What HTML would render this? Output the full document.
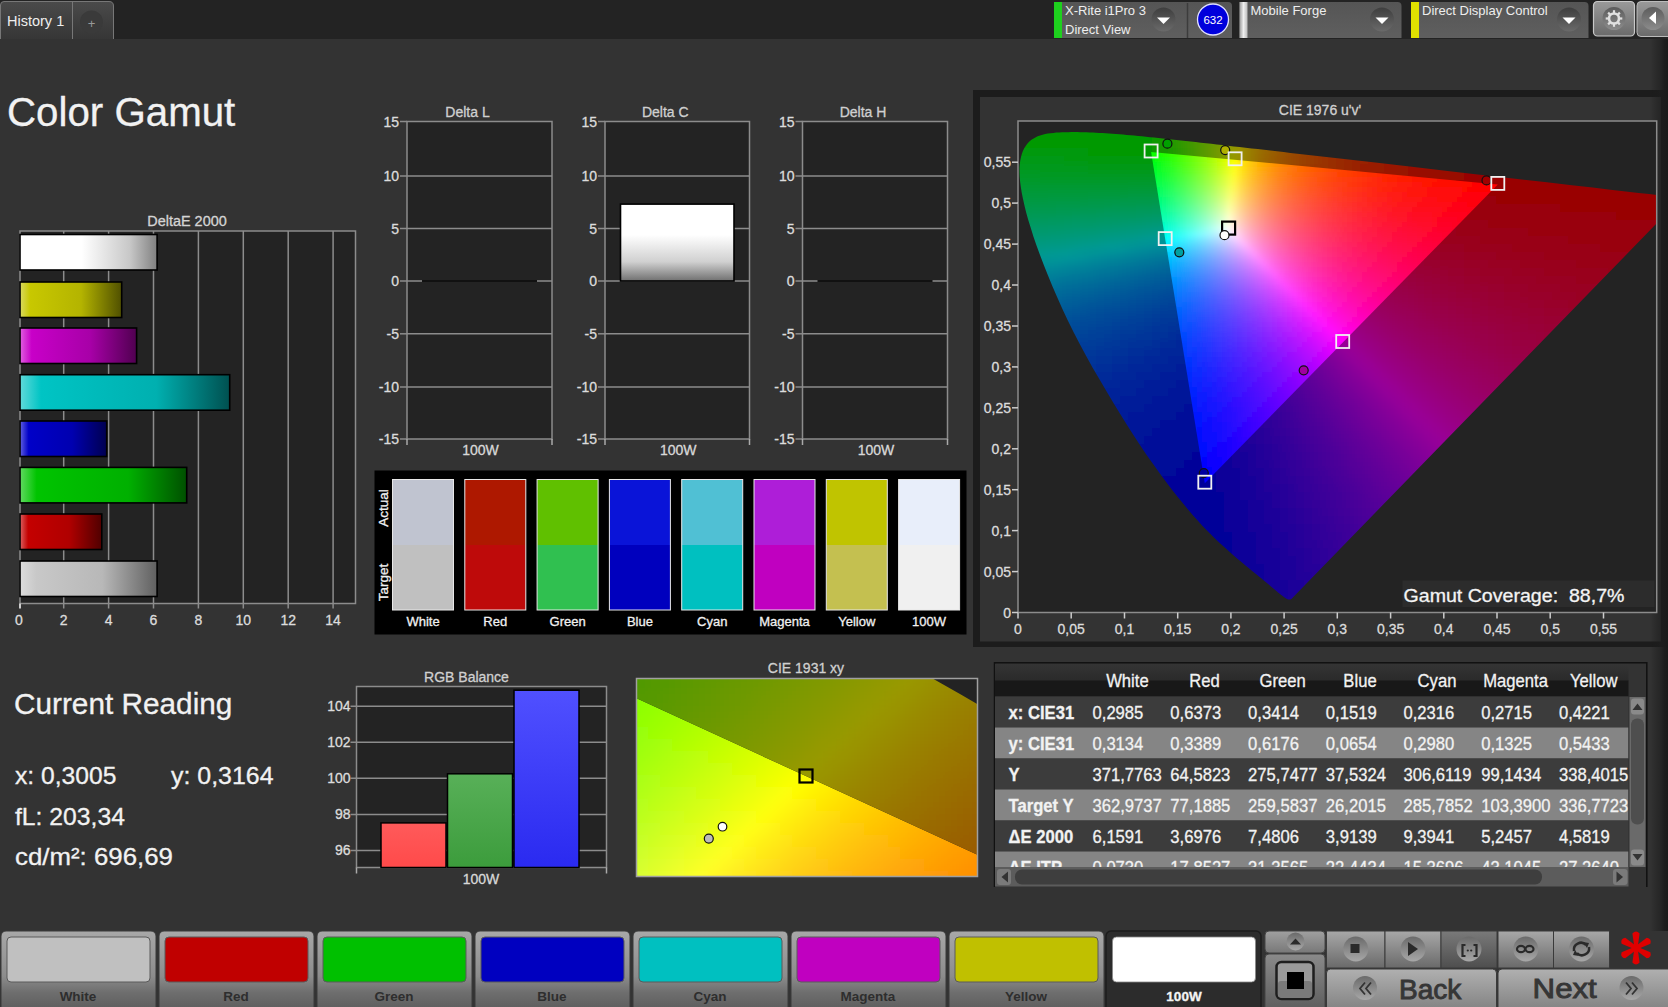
<!DOCTYPE html>
<html><head><meta charset="utf-8"><style>
html,body{margin:0;padding:0;background:#333;overflow:hidden;}
svg{display:block;font-family:"Liberation Sans", sans-serif;}
.c10 rect{width:10px;height:10px} .c8 rect{width:8px;height:8px} .c5 rect{width:5px;height:5px} .c6 rect{width:6px;height:6px} .c12 rect{width:12px;height:12px}
</style></head><body>
<svg width="1668" height="1007" viewBox="0 0 1668 1007">
<defs>
<linearGradient id="tabg" x1="0" y1="0" x2="0" y2="1"><stop offset="0" stop-color="#4a4a4a"/><stop offset="1" stop-color="#363636"/></linearGradient>
<linearGradient id="ddg" x1="0" y1="0" x2="0" y2="1"><stop offset="0" stop-color="#555"/><stop offset="1" stop-color="#5f5f5f"/></linearGradient><linearGradient id="arrg" x1="0" y1="0" x2="0" y2="1"><stop offset="0" stop-color="#3e3e3e"/><stop offset="1" stop-color="#6a6a6a"/></linearGradient><linearGradient id="wstrip" x1="0" y1="0" x2="1" y2="0"><stop offset="0" stop-color="#999"/><stop offset="0.5" stop-color="#f0f0f0"/><stop offset="1" stop-color="#bbb"/></linearGradient><linearGradient id="gearbg" x1="0" y1="0" x2="0" y2="1"><stop offset="0" stop-color="#5c5c5c"/><stop offset="1" stop-color="#8c8c8c"/></linearGradient><linearGradient id="btng" x1="0" y1="0" x2="0" y2="1"><stop offset="0" stop-color="#9a9a9a"/><stop offset="1" stop-color="#6a6a6a"/></linearGradient><linearGradient id="de_w" x1="0" y1="0" x2="1" y2="0"><stop offset="0" stop-color="#fff"/><stop offset="0.45" stop-color="#fff"/><stop offset="0.8" stop-color="#c8c8c8"/><stop offset="1" stop-color="#808080"/></linearGradient><linearGradient id="de_y" x1="0" y1="0" x2="1" y2="0"><stop offset="0" stop-color="#dada60"/><stop offset="0.1" stop-color="#c8c800"/><stop offset="0.6" stop-color="#b4b400"/><stop offset="1" stop-color="#505000"/></linearGradient><linearGradient id="de_m" x1="0" y1="0" x2="1" y2="0"><stop offset="0" stop-color="#e060e0"/><stop offset="0.1" stop-color="#c800c8"/><stop offset="0.6" stop-color="#a800a8"/><stop offset="1" stop-color="#500050"/></linearGradient><linearGradient id="de_c" x1="0" y1="0" x2="1" y2="0"><stop offset="0" stop-color="#60dada"/><stop offset="0.1" stop-color="#00c4c4"/><stop offset="0.65" stop-color="#00b0b0"/><stop offset="1" stop-color="#005050"/></linearGradient><linearGradient id="de_b" x1="0" y1="0" x2="1" y2="0"><stop offset="0" stop-color="#6060e0"/><stop offset="0.1" stop-color="#0000c8"/><stop offset="0.6" stop-color="#0000b0"/><stop offset="1" stop-color="#000050"/></linearGradient><linearGradient id="de_g" x1="0" y1="0" x2="1" y2="0"><stop offset="0" stop-color="#60da60"/><stop offset="0.1" stop-color="#00c400"/><stop offset="0.65" stop-color="#00b000"/><stop offset="1" stop-color="#005000"/></linearGradient><linearGradient id="de_r" x1="0" y1="0" x2="1" y2="0"><stop offset="0" stop-color="#da6060"/><stop offset="0.1" stop-color="#c40000"/><stop offset="0.6" stop-color="#b00000"/><stop offset="1" stop-color="#500000"/></linearGradient><linearGradient id="de_k" x1="0" y1="0" x2="1" y2="0"><stop offset="0" stop-color="#dcdcdc"/><stop offset="0.12" stop-color="#c8c8c8"/><stop offset="0.6" stop-color="#b8b8b8"/><stop offset="1" stop-color="#606060"/></linearGradient><linearGradient id="dcg" x1="0" y1="0" x2="0" y2="1"><stop offset="0" stop-color="#fff"/><stop offset="0.4" stop-color="#fff"/><stop offset="0.75" stop-color="#d0d0d0"/><stop offset="1" stop-color="#707070"/></linearGradient><clipPath id="locus"><path d="M1291.4 598.9 L1291.2 598.9 L1291.0 599.2 L1290.6 599.2 L1290.2 599.5 L1289.7 599.5 L1289.0 599.5 L1288.1 599.5 L1286.5 598.7 L1286.0 598.4 L1285.5 598.1 L1284.9 597.7 L1284.3 597.3 L1283.7 596.8 L1283.1 596.4 L1282.4 595.8 L1281.6 595.3 L1280.9 594.7 L1280.0 594.0 L1279.1 593.2 L1278.0 592.4 L1277.0 591.6 L1275.8 590.6 L1274.6 589.6 L1273.4 588.6 L1272.1 587.5 L1270.7 586.3 L1269.3 585.1 L1267.8 583.8 L1266.3 582.5 L1264.7 581.2 L1263.0 579.8 L1261.2 578.3 L1259.2 576.7 L1257.2 575.1 L1255.0 573.3 L1252.8 571.4 L1250.4 569.5 L1248.0 567.5 L1245.5 565.5 L1242.9 563.3 L1240.2 561.1 L1237.4 558.7 L1234.5 556.2 L1231.4 553.5 L1228.1 550.6 L1224.8 547.6 L1221.4 544.5 L1217.8 541.2 L1214.2 537.7 L1210.5 534.1 L1206.5 530.1 L1202.3 525.7 L1197.9 520.8 L1193.1 515.5 L1188.0 509.6 L1182.7 503.1 L1177.1 496.2 L1171.4 488.9 L1165.4 481.1 L1159.3 472.8 L1153.1 464.1 L1146.6 454.9 L1140.1 445.2 L1133.4 435.0 L1126.7 424.4 L1119.9 413.5 L1113.0 402.2 L1106.2 390.8 L1099.3 379.1 L1092.5 367.4 L1085.9 355.6 L1079.6 343.7 L1073.5 331.9 L1067.7 320.2 L1062.3 308.7 L1057.2 297.3 L1052.4 286.2 L1048.0 275.5 L1043.8 265.0 L1040.0 255.0 L1036.5 245.5 L1033.4 236.4 L1030.7 227.8 L1028.2 219.8 L1026.1 212.2 L1024.4 205.2 L1022.9 198.6 L1021.7 192.5 L1020.8 186.8 L1020.1 181.5 L1019.7 176.6 L1019.5 172.0 L1019.5 167.8 L1019.8 163.9 L1020.3 160.2 L1021.0 156.9 L1021.9 153.7 L1022.9 150.9 L1024.2 148.3 L1025.7 145.9 L1027.3 143.7 L1029.1 141.8 L1031.1 140.1 L1033.2 138.7 L1035.4 137.4 L1037.7 136.3 L1040.1 135.4 L1042.6 134.7 L1045.2 134.0 L1047.9 133.5 L1050.6 133.2 L1053.5 132.9 L1056.3 132.6 L1059.3 132.4 L1062.2 132.3 L1065.2 132.2 L1068.3 132.2 L1071.3 132.1 L1074.3 132.1 L1077.3 132.1 L1080.4 132.2 L1083.4 132.2 L1086.5 132.3 L1089.6 132.4 L1092.7 132.5 L1095.9 132.7 L1099.1 132.9 L1102.3 133.1 L1105.6 133.3 L1109.0 133.5 L1112.4 133.7 L1115.9 134.0 L1119.4 134.3 L1123.0 134.6 L1126.6 134.9 L1130.4 135.2 L1134.1 135.6 L1138.0 136.0 L1141.9 136.3 L1145.9 136.7 L1150.0 137.2 L1154.1 137.6 L1158.4 138.0 L1162.7 138.5 L1167.1 138.9 L1171.7 139.4 L1176.3 139.9 L1181.0 140.4 L1185.8 141.0 L1190.7 141.5 L1195.7 142.1 L1200.8 142.7 L1206.0 143.2 L1211.3 143.8 L1216.7 144.4 L1222.3 145.1 L1227.9 145.7 L1233.7 146.4 L1239.5 147.0 L1245.5 147.7 L1251.6 148.4 L1257.8 149.1 L1264.1 149.8 L1270.5 150.6 L1277.0 151.3 L1283.7 152.1 L1290.4 152.9 L1297.3 153.7 L1333.0 157.8 L1370.9 162.1 L1409.8 166.6 L1447.5 170.9 L1484.2 175.2 L1517.4 178.9 L1546.8 182.3 L1571.8 185.2 L1592.7 187.6 L1610.4 189.7 L1625.7 191.4 L1638.6 192.9 L1649.1 194.1 L1657.2 195.0 L1663.6 195.8 L1668.3 196.3 L1671.4 196.7 L1673.9 196.9 L1676.1 197.2 L1677.9 197.4 L1679.5 197.6 L1680.7 197.7 L1681.5 197.8 L1681.6 197.8 Z"/></clipPath><clipPath id="plot76"><rect x="1018.0" y="121" width="638.7" height="491.5"/></clipPath><clipPath id="tri76"><path d="M1497.8 184.4 L1151.1 152.0 L1204.8 483.2 Z"/></clipPath><filter id="bl6" x="-5%" y="-5%" width="110%" height="110%"><feGaussianBlur stdDeviation="4"/></filter><filter id="bl4" x="-5%" y="-5%" width="110%" height="110%"><feGaussianBlur stdDeviation="2.6"/></filter><linearGradient id="rshade" x1="0" y1="0" x2="1" y2="0"><stop offset="0" stop-color="#1a1a1a" stop-opacity="0"/><stop offset="0.55" stop-color="#1e1e1e" stop-opacity="0.6"/><stop offset="0.8" stop-color="#1c1c1c" stop-opacity="0.95"/><stop offset="1" stop-color="#1a1a1a"/></linearGradient><linearGradient id="rb_r" x1="0" y1="0" x2="0" y2="1"><stop offset="0" stop-color="#ff5a5a"/><stop offset="1" stop-color="#ff4a4a"/></linearGradient><linearGradient id="rb_g" x1="0" y1="0" x2="0" y2="1"><stop offset="0" stop-color="#58b058"/><stop offset="1" stop-color="#3c9c3c"/></linearGradient><linearGradient id="rb_b" x1="0" y1="0" x2="0" y2="1"><stop offset="0" stop-color="#5050ff"/><stop offset="1" stop-color="#2a2af0"/></linearGradient><clipPath id="plot31"><rect x="636.5" y="678.5" width="341.0" height="198.0"/></clipPath><clipPath id="in31"><path d="M616.5 689.1 L997.5 864.0 L997.5 896.5 L616.5 896.5 Z"/></clipPath><clipPath id="out31"><path d="M616.5 689.1 L997.5 864.0 L997.5 658.5 L616.5 658.5 Z"/></clipPath><filter id="bl8" x="-5%" y="-5%" width="110%" height="110%"><feGaussianBlur stdDeviation="6"/></filter><clipPath id="loc31"><path d="M-169.9 1926.7 L-170.3 1926.7 L-171.1 1926.9 L-171.9 1926.9 L-173.1 1927.1 L-174.3 1927.1 L-175.9 1927.1 L-177.9 1927.1 L-180.6 1926.5 L-181.4 1926.2 L-182.2 1925.9 L-183.1 1925.6 L-184.1 1925.2 L-185.0 1924.8 L-186.0 1924.4 L-187.0 1924.0 L-188.1 1923.5 L-189.3 1922.9 L-190.6 1922.3 L-192.0 1921.7 L-193.5 1920.9 L-195.1 1920.2 L-196.8 1919.3 L-198.6 1918.4 L-200.4 1917.5 L-202.3 1916.4 L-204.2 1915.4 L-206.3 1914.3 L-208.5 1913.1 L-210.8 1911.9 L-213.3 1910.7 L-215.9 1909.4 L-218.6 1907.9 L-221.6 1906.5 L-224.8 1904.8 L-228.2 1903.1 L-231.8 1901.3 L-235.6 1899.4 L-239.5 1897.5 L-243.6 1895.4 L-247.9 1893.3 L-252.3 1891.0 L-257.0 1888.6 L-261.8 1886.0 L-267.0 1883.2 L-272.3 1880.1 L-277.9 1876.9 L-283.7 1873.5 L-289.7 1869.9 L-295.8 1866.0 L-302.2 1861.9 L-308.9 1857.3 L-316.0 1852.2 L-323.5 1846.4 L-331.6 1839.9 L-340.2 1832.5 L-349.3 1824.3 L-358.8 1815.2 L-368.9 1805.2 L-379.4 1794.3 L-390.4 1782.3 L-402.0 1769.1 L-414.0 1754.6 L-426.6 1738.5 L-439.8 1721.0 L-453.6 1701.7 L-468.1 1680.7 L-483.3 1657.8 L-499.4 1633.0 L-516.4 1606.1 L-534.0 1577.2 L-552.2 1546.0 L-570.7 1512.5 L-589.4 1476.6 L-608.0 1438.2 L-626.6 1397.2 L-645.2 1353.8 L-663.7 1308.0 L-682.1 1259.7 L-700.5 1209.0 L-718.6 1156.3 L-736.3 1101.8 L-753.2 1046.0 L-769.3 989.0 L-784.2 931.3 L-797.9 873.1 L-810.2 815.0 L-821.0 757.1 L-830.2 699.9 L-837.6 643.6 L-843.1 588.6 L-846.6 534.9 L-848.1 482.7 L-847.3 432.1 L-844.2 383.5 L-838.7 337.0 L-830.8 292.8 L-820.4 251.3 L-807.5 212.7 L-792.0 177.3 L-774.2 145.2 L-754.1 116.6 L-732.0 91.7 L-708.0 70.6 L-682.3 53.5 L-655.2 40.2 L-626.8 30.4 L-597.4 23.9 L-567.1 20.4 L-536.2 19.8 L-504.7 21.6 L-472.9 25.4 L-440.7 31.0 L-408.3 37.9 L-375.8 45.9 L-343.3 54.7 L-310.9 64.2 L-278.8 74.2 L-247.1 84.6 L-215.9 95.3 L-185.2 106.2 L-154.8 117.4 L-124.8 128.8 L-95.1 140.5 L-65.6 152.5 L-36.2 164.8 L-7.1 177.4 L22.0 190.2 L51.0 203.3 L79.9 216.7 L108.8 230.2 L137.6 244.1 L166.4 258.1 L195.1 272.3 L223.7 286.7 L252.2 301.3 L280.7 316.0 L309.1 330.9 L337.6 345.9 L366.0 361.0 L394.4 376.3 L422.8 391.7 L451.2 407.1 L479.6 422.7 L508.1 438.4 L536.6 454.2 L565.2 470.0 L593.7 485.9 L622.1 501.8 L650.5 517.8 L678.9 533.9 L707.2 549.9 L735.5 566.0 L763.8 582.1 L792.1 598.2 L820.4 614.3 L848.6 630.3 L876.7 646.4 L904.7 662.4 L932.6 678.4 L960.4 694.3 L988.0 710.2 L1015.5 726.0 L1042.8 741.7 L1070.0 757.4 L1097.0 773.0 L1123.9 788.4 L1150.5 803.8 L1176.9 819.0 L1305.5 893.1 L1426.5 962.5 L1536.7 1026.2 L1632.6 1081.4 L1717.0 1130.0 L1787.1 1170.0 L1844.0 1202.9 L1889.4 1229.1 L1925.6 1249.8 L1954.6 1266.6 L1978.9 1280.6 L1998.8 1292.1 L2014.7 1301.1 L2026.7 1308.0 L2035.8 1313.3 L2042.6 1317.2 L2047.0 1319.7 L2050.5 1321.8 L2053.6 1323.5 L2056.1 1325.0 L2058.3 1326.3 L2060.1 1327.3 L2061.2 1327.9 L2061.3 1328.0 Z"/></clipPath><clipPath id="tclip"><rect x="995" y="664" width="633.5" height="203"/></clipPath><linearGradient id="thg" x1="0" y1="0" x2="0" y2="1"><stop offset="0" stop-color="#343434"/><stop offset="1" stop-color="#2a2a2a"/></linearGradient><linearGradient id="bbg" x1="0" y1="0" x2="0" y2="1"><stop offset="0" stop-color="#a8a8a8"/><stop offset="0.55" stop-color="#8c8c8c"/><stop offset="0.75" stop-color="#6e6e6e"/><stop offset="1" stop-color="#5a5a5a"/></linearGradient><linearGradient id="cbg" x1="0" y1="0" x2="0" y2="1"><stop offset="0" stop-color="#a0a0a0"/><stop offset="1" stop-color="#787878"/></linearGradient><linearGradient id="cbg2" x1="0" y1="0" x2="0" y2="1"><stop offset="0" stop-color="#8a8a8a"/><stop offset="1" stop-color="#5a5a5a"/></linearGradient><linearGradient id="tbg" x1="0" y1="0" x2="0" y2="1"><stop offset="0" stop-color="#a8a8a8"/><stop offset="1" stop-color="#6a6a6a"/></linearGradient><linearGradient id="tbg2" x1="0" y1="0" x2="0" y2="1"><stop offset="0" stop-color="#7a7a7a"/><stop offset="1" stop-color="#4e4e4e"/></linearGradient><linearGradient id="nbg" x1="0" y1="0" x2="0" y2="1"><stop offset="0" stop-color="#b0b0b0"/><stop offset="1" stop-color="#7e7e7e"/></linearGradient><linearGradient id="circg" x1="0" y1="0" x2="0" y2="1"><stop offset="0" stop-color="#6a6a6a"/><stop offset="1" stop-color="#a8a8a8"/></linearGradient>
</defs>
<rect width="1668" height="1007" fill="#333"/>
<rect x="0" y="0" width="1668" height="39" fill="#232323"/><path d="M0.5 39 V5 Q0.5 1.5 4 1.5 H109 Q113.5 1.5 113.5 6 V39" fill="url(#tabg)" stroke="#777" stroke-width="1"/><line x1="72.5" y1="2" x2="72.5" y2="39" stroke="#777" stroke-width="1"/><circle cx="91.5" cy="22" r="11.5" fill="#3a3a3a"/><text x="91.5" y="28" font-size="13" fill="#999" text-anchor="middle">+</text><text x="7" y="26" font-size="14.5" fill="#eee">History 1</text><path d="M1054 38 V2 H1228 Q1232 2 1232 6 V38 Z" fill="url(#ddg)"/><rect x="1054" y="2" width="8" height="36" fill="#1ed01e"/><text x="1065" y="15" font-size="13" fill="#eee">X-Rite i1Pro 3</text><text x="1065" y="34" font-size="13" fill="#eee">Direct View</text><circle cx="1163.5" cy="19.5" r="12" fill="url(#arrg)"/><path d="M1157.0 17.5 H1170.0 L1163.5 24 Z" fill="#fff"/><line x1="1187.5" y1="3" x2="1187.5" y2="38" stroke="#3c3c3c" stroke-width="1.5"/><circle cx="1213" cy="19.5" r="15.5" fill="#0000dc" stroke="#e0e0ff" stroke-width="1.3"/><text x="1213" y="24" font-size="11.5" fill="#fff" text-anchor="middle">632</text><path d="M1239.5 38 V2 H1397.5 Q1401.5 2 1401.5 6 V38 Z" fill="url(#ddg)"/><rect x="1239.5" y="2" width="8" height="36" fill="url(#wstrip)"/><text x="1250.5" y="15" font-size="13" fill="#eee">Mobile Forge</text><circle cx="1382" cy="19.5" r="12" fill="url(#arrg)"/><path d="M1375.5 17.5 H1388.5 L1382 24 Z" fill="#fff"/><path d="M1411 38 V2 H1584.5 Q1588.5 2 1588.5 6 V38 Z" fill="url(#ddg)"/><rect x="1411" y="2" width="8" height="36" fill="#e0e000"/><text x="1422" y="15" font-size="13" fill="#eee">Direct Display Control</text><circle cx="1569" cy="19.5" r="12" fill="url(#arrg)"/><path d="M1562.5 17.5 H1575.5 L1569 24 Z" fill="#fff"/><rect x="1593.5" y="1.5" width="41" height="34.5" rx="4" fill="url(#btng)" stroke="#c8c8c8" stroke-width="1.2"/><circle cx="1614" cy="18.5" r="11.5" fill="url(#gearbg)"/><rect x="1612.9" y="10.2" width="2.2" height="3.5" fill="#e0e0e0" transform="rotate(0 1614 18.5)"/><rect x="1612.9" y="10.2" width="2.2" height="3.5" fill="#e0e0e0" transform="rotate(45 1614 18.5)"/><rect x="1612.9" y="10.2" width="2.2" height="3.5" fill="#e0e0e0" transform="rotate(90 1614 18.5)"/><rect x="1612.9" y="10.2" width="2.2" height="3.5" fill="#e0e0e0" transform="rotate(135 1614 18.5)"/><rect x="1612.9" y="10.2" width="2.2" height="3.5" fill="#e0e0e0" transform="rotate(180 1614 18.5)"/><rect x="1612.9" y="10.2" width="2.2" height="3.5" fill="#e0e0e0" transform="rotate(225 1614 18.5)"/><rect x="1612.9" y="10.2" width="2.2" height="3.5" fill="#e0e0e0" transform="rotate(270 1614 18.5)"/><rect x="1612.9" y="10.2" width="2.2" height="3.5" fill="#e0e0e0" transform="rotate(315 1614 18.5)"/><circle cx="1614" cy="18.5" r="5" fill="none" stroke="#e0e0e0" stroke-width="2.6"/><rect x="1637" y="1.5" width="40" height="35" rx="4" fill="url(#btng)" stroke="#bbb" stroke-width="1"/><circle cx="1653" cy="18.5" r="11.5" fill="url(#gearbg)"/><path d="M1649 18 L1656 11.5 V24 Z" fill="#fff"/><text x="7" y="126" font-size="40" fill="#f2f2f2" textLength="228.3" lengthAdjust="spacingAndGlyphs"  xml:space="preserve" stroke="#f2f2f2" stroke-width="0.3">Color Gamut</text><rect x="20" y="231" width="335.5" height="372.5" fill="#232323" stroke="#8c8c8c" stroke-width="1.5"/><line x1="63.7" y1="231" x2="63.7" y2="608.5" stroke="#8c8c8c" stroke-width="1.5"/><line x1="108.6" y1="231" x2="108.6" y2="608.5" stroke="#8c8c8c" stroke-width="1.5"/><line x1="153.5" y1="231" x2="153.5" y2="608.5" stroke="#8c8c8c" stroke-width="1.5"/><line x1="198.4" y1="231" x2="198.4" y2="608.5" stroke="#8c8c8c" stroke-width="1.5"/><line x1="243.3" y1="231" x2="243.3" y2="608.5" stroke="#8c8c8c" stroke-width="1.5"/><line x1="288.2" y1="231" x2="288.2" y2="608.5" stroke="#8c8c8c" stroke-width="1.5"/><line x1="333.1" y1="231" x2="333.1" y2="608.5" stroke="#8c8c8c" stroke-width="1.5"/><line x1="20" y1="603.5" x2="20" y2="608.5" stroke="#ccc" stroke-width="2"/><text x="18.8" y="624.5" font-size="14" fill="#dcdcdc" text-anchor="middle" stroke="#dcdcdc" stroke-width="0.3">0</text><text x="63.7" y="624.5" font-size="14" fill="#dcdcdc" text-anchor="middle" stroke="#dcdcdc" stroke-width="0.3">2</text><text x="108.6" y="624.5" font-size="14" fill="#dcdcdc" text-anchor="middle" stroke="#dcdcdc" stroke-width="0.3">4</text><text x="153.5" y="624.5" font-size="14" fill="#dcdcdc" text-anchor="middle" stroke="#dcdcdc" stroke-width="0.3">6</text><text x="198.4" y="624.5" font-size="14" fill="#dcdcdc" text-anchor="middle" stroke="#dcdcdc" stroke-width="0.3">8</text><text x="243.3" y="624.5" font-size="14" fill="#dcdcdc" text-anchor="middle" stroke="#dcdcdc" stroke-width="0.3">10</text><text x="288.2" y="624.5" font-size="14" fill="#dcdcdc" text-anchor="middle" stroke="#dcdcdc" stroke-width="0.3">12</text><text x="333.1" y="624.5" font-size="14" fill="#dcdcdc" text-anchor="middle" stroke="#dcdcdc" stroke-width="0.3">14</text><text x="187" y="226" font-size="14" fill="#d4d4d4" text-anchor="middle" textLength="79.5" lengthAdjust="spacingAndGlyphs"  xml:space="preserve" stroke="#d4d4d4" stroke-width="0.3">DeltaE 2000</text><rect x="20" y="234.5" width="137.1" height="35.5" fill="url(#de_w)" stroke="#000" stroke-width="1.6"/><rect x="20" y="282.0" width="101.7" height="35.5" fill="url(#de_y)" stroke="#000" stroke-width="1.6"/><rect x="20" y="328.0" width="116.6" height="35.5" fill="url(#de_m)" stroke="#000" stroke-width="1.6"/><rect x="20" y="374.7" width="209.7" height="35.5" fill="url(#de_c)" stroke="#000" stroke-width="1.6"/><rect x="20" y="421.0" width="86.7" height="35.5" fill="url(#de_b)" stroke="#000" stroke-width="1.6"/><rect x="20" y="467.4" width="166.7" height="35.5" fill="url(#de_g)" stroke="#000" stroke-width="1.6"/><rect x="20" y="514.0" width="81.8" height="35.5" fill="url(#de_r)" stroke="#000" stroke-width="1.6"/><rect x="20" y="561.0" width="137.1" height="35.5" fill="url(#de_k)" stroke="#000" stroke-width="1.6"/><rect x="407" y="121.5" width="145" height="317.5" fill="#232323" stroke="#8c8c8c" stroke-width="1.5"/><line x1="400" y1="121.5" x2="407" y2="121.5" stroke="#8c8c8c" stroke-width="1.5"/><text x="399" y="126.5" font-size="14" fill="#dcdcdc" text-anchor="end" stroke="#dcdcdc" stroke-width="0.3">15</text><line x1="407" y1="176.0" x2="552" y2="176.0" stroke="#8c8c8c" stroke-width="1.5"/><line x1="400" y1="176.0" x2="407" y2="176.0" stroke="#8c8c8c" stroke-width="1.5"/><text x="399" y="181.0" font-size="14" fill="#dcdcdc" text-anchor="end" stroke="#dcdcdc" stroke-width="0.3">10</text><line x1="407" y1="228.5" x2="552" y2="228.5" stroke="#8c8c8c" stroke-width="1.5"/><line x1="400" y1="228.5" x2="407" y2="228.5" stroke="#8c8c8c" stroke-width="1.5"/><text x="399" y="233.5" font-size="14" fill="#dcdcdc" text-anchor="end" stroke="#dcdcdc" stroke-width="0.3">5</text><line x1="407" y1="281.0" x2="552" y2="281.0" stroke="#8c8c8c" stroke-width="1.5"/><line x1="400" y1="281.0" x2="407" y2="281.0" stroke="#8c8c8c" stroke-width="1.5"/><text x="399" y="286.0" font-size="14" fill="#dcdcdc" text-anchor="end" stroke="#dcdcdc" stroke-width="0.3">0</text><line x1="407" y1="333.8" x2="552" y2="333.8" stroke="#8c8c8c" stroke-width="1.5"/><line x1="400" y1="333.8" x2="407" y2="333.8" stroke="#8c8c8c" stroke-width="1.5"/><text x="399" y="338.8" font-size="14" fill="#dcdcdc" text-anchor="end" stroke="#dcdcdc" stroke-width="0.3">-5</text><line x1="407" y1="387.0" x2="552" y2="387.0" stroke="#8c8c8c" stroke-width="1.5"/><line x1="400" y1="387.0" x2="407" y2="387.0" stroke="#8c8c8c" stroke-width="1.5"/><text x="399" y="392.0" font-size="14" fill="#dcdcdc" text-anchor="end" stroke="#dcdcdc" stroke-width="0.3">-10</text><line x1="400" y1="439.0" x2="407" y2="439.0" stroke="#8c8c8c" stroke-width="1.5"/><text x="399" y="444.0" font-size="14" fill="#dcdcdc" text-anchor="end" stroke="#dcdcdc" stroke-width="0.3">-15</text><line x1="407" y1="439" x2="407" y2="445" stroke="#aaa" stroke-width="1.5"/><line x1="552" y1="439" x2="552" y2="445" stroke="#aaa" stroke-width="1.5"/><text x="467.5" y="117" font-size="14" fill="#d0d0d0" text-anchor="middle" stroke="#d0d0d0" stroke-width="0.3">Delta L</text><text x="480.5" y="455" font-size="14" fill="#d8d8d8" text-anchor="middle" stroke="#d8d8d8" stroke-width="0.3">100W</text><line x1="422" y1="281.0" x2="537" y2="281.0" stroke="#111" stroke-width="2"/><rect x="605" y="121.5" width="144.5" height="317.5" fill="#232323" stroke="#8c8c8c" stroke-width="1.5"/><line x1="598" y1="121.5" x2="605" y2="121.5" stroke="#8c8c8c" stroke-width="1.5"/><text x="597" y="126.5" font-size="14" fill="#dcdcdc" text-anchor="end" stroke="#dcdcdc" stroke-width="0.3">15</text><line x1="605" y1="176.0" x2="749.5" y2="176.0" stroke="#8c8c8c" stroke-width="1.5"/><line x1="598" y1="176.0" x2="605" y2="176.0" stroke="#8c8c8c" stroke-width="1.5"/><text x="597" y="181.0" font-size="14" fill="#dcdcdc" text-anchor="end" stroke="#dcdcdc" stroke-width="0.3">10</text><line x1="605" y1="228.5" x2="749.5" y2="228.5" stroke="#8c8c8c" stroke-width="1.5"/><line x1="598" y1="228.5" x2="605" y2="228.5" stroke="#8c8c8c" stroke-width="1.5"/><text x="597" y="233.5" font-size="14" fill="#dcdcdc" text-anchor="end" stroke="#dcdcdc" stroke-width="0.3">5</text><line x1="605" y1="281.0" x2="749.5" y2="281.0" stroke="#8c8c8c" stroke-width="1.5"/><line x1="598" y1="281.0" x2="605" y2="281.0" stroke="#8c8c8c" stroke-width="1.5"/><text x="597" y="286.0" font-size="14" fill="#dcdcdc" text-anchor="end" stroke="#dcdcdc" stroke-width="0.3">0</text><line x1="605" y1="333.8" x2="749.5" y2="333.8" stroke="#8c8c8c" stroke-width="1.5"/><line x1="598" y1="333.8" x2="605" y2="333.8" stroke="#8c8c8c" stroke-width="1.5"/><text x="597" y="338.8" font-size="14" fill="#dcdcdc" text-anchor="end" stroke="#dcdcdc" stroke-width="0.3">-5</text><line x1="605" y1="387.0" x2="749.5" y2="387.0" stroke="#8c8c8c" stroke-width="1.5"/><line x1="598" y1="387.0" x2="605" y2="387.0" stroke="#8c8c8c" stroke-width="1.5"/><text x="597" y="392.0" font-size="14" fill="#dcdcdc" text-anchor="end" stroke="#dcdcdc" stroke-width="0.3">-10</text><line x1="598" y1="439.0" x2="605" y2="439.0" stroke="#8c8c8c" stroke-width="1.5"/><text x="597" y="444.0" font-size="14" fill="#dcdcdc" text-anchor="end" stroke="#dcdcdc" stroke-width="0.3">-15</text><line x1="605" y1="439" x2="605" y2="445" stroke="#aaa" stroke-width="1.5"/><line x1="749.5" y1="439" x2="749.5" y2="445" stroke="#aaa" stroke-width="1.5"/><text x="665.25" y="117" font-size="14" fill="#d0d0d0" text-anchor="middle" stroke="#d0d0d0" stroke-width="0.3">Delta C</text><text x="678.25" y="455" font-size="14" fill="#d8d8d8" text-anchor="middle" stroke="#d8d8d8" stroke-width="0.3">100W</text><rect x="620.5" y="204.1" width="113.5" height="76.9" fill="url(#dcg)" stroke="#000" stroke-width="1.6"/><rect x="802.5" y="121.5" width="145.0" height="317.5" fill="#232323" stroke="#8c8c8c" stroke-width="1.5"/><line x1="795.5" y1="121.5" x2="802.5" y2="121.5" stroke="#8c8c8c" stroke-width="1.5"/><text x="794.5" y="126.5" font-size="14" fill="#dcdcdc" text-anchor="end" stroke="#dcdcdc" stroke-width="0.3">15</text><line x1="802.5" y1="176.0" x2="947.5" y2="176.0" stroke="#8c8c8c" stroke-width="1.5"/><line x1="795.5" y1="176.0" x2="802.5" y2="176.0" stroke="#8c8c8c" stroke-width="1.5"/><text x="794.5" y="181.0" font-size="14" fill="#dcdcdc" text-anchor="end" stroke="#dcdcdc" stroke-width="0.3">10</text><line x1="802.5" y1="228.5" x2="947.5" y2="228.5" stroke="#8c8c8c" stroke-width="1.5"/><line x1="795.5" y1="228.5" x2="802.5" y2="228.5" stroke="#8c8c8c" stroke-width="1.5"/><text x="794.5" y="233.5" font-size="14" fill="#dcdcdc" text-anchor="end" stroke="#dcdcdc" stroke-width="0.3">5</text><line x1="802.5" y1="281.0" x2="947.5" y2="281.0" stroke="#8c8c8c" stroke-width="1.5"/><line x1="795.5" y1="281.0" x2="802.5" y2="281.0" stroke="#8c8c8c" stroke-width="1.5"/><text x="794.5" y="286.0" font-size="14" fill="#dcdcdc" text-anchor="end" stroke="#dcdcdc" stroke-width="0.3">0</text><line x1="802.5" y1="333.8" x2="947.5" y2="333.8" stroke="#8c8c8c" stroke-width="1.5"/><line x1="795.5" y1="333.8" x2="802.5" y2="333.8" stroke="#8c8c8c" stroke-width="1.5"/><text x="794.5" y="338.8" font-size="14" fill="#dcdcdc" text-anchor="end" stroke="#dcdcdc" stroke-width="0.3">-5</text><line x1="802.5" y1="387.0" x2="947.5" y2="387.0" stroke="#8c8c8c" stroke-width="1.5"/><line x1="795.5" y1="387.0" x2="802.5" y2="387.0" stroke="#8c8c8c" stroke-width="1.5"/><text x="794.5" y="392.0" font-size="14" fill="#dcdcdc" text-anchor="end" stroke="#dcdcdc" stroke-width="0.3">-10</text><line x1="795.5" y1="439.0" x2="802.5" y2="439.0" stroke="#8c8c8c" stroke-width="1.5"/><text x="794.5" y="444.0" font-size="14" fill="#dcdcdc" text-anchor="end" stroke="#dcdcdc" stroke-width="0.3">-15</text><line x1="802.5" y1="439" x2="802.5" y2="445" stroke="#aaa" stroke-width="1.5"/><line x1="947.5" y1="439" x2="947.5" y2="445" stroke="#aaa" stroke-width="1.5"/><text x="863.0" y="117" font-size="14" fill="#d0d0d0" text-anchor="middle" stroke="#d0d0d0" stroke-width="0.3">Delta H</text><text x="876.0" y="455" font-size="14" fill="#d8d8d8" text-anchor="middle" stroke="#d8d8d8" stroke-width="0.3">100W</text><line x1="817.5" y1="281.0" x2="932.5" y2="281.0" stroke="#111" stroke-width="2"/><rect x="374.5" y="470.5" width="592" height="164" fill="#000"/><rect x="392.5" y="479.5" width="61" height="65.5" fill="#c0c4d0"/><rect x="392.5" y="545" width="61" height="65" fill="#c0c0c0"/><rect x="392.5" y="479.5" width="61" height="130.5" fill="none" stroke="#e8e8e8" stroke-width="1"/><text x="423.0" y="626" font-size="13" fill="#f0f0f0" text-anchor="middle" stroke="#f0f0f0" stroke-width="0.3">White</text><rect x="464.8" y="479.5" width="61" height="65.5" fill="#ae1800"/><rect x="464.8" y="545" width="61" height="65" fill="#be0a0a"/><rect x="464.8" y="479.5" width="61" height="130.5" fill="none" stroke="#e8e8e8" stroke-width="1"/><text x="495.3" y="626" font-size="13" fill="#f0f0f0" text-anchor="middle" stroke="#f0f0f0" stroke-width="0.3">Red</text><rect x="537.1" y="479.5" width="61" height="65.5" fill="#60c000"/><rect x="537.1" y="545" width="61" height="65" fill="#30c050"/><rect x="537.1" y="479.5" width="61" height="130.5" fill="none" stroke="#e8e8e8" stroke-width="1"/><text x="567.6" y="626" font-size="13" fill="#f0f0f0" text-anchor="middle" stroke="#f0f0f0" stroke-width="0.3">Green</text><rect x="609.4" y="479.5" width="61" height="65.5" fill="#0a14d8"/><rect x="609.4" y="545" width="61" height="65" fill="#0000be"/><rect x="609.4" y="479.5" width="61" height="130.5" fill="none" stroke="#e8e8e8" stroke-width="1"/><text x="639.9" y="626" font-size="13" fill="#f0f0f0" text-anchor="middle" stroke="#f0f0f0" stroke-width="0.3">Blue</text><rect x="681.7" y="479.5" width="61" height="65.5" fill="#50c0d4"/><rect x="681.7" y="545" width="61" height="65" fill="#00c0c0"/><rect x="681.7" y="479.5" width="61" height="130.5" fill="none" stroke="#e8e8e8" stroke-width="1"/><text x="712.2" y="626" font-size="13" fill="#f0f0f0" text-anchor="middle" stroke="#f0f0f0" stroke-width="0.3">Cyan</text><rect x="754.0" y="479.5" width="61" height="65.5" fill="#ae1ed8"/><rect x="754.0" y="545" width="61" height="65" fill="#c000c0"/><rect x="754.0" y="479.5" width="61" height="130.5" fill="none" stroke="#e8e8e8" stroke-width="1"/><text x="784.5" y="626" font-size="13" fill="#f0f0f0" text-anchor="middle" stroke="#f0f0f0" stroke-width="0.3">Magenta</text><rect x="826.3" y="479.5" width="61" height="65.5" fill="#c0c400"/><rect x="826.3" y="545" width="61" height="65" fill="#c4c050"/><rect x="826.3" y="479.5" width="61" height="130.5" fill="none" stroke="#e8e8e8" stroke-width="1"/><text x="856.8" y="626" font-size="13" fill="#f0f0f0" text-anchor="middle" stroke="#f0f0f0" stroke-width="0.3">Yellow</text><rect x="898.6" y="479.5" width="61" height="65.5" fill="#e8eefa"/><rect x="898.6" y="545" width="61" height="65" fill="#f0f0f0"/><rect x="898.6" y="479.5" width="61" height="130.5" fill="none" stroke="#e8e8e8" stroke-width="1"/><text x="929.1" y="626" font-size="13" fill="#f0f0f0" text-anchor="middle" stroke="#f0f0f0" stroke-width="0.3">100W</text><text transform="translate(387.5 508) rotate(-90)" font-size="13.5" fill="#f0f0f0" text-anchor="middle" stroke="#f0f0f0" stroke-width="0.3">Actual</text><text transform="translate(387.5 582.5) rotate(-90)" font-size="13.5" fill="#f0f0f0" text-anchor="middle" stroke="#f0f0f0" stroke-width="0.3">Target</text><rect x="973" y="90" width="700" height="557" fill="#1c1c1c"/><rect x="980" y="97" width="681" height="544.5" fill="#333"/><rect x="1650" y="39" width="18" height="892" fill="url(#rshade)"/><rect x="1018.0" y="121" width="638.7" height="491.5" fill="#232323"/><g clip-path="url(#plot76)"><g clip-path="url(#locus)"><g filter="url(#bl6)"><g class="c8"><g transform="translate(0 108)"><rect x="1032" fill="#009900"/><rect x="1040" fill="#009900"/><rect x="1048" fill="#009900"/><rect x="1056" fill="#009900"/><rect x="1064" fill="#009900"/><rect x="1072" fill="#009900"/><rect x="1080" fill="#009900"/><rect x="1088" fill="#009900"/><rect x="1096" fill="#009900"/><rect x="1104" fill="#009900"/><rect x="1112" fill="#009900"/><rect x="1120" fill="#009900"/><rect x="1128" fill="#009900"/><rect x="1136" fill="#009900"/><rect x="1144" fill="#049900"/></g><g transform="translate(0 116)"><rect x="1016" fill="#009900"/><rect x="1024" fill="#009900"/><rect x="1032" fill="#009900"/><rect x="1040" fill="#009900"/><rect x="1048" fill="#009900"/><rect x="1056" fill="#009900"/><rect x="1064" fill="#009900"/><rect x="1072" fill="#009900"/><rect x="1080" fill="#009900"/><rect x="1088" fill="#009900"/><rect x="1096" fill="#009900"/><rect x="1104" fill="#009900"/><rect x="1112" fill="#009900"/><rect x="1120" fill="#009900"/><rect x="1128" fill="#009900"/><rect x="1136" fill="#009900"/><rect x="1144" fill="#039900"/><rect x="1152" fill="#0d9900"/><rect x="1160" fill="#189900"/><rect x="1168" fill="#249900"/><rect x="1176" fill="#2f9900"/><rect x="1184" fill="#3c9900"/><rect x="1192" fill="#499900"/><rect x="1200" fill="#569900"/><rect x="1208" fill="#649900"/><rect x="1216" fill="#739900"/></g><g transform="translate(0 124)"><rect x="1008" fill="#009900"/><rect x="1016" fill="#009900"/><rect x="1024" fill="#009900"/><rect x="1032" fill="#009900"/><rect x="1040" fill="#009900"/><rect x="1048" fill="#009900"/><rect x="1056" fill="#009900"/><rect x="1064" fill="#009900"/><rect x="1072" fill="#009900"/><rect x="1080" fill="#009900"/><rect x="1088" fill="#009900"/><rect x="1096" fill="#009900"/><rect x="1104" fill="#009900"/><rect x="1112" fill="#009900"/><rect x="1120" fill="#009900"/><rect x="1128" fill="#009900"/><rect x="1136" fill="#009900"/><rect x="1144" fill="#019900"/><rect x="1152" fill="#0c9900"/><rect x="1160" fill="#179900"/><rect x="1168" fill="#239900"/><rect x="1176" fill="#2f9900"/><rect x="1184" fill="#3b9900"/><rect x="1192" fill="#489900"/><rect x="1200" fill="#569900"/><rect x="1208" fill="#659900"/><rect x="1216" fill="#749900"/><rect x="1224" fill="#849900"/><rect x="1232" fill="#959900"/><rect x="1240" fill="#998d00"/><rect x="1248" fill="#997f00"/><rect x="1256" fill="#997300"/><rect x="1264" fill="#996800"/><rect x="1272" fill="#995f00"/><rect x="1280" fill="#995700"/><rect x="1288" fill="#995000"/></g><g transform="translate(0 132)"><rect x="1000" fill="#009900"/><rect x="1008" fill="#009900"/><rect x="1016" fill="#009900"/><rect x="1024" fill="#009900"/><rect x="1032" fill="#009900"/><rect x="1040" fill="#009900"/><rect x="1048" fill="#009900"/><rect x="1056" fill="#009900"/><rect x="1064" fill="#009900"/><rect x="1072" fill="#009900"/><rect x="1080" fill="#009900"/><rect x="1088" fill="#009900"/><rect x="1096" fill="#009900"/><rect x="1104" fill="#009900"/><rect x="1112" fill="#009900"/><rect x="1120" fill="#009900"/><rect x="1128" fill="#009900"/><rect x="1136" fill="#009900"/><rect x="1144" fill="#009900"/><rect x="1152" fill="#0a9900"/><rect x="1160" fill="#169900"/><rect x="1168" fill="#219900"/><rect x="1176" fill="#2e9900"/><rect x="1184" fill="#3b9900"/><rect x="1192" fill="#489900"/><rect x="1200" fill="#569900"/><rect x="1208" fill="#659900"/><rect x="1216" fill="#759900"/><rect x="1224" fill="#859900"/><rect x="1232" fill="#969900"/><rect x="1240" fill="#998b00"/><rect x="1248" fill="#997d00"/><rect x="1256" fill="#997100"/><rect x="1264" fill="#996600"/><rect x="1272" fill="#995d00"/><rect x="1280" fill="#995500"/><rect x="1288" fill="#994e00"/><rect x="1296" fill="#994700"/><rect x="1304" fill="#994200"/><rect x="1312" fill="#993c00"/><rect x="1320" fill="#993800"/><rect x="1328" fill="#993300"/><rect x="1336" fill="#992f00"/><rect x="1344" fill="#992c00"/><rect x="1352" fill="#992800"/></g><g transform="translate(0 140)"><rect x="1000" fill="#009901"/><rect x="1008" fill="#009903"/><rect x="1016" fill="#009904"/><rect x="1024" fill="#009903"/><rect x="1032" fill="#009903"/><rect x="1040" fill="#009902"/><rect x="1048" fill="#009901"/><rect x="1056" fill="#009901"/><rect x="1064" fill="#009900"/><rect x="1072" fill="#009900"/><rect x="1080" fill="#009900"/><rect x="1088" fill="#009900"/><rect x="1096" fill="#009900"/><rect x="1104" fill="#009900"/><rect x="1112" fill="#009900"/><rect x="1120" fill="#009900"/><rect x="1128" fill="#009900"/><rect x="1136" fill="#009900"/><rect x="1144" fill="#009900"/><rect x="1152" fill="#099900"/><rect x="1160" fill="#149900"/><rect x="1168" fill="#209900"/><rect x="1176" fill="#2d9900"/><rect x="1184" fill="#3a9900"/><rect x="1192" fill="#489900"/><rect x="1200" fill="#569900"/><rect x="1208" fill="#659900"/><rect x="1216" fill="#759900"/><rect x="1224" fill="#869900"/><rect x="1232" fill="#989900"/><rect x="1240" fill="#998900"/><rect x="1248" fill="#997b00"/><rect x="1256" fill="#996f00"/><rect x="1264" fill="#996500"/><rect x="1272" fill="#995b00"/><rect x="1280" fill="#995300"/><rect x="1288" fill="#994c00"/><rect x="1296" fill="#994600"/><rect x="1304" fill="#994000"/><rect x="1312" fill="#993b00"/><rect x="1320" fill="#993600"/><rect x="1328" fill="#993200"/><rect x="1336" fill="#992e00"/><rect x="1344" fill="#992a00"/><rect x="1352" fill="#992700"/><rect x="1360" fill="#992400"/><rect x="1368" fill="#992100"/><rect x="1376" fill="#991e00"/><rect x="1384" fill="#991c00"/><rect x="1392" fill="#991900"/><rect x="1400" fill="#991700"/><rect x="1408" fill="#991500"/><rect x="1416" fill="#991300"/><rect x="1424" fill="#991100"/></g><g transform="translate(0 148)"><rect x="1000" fill="#009909"/><rect x="1008" fill="#00990b"/><rect x="1016" fill="#00990c"/><rect x="1024" fill="#00990b"/><rect x="1032" fill="#00990b"/><rect x="1040" fill="#00990a"/><rect x="1048" fill="#00990a"/><rect x="1056" fill="#009909"/><rect x="1064" fill="#009908"/><rect x="1072" fill="#009908"/><rect x="1080" fill="#009907"/><rect x="1088" fill="#009906"/><rect x="1096" fill="#009906"/><rect x="1104" fill="#009905"/><rect x="1112" fill="#009904"/><rect x="1120" fill="#009903"/><rect x="1128" fill="#009902"/><rect x="1136" fill="#009901"/><rect x="1144" fill="#009900"/><rect x="1152" fill="#079900"/><rect x="1160" fill="#139900"/><rect x="1168" fill="#1f9900"/><rect x="1176" fill="#2c9900"/><rect x="1184" fill="#399900"/><rect x="1192" fill="#479900"/><rect x="1200" fill="#569900"/><rect x="1208" fill="#669900"/><rect x="1216" fill="#769900"/><rect x="1224" fill="#879900"/><rect x="1232" fill="#999900"/><rect x="1240" fill="#998800"/><rect x="1248" fill="#997900"/><rect x="1256" fill="#996d00"/><rect x="1264" fill="#996300"/><rect x="1272" fill="#995a00"/><rect x="1280" fill="#995200"/><rect x="1288" fill="#994a00"/><rect x="1296" fill="#994400"/><rect x="1304" fill="#993e00"/><rect x="1312" fill="#993900"/><rect x="1320" fill="#993400"/><rect x="1328" fill="#993000"/><rect x="1336" fill="#992c00"/><rect x="1344" fill="#992900"/><rect x="1352" fill="#992500"/><rect x="1360" fill="#992200"/><rect x="1368" fill="#992000"/><rect x="1376" fill="#991d00"/><rect x="1384" fill="#991a00"/><rect x="1392" fill="#991800"/><rect x="1400" fill="#991600"/><rect x="1408" fill="#991400"/><rect x="1416" fill="#991200"/><rect x="1424" fill="#991000"/><rect x="1432" fill="#990f00"/><rect x="1440" fill="#990d00"/><rect x="1448" fill="#990b00"/><rect x="1456" fill="#990a00"/><rect x="1464" fill="#990900"/><rect x="1472" fill="#990700"/><rect x="1480" fill="#990600"/><rect x="1488" fill="#990500"/><rect x="1496" fill="#990400"/></g><g transform="translate(0 156)"><rect x="1000" fill="#009911"/><rect x="1008" fill="#009913"/><rect x="1016" fill="#009914"/><rect x="1024" fill="#009914"/><rect x="1032" fill="#009913"/><rect x="1040" fill="#009913"/><rect x="1048" fill="#009912"/><rect x="1056" fill="#009912"/><rect x="1064" fill="#009911"/><rect x="1072" fill="#009911"/><rect x="1080" fill="#009910"/><rect x="1088" fill="#009910"/><rect x="1096" fill="#00990f"/><rect x="1104" fill="#00990e"/><rect x="1112" fill="#00990e"/><rect x="1120" fill="#00990d"/><rect x="1128" fill="#00990c"/><rect x="1136" fill="#00990c"/><rect x="1144" fill="#00990b"/><rect x="1152" fill="#05990a"/><rect x="1160" fill="#119909"/><rect x="1168" fill="#1e9909"/><rect x="1176" fill="#2b9908"/><rect x="1184" fill="#399907"/><rect x="1192" fill="#479906"/><rect x="1200" fill="#569905"/><rect x="1208" fill="#669904"/><rect x="1216" fill="#779903"/><rect x="1224" fill="#899901"/><rect x="1232" fill="#999700"/><rect x="1240" fill="#998600"/><rect x="1248" fill="#997800"/><rect x="1256" fill="#996b00"/><rect x="1264" fill="#996100"/><rect x="1272" fill="#995800"/><rect x="1280" fill="#995000"/><rect x="1288" fill="#994900"/><rect x="1296" fill="#994200"/><rect x="1304" fill="#993d00"/><rect x="1312" fill="#993800"/><rect x="1320" fill="#993300"/><rect x="1328" fill="#992f00"/><rect x="1336" fill="#992b00"/><rect x="1344" fill="#992700"/><rect x="1352" fill="#992400"/><rect x="1360" fill="#992100"/><rect x="1368" fill="#991e00"/><rect x="1376" fill="#991c00"/><rect x="1384" fill="#991900"/><rect x="1392" fill="#991700"/><rect x="1400" fill="#991500"/><rect x="1408" fill="#991300"/><rect x="1416" fill="#991100"/><rect x="1424" fill="#990f00"/><rect x="1432" fill="#990d00"/><rect x="1440" fill="#990c00"/><rect x="1448" fill="#990a00"/><rect x="1456" fill="#990900"/><rect x="1464" fill="#990800"/><rect x="1472" fill="#990600"/><rect x="1480" fill="#990500"/><rect x="1488" fill="#990400"/><rect x="1496" fill="#990300"/><rect x="1504" fill="#990200"/><rect x="1512" fill="#990100"/><rect x="1520" fill="#990000"/><rect x="1528" fill="#990000"/><rect x="1536" fill="#990000"/><rect x="1544" fill="#990000"/><rect x="1552" fill="#990000"/><rect x="1560" fill="#990000"/></g><g transform="translate(0 164)"><rect x="1000" fill="#009919"/><rect x="1008" fill="#00991b"/><rect x="1016" fill="#00991c"/><rect x="1024" fill="#00991c"/><rect x="1032" fill="#00991c"/><rect x="1040" fill="#00991b"/><rect x="1048" fill="#00991b"/><rect x="1056" fill="#00991b"/><rect x="1064" fill="#00991a"/><rect x="1072" fill="#00991a"/><rect x="1080" fill="#00991a"/><rect x="1088" fill="#009919"/><rect x="1096" fill="#009919"/><rect x="1104" fill="#009918"/><rect x="1112" fill="#009918"/><rect x="1120" fill="#009917"/><rect x="1128" fill="#009917"/><rect x="1136" fill="#009917"/><rect x="1144" fill="#009916"/><rect x="1152" fill="#039915"/><rect x="1160" fill="#109915"/><rect x="1168" fill="#1c9914"/><rect x="1176" fill="#2a9914"/><rect x="1184" fill="#389913"/><rect x="1192" fill="#479912"/><rect x="1200" fill="#569912"/><rect x="1208" fill="#669911"/><rect x="1216" fill="#789910"/><rect x="1224" fill="#8a990f"/><rect x="1232" fill="#99950e"/><rect x="1240" fill="#99840c"/><rect x="1248" fill="#99760a"/><rect x="1256" fill="#996908"/><rect x="1264" fill="#995f06"/><rect x="1272" fill="#995605"/><rect x="1280" fill="#994e04"/><rect x="1288" fill="#994703"/><rect x="1296" fill="#994102"/><rect x="1304" fill="#993b01"/><rect x="1312" fill="#993601"/><rect x="1320" fill="#993100"/><rect x="1328" fill="#992d00"/><rect x="1336" fill="#992900"/><rect x="1344" fill="#992600"/><rect x="1352" fill="#992200"/><rect x="1360" fill="#991f00"/><rect x="1368" fill="#991d00"/><rect x="1376" fill="#991a00"/><rect x="1384" fill="#991800"/><rect x="1392" fill="#991500"/><rect x="1400" fill="#991300"/><rect x="1408" fill="#991100"/><rect x="1416" fill="#991000"/><rect x="1424" fill="#990e00"/><rect x="1432" fill="#990c00"/><rect x="1440" fill="#990b00"/><rect x="1448" fill="#990900"/><rect x="1456" fill="#990800"/><rect x="1464" fill="#990600"/><rect x="1472" fill="#990500"/><rect x="1480" fill="#990400"/><rect x="1488" fill="#990300"/><rect x="1496" fill="#990200"/><rect x="1504" fill="#990100"/><rect x="1512" fill="#990000"/><rect x="1520" fill="#990000"/><rect x="1528" fill="#990000"/><rect x="1536" fill="#990000"/><rect x="1544" fill="#990000"/><rect x="1552" fill="#990000"/><rect x="1560" fill="#990000"/><rect x="1568" fill="#990000"/><rect x="1576" fill="#990000"/><rect x="1584" fill="#990000"/><rect x="1592" fill="#990000"/><rect x="1600" fill="#990000"/><rect x="1608" fill="#990000"/><rect x="1616" fill="#990000"/><rect x="1624" fill="#990000"/><rect x="1632" fill="#990000"/></g><g transform="translate(0 172)"><rect x="1000" fill="#009922"/><rect x="1008" fill="#009924"/><rect x="1016" fill="#009925"/><rect x="1024" fill="#009925"/><rect x="1032" fill="#009925"/><rect x="1040" fill="#009924"/><rect x="1048" fill="#009924"/><rect x="1056" fill="#009924"/><rect x="1064" fill="#009924"/><rect x="1072" fill="#009924"/><rect x="1080" fill="#009923"/><rect x="1088" fill="#009923"/><rect x="1096" fill="#009923"/><rect x="1104" fill="#009923"/><rect x="1112" fill="#009923"/><rect x="1120" fill="#009922"/><rect x="1128" fill="#009922"/><rect x="1136" fill="#009922"/><rect x="1144" fill="#009922"/><rect x="1152" fill="#029921"/><rect x="1160" fill="#0e9921"/><rect x="1168" fill="#1b9921"/><rect x="1176" fill="#299920"/><rect x="1184" fill="#379920"/><rect x="1192" fill="#469920"/><rect x="1200" fill="#56991f"/><rect x="1208" fill="#67991f"/><rect x="1216" fill="#79991e"/><rect x="1224" fill="#8b991e"/><rect x="1232" fill="#99931c"/><rect x="1240" fill="#998219"/><rect x="1248" fill="#997415"/><rect x="1256" fill="#996713"/><rect x="1264" fill="#995d10"/><rect x="1272" fill="#99540f"/><rect x="1280" fill="#994c0d"/><rect x="1288" fill="#99450b"/><rect x="1296" fill="#993f0a"/><rect x="1304" fill="#993909"/><rect x="1312" fill="#993408"/><rect x="1320" fill="#993007"/><rect x="1328" fill="#992b06"/><rect x="1336" fill="#992805"/><rect x="1344" fill="#992404"/><rect x="1352" fill="#992103"/><rect x="1360" fill="#991e03"/><rect x="1368" fill="#991b02"/><rect x="1376" fill="#991902"/><rect x="1384" fill="#991601"/><rect x="1392" fill="#991401"/><rect x="1400" fill="#991200"/><rect x="1408" fill="#991000"/><rect x="1416" fill="#990e00"/><rect x="1424" fill="#990d00"/><rect x="1432" fill="#990b00"/><rect x="1440" fill="#990900"/><rect x="1448" fill="#990800"/><rect x="1456" fill="#990700"/><rect x="1464" fill="#990500"/><rect x="1472" fill="#990400"/><rect x="1480" fill="#990300"/><rect x="1488" fill="#990200"/><rect x="1496" fill="#990100"/><rect x="1504" fill="#990000"/><rect x="1512" fill="#990000"/><rect x="1520" fill="#990000"/><rect x="1528" fill="#990000"/><rect x="1536" fill="#990000"/><rect x="1544" fill="#990000"/><rect x="1552" fill="#990000"/><rect x="1560" fill="#990000"/><rect x="1568" fill="#990000"/><rect x="1576" fill="#990000"/><rect x="1584" fill="#990000"/><rect x="1592" fill="#990000"/><rect x="1600" fill="#990000"/><rect x="1608" fill="#990000"/><rect x="1616" fill="#990000"/><rect x="1624" fill="#990000"/><rect x="1632" fill="#990000"/><rect x="1640" fill="#990000"/><rect x="1648" fill="#990000"/><rect x="1656" fill="#990000"/><rect x="1664" fill="#990000"/><rect x="1672" fill="#990000"/></g><g transform="translate(0 180)"><rect x="1000" fill="#00992b"/><rect x="1008" fill="#00992c"/><rect x="1016" fill="#00992e"/><rect x="1024" fill="#00992e"/><rect x="1032" fill="#00992e"/><rect x="1040" fill="#00992e"/><rect x="1048" fill="#00992e"/><rect x="1056" fill="#00992e"/><rect x="1064" fill="#00992e"/><rect x="1072" fill="#00992e"/><rect x="1080" fill="#00992e"/><rect x="1088" fill="#00992e"/><rect x="1096" fill="#00992e"/><rect x="1104" fill="#00992e"/><rect x="1112" fill="#00992e"/><rect x="1120" fill="#00992e"/><rect x="1128" fill="#00992e"/><rect x="1136" fill="#00992e"/><rect x="1144" fill="#00992e"/><rect x="1152" fill="#00992e"/><rect x="1160" fill="#0c992e"/><rect x="1168" fill="#1a992d"/><rect x="1176" fill="#28992d"/><rect x="1224" fill="#8d992d"/><rect x="1232" fill="#99912b"/><rect x="1240" fill="#998026"/><rect x="1248" fill="#997222"/><rect x="1256" fill="#99651e"/><rect x="1264" fill="#995b1b"/><rect x="1272" fill="#995218"/><rect x="1280" fill="#994a16"/><rect x="1288" fill="#994314"/><rect x="1296" fill="#993d12"/><rect x="1304" fill="#993710"/><rect x="1312" fill="#99320f"/><rect x="1320" fill="#992e0d"/><rect x="1328" fill="#992a0c"/><rect x="1336" fill="#99260b"/><rect x="1344" fill="#99230a"/><rect x="1352" fill="#991f09"/><rect x="1360" fill="#991d08"/><rect x="1368" fill="#991a08"/><rect x="1376" fill="#991707"/><rect x="1384" fill="#991506"/><rect x="1392" fill="#991305"/><rect x="1400" fill="#991105"/><rect x="1408" fill="#990f04"/><rect x="1416" fill="#990d04"/><rect x="1424" fill="#990b03"/><rect x="1432" fill="#990a03"/><rect x="1440" fill="#990802"/><rect x="1448" fill="#990702"/><rect x="1456" fill="#990601"/><rect x="1464" fill="#990401"/><rect x="1472" fill="#990301"/><rect x="1480" fill="#990200"/><rect x="1488" fill="#990100"/><rect x="1496" fill="#990000"/><rect x="1504" fill="#990000"/><rect x="1512" fill="#990000"/><rect x="1520" fill="#990000"/><rect x="1528" fill="#990000"/><rect x="1536" fill="#990000"/><rect x="1544" fill="#990000"/><rect x="1552" fill="#990000"/><rect x="1560" fill="#990000"/><rect x="1568" fill="#990000"/><rect x="1576" fill="#990000"/><rect x="1584" fill="#990000"/><rect x="1592" fill="#990000"/><rect x="1600" fill="#990000"/><rect x="1608" fill="#990000"/><rect x="1616" fill="#990000"/><rect x="1624" fill="#990000"/><rect x="1632" fill="#990000"/><rect x="1640" fill="#990000"/><rect x="1648" fill="#990000"/><rect x="1656" fill="#990000"/><rect x="1664" fill="#990000"/><rect x="1672" fill="#990000"/></g><g transform="translate(0 188)"><rect x="1000" fill="#009934"/><rect x="1008" fill="#009935"/><rect x="1016" fill="#009937"/><rect x="1024" fill="#009937"/><rect x="1032" fill="#009937"/><rect x="1040" fill="#009937"/><rect x="1048" fill="#009938"/><rect x="1056" fill="#009938"/><rect x="1064" fill="#009938"/><rect x="1072" fill="#009938"/><rect x="1080" fill="#009938"/><rect x="1088" fill="#009938"/><rect x="1096" fill="#009939"/><rect x="1104" fill="#009939"/><rect x="1112" fill="#009939"/><rect x="1120" fill="#009939"/><rect x="1128" fill="#00993a"/><rect x="1136" fill="#00993a"/><rect x="1144" fill="#00993a"/><rect x="1152" fill="#00993a"/><rect x="1160" fill="#0a993b"/><rect x="1168" fill="#18993b"/><rect x="1176" fill="#26993b"/><rect x="1312" fill="#993116"/><rect x="1320" fill="#992c14"/><rect x="1328" fill="#992813"/><rect x="1336" fill="#992411"/><rect x="1344" fill="#992110"/><rect x="1352" fill="#991e0f"/><rect x="1360" fill="#991b0e"/><rect x="1368" fill="#99180d"/><rect x="1376" fill="#99160c"/><rect x="1384" fill="#99140b"/><rect x="1392" fill="#99110a"/><rect x="1400" fill="#990f09"/><rect x="1408" fill="#990e09"/><rect x="1416" fill="#990c08"/><rect x="1424" fill="#990a07"/><rect x="1432" fill="#990907"/><rect x="1440" fill="#990706"/><rect x="1448" fill="#990606"/><rect x="1456" fill="#990405"/><rect x="1464" fill="#990305"/><rect x="1472" fill="#990204"/><rect x="1480" fill="#990104"/><rect x="1488" fill="#990003"/><rect x="1496" fill="#990003"/><rect x="1504" fill="#990003"/><rect x="1512" fill="#990002"/><rect x="1520" fill="#990002"/><rect x="1528" fill="#990002"/><rect x="1536" fill="#990001"/><rect x="1544" fill="#990001"/><rect x="1552" fill="#990001"/><rect x="1560" fill="#990000"/><rect x="1568" fill="#990000"/><rect x="1576" fill="#990000"/><rect x="1584" fill="#990000"/><rect x="1592" fill="#990000"/><rect x="1600" fill="#990000"/><rect x="1608" fill="#990000"/><rect x="1616" fill="#990000"/><rect x="1624" fill="#990000"/><rect x="1632" fill="#990000"/><rect x="1640" fill="#990000"/><rect x="1648" fill="#990000"/><rect x="1656" fill="#990000"/><rect x="1664" fill="#990000"/><rect x="1672" fill="#990000"/></g><g transform="translate(0 196)"><rect x="1000" fill="#00993d"/><rect x="1008" fill="#00993f"/><rect x="1016" fill="#009940"/><rect x="1024" fill="#009941"/><rect x="1032" fill="#009941"/><rect x="1040" fill="#009941"/><rect x="1048" fill="#009942"/><rect x="1056" fill="#009942"/><rect x="1064" fill="#009942"/><rect x="1072" fill="#009943"/><rect x="1080" fill="#009943"/><rect x="1088" fill="#009944"/><rect x="1096" fill="#009944"/><rect x="1104" fill="#009945"/><rect x="1112" fill="#009945"/><rect x="1120" fill="#009946"/><rect x="1128" fill="#009946"/><rect x="1136" fill="#009947"/><rect x="1144" fill="#009947"/><rect x="1152" fill="#009948"/><rect x="1160" fill="#099949"/><rect x="1168" fill="#169949"/><rect x="1176" fill="#25994a"/><rect x="1392" fill="#99100f"/><rect x="1400" fill="#990e0e"/><rect x="1408" fill="#990c0d"/><rect x="1416" fill="#990b0c"/><rect x="1424" fill="#99090c"/><rect x="1432" fill="#99070b"/><rect x="1440" fill="#99060a"/><rect x="1448" fill="#99050a"/><rect x="1456" fill="#990309"/><rect x="1464" fill="#990208"/><rect x="1472" fill="#990108"/><rect x="1480" fill="#990007"/><rect x="1488" fill="#990007"/><rect x="1496" fill="#990006"/><rect x="1504" fill="#990006"/><rect x="1512" fill="#990006"/><rect x="1520" fill="#990005"/><rect x="1528" fill="#990005"/><rect x="1536" fill="#990004"/><rect x="1544" fill="#990004"/><rect x="1552" fill="#990004"/><rect x="1560" fill="#990003"/><rect x="1568" fill="#990003"/><rect x="1576" fill="#990003"/><rect x="1584" fill="#990002"/><rect x="1592" fill="#990002"/><rect x="1600" fill="#990002"/><rect x="1608" fill="#990002"/><rect x="1616" fill="#990001"/><rect x="1624" fill="#990001"/><rect x="1632" fill="#990001"/><rect x="1640" fill="#990001"/><rect x="1648" fill="#990000"/><rect x="1656" fill="#990000"/><rect x="1664" fill="#990000"/><rect x="1672" fill="#990000"/></g><g transform="translate(0 204)"><rect x="1000" fill="#009947"/><rect x="1008" fill="#009949"/><rect x="1016" fill="#00994a"/><rect x="1024" fill="#00994b"/><rect x="1032" fill="#00994b"/><rect x="1040" fill="#00994c"/><rect x="1048" fill="#00994c"/><rect x="1056" fill="#00994d"/><rect x="1064" fill="#00994d"/><rect x="1072" fill="#00994e"/><rect x="1080" fill="#00994f"/><rect x="1088" fill="#00994f"/><rect x="1096" fill="#009950"/><rect x="1104" fill="#009951"/><rect x="1112" fill="#009952"/><rect x="1120" fill="#009952"/><rect x="1128" fill="#009953"/><rect x="1136" fill="#009954"/><rect x="1144" fill="#009955"/><rect x="1152" fill="#009956"/><rect x="1160" fill="#079957"/><rect x="1168" fill="#159958"/><rect x="1176" fill="#249959"/><rect x="1440" fill="#99050e"/><rect x="1448" fill="#99030e"/><rect x="1456" fill="#99020d"/><rect x="1464" fill="#99010c"/><rect x="1472" fill="#99000c"/><rect x="1480" fill="#99000b"/><rect x="1488" fill="#99000a"/><rect x="1496" fill="#99000a"/><rect x="1504" fill="#990009"/><rect x="1512" fill="#990009"/><rect x="1520" fill="#990008"/><rect x="1528" fill="#990008"/><rect x="1536" fill="#990007"/><rect x="1544" fill="#990007"/><rect x="1552" fill="#990007"/><rect x="1560" fill="#990006"/><rect x="1568" fill="#990006"/><rect x="1576" fill="#990005"/><rect x="1584" fill="#990005"/><rect x="1592" fill="#990005"/><rect x="1600" fill="#990004"/><rect x="1608" fill="#990004"/><rect x="1616" fill="#990004"/><rect x="1624" fill="#990003"/><rect x="1632" fill="#990003"/><rect x="1640" fill="#990003"/><rect x="1648" fill="#990003"/><rect x="1656" fill="#990002"/><rect x="1664" fill="#990002"/><rect x="1672" fill="#990002"/></g><g transform="translate(0 212)"><rect x="1000" fill="#009951"/><rect x="1008" fill="#009953"/><rect x="1016" fill="#009954"/><rect x="1024" fill="#009955"/><rect x="1032" fill="#009956"/><rect x="1040" fill="#009956"/><rect x="1048" fill="#009957"/><rect x="1056" fill="#009958"/><rect x="1064" fill="#009959"/><rect x="1072" fill="#00995a"/><rect x="1080" fill="#00995b"/><rect x="1088" fill="#00995c"/><rect x="1096" fill="#00995d"/><rect x="1104" fill="#00995e"/><rect x="1112" fill="#00995f"/><rect x="1120" fill="#009960"/><rect x="1128" fill="#009961"/><rect x="1136" fill="#009962"/><rect x="1144" fill="#009964"/><rect x="1152" fill="#009965"/><rect x="1160" fill="#049966"/><rect x="1168" fill="#139968"/><rect x="1176" fill="#22996a"/><rect x="1432" fill="#990513"/><rect x="1440" fill="#990412"/><rect x="1448" fill="#990212"/><rect x="1456" fill="#990111"/><rect x="1464" fill="#990010"/><rect x="1472" fill="#99000f"/><rect x="1480" fill="#99000f"/><rect x="1488" fill="#99000e"/><rect x="1496" fill="#99000d"/><rect x="1504" fill="#99000d"/><rect x="1512" fill="#99000c"/><rect x="1520" fill="#99000b"/><rect x="1528" fill="#99000b"/><rect x="1536" fill="#99000a"/><rect x="1544" fill="#99000a"/><rect x="1552" fill="#990009"/><rect x="1560" fill="#990009"/><rect x="1568" fill="#990009"/><rect x="1576" fill="#990008"/><rect x="1584" fill="#990008"/><rect x="1592" fill="#990007"/><rect x="1600" fill="#990007"/><rect x="1608" fill="#990007"/><rect x="1616" fill="#990006"/><rect x="1624" fill="#990006"/><rect x="1632" fill="#990006"/><rect x="1640" fill="#990005"/><rect x="1648" fill="#990005"/><rect x="1656" fill="#990005"/><rect x="1664" fill="#990004"/><rect x="1672" fill="#990004"/></g><g transform="translate(0 220)"><rect x="1000" fill="#00995b"/><rect x="1008" fill="#00995d"/><rect x="1016" fill="#00995f"/><rect x="1024" fill="#009960"/><rect x="1032" fill="#009961"/><rect x="1040" fill="#009962"/><rect x="1048" fill="#009963"/><rect x="1056" fill="#009964"/><rect x="1064" fill="#009965"/><rect x="1072" fill="#009966"/><rect x="1080" fill="#009967"/><rect x="1088" fill="#009968"/><rect x="1096" fill="#00996a"/><rect x="1104" fill="#00996b"/><rect x="1112" fill="#00996c"/><rect x="1120" fill="#00996e"/><rect x="1128" fill="#00996f"/><rect x="1136" fill="#009971"/><rect x="1144" fill="#009973"/><rect x="1152" fill="#009975"/><rect x="1160" fill="#029977"/><rect x="1168" fill="#119979"/><rect x="1176" fill="#21997b"/><rect x="1184" fill="#31997d"/><rect x="1424" fill="#990519"/><rect x="1432" fill="#990418"/><rect x="1440" fill="#990217"/><rect x="1448" fill="#990116"/><rect x="1456" fill="#990015"/><rect x="1464" fill="#990014"/><rect x="1472" fill="#990013"/><rect x="1480" fill="#990012"/><rect x="1488" fill="#990011"/><rect x="1496" fill="#990011"/><rect x="1504" fill="#990010"/><rect x="1512" fill="#99000f"/><rect x="1520" fill="#99000f"/><rect x="1528" fill="#99000e"/><rect x="1536" fill="#99000d"/><rect x="1544" fill="#99000d"/><rect x="1552" fill="#99000c"/><rect x="1560" fill="#99000c"/><rect x="1568" fill="#99000b"/><rect x="1576" fill="#99000b"/><rect x="1584" fill="#99000a"/><rect x="1592" fill="#99000a"/><rect x="1600" fill="#99000a"/><rect x="1608" fill="#990009"/><rect x="1616" fill="#990009"/><rect x="1624" fill="#990008"/><rect x="1632" fill="#990008"/><rect x="1640" fill="#990008"/><rect x="1648" fill="#990007"/><rect x="1656" fill="#990007"/><rect x="1664" fill="#990007"/><rect x="1672" fill="#990006"/></g><g transform="translate(0 228)"><rect x="1008" fill="#009968"/><rect x="1016" fill="#00996a"/><rect x="1024" fill="#00996b"/><rect x="1032" fill="#00996c"/><rect x="1040" fill="#00996d"/><rect x="1048" fill="#00996e"/><rect x="1056" fill="#009970"/><rect x="1064" fill="#009971"/><rect x="1072" fill="#009973"/><rect x="1080" fill="#009974"/><rect x="1088" fill="#009976"/><rect x="1096" fill="#009977"/><rect x="1104" fill="#009979"/><rect x="1112" fill="#00997b"/><rect x="1120" fill="#00997d"/><rect x="1128" fill="#00997f"/><rect x="1136" fill="#009981"/><rect x="1144" fill="#009983"/><rect x="1152" fill="#009985"/><rect x="1160" fill="#009988"/><rect x="1168" fill="#0f998a"/><rect x="1176" fill="#1f998d"/><rect x="1184" fill="#309990"/><rect x="1416" fill="#99051f"/><rect x="1424" fill="#99041d"/><rect x="1432" fill="#99021c"/><rect x="1440" fill="#99011b"/><rect x="1448" fill="#99001a"/><rect x="1456" fill="#990019"/><rect x="1464" fill="#990018"/><rect x="1472" fill="#990017"/><rect x="1480" fill="#990016"/><rect x="1488" fill="#990015"/><rect x="1496" fill="#990014"/><rect x="1504" fill="#990013"/><rect x="1512" fill="#990013"/><rect x="1520" fill="#990012"/><rect x="1528" fill="#990011"/><rect x="1536" fill="#990011"/><rect x="1544" fill="#990010"/><rect x="1552" fill="#99000f"/><rect x="1560" fill="#99000f"/><rect x="1568" fill="#99000e"/><rect x="1576" fill="#99000e"/><rect x="1584" fill="#99000d"/><rect x="1592" fill="#99000d"/><rect x="1600" fill="#99000c"/><rect x="1608" fill="#99000c"/><rect x="1616" fill="#99000b"/><rect x="1624" fill="#99000b"/><rect x="1632" fill="#99000a"/><rect x="1640" fill="#99000a"/><rect x="1648" fill="#99000a"/><rect x="1656" fill="#990009"/><rect x="1664" fill="#990009"/><rect x="1672" fill="#990009"/></g><g transform="translate(0 236)"><rect x="1008" fill="#009973"/><rect x="1016" fill="#009975"/><rect x="1024" fill="#009976"/><rect x="1032" fill="#009978"/><rect x="1040" fill="#009979"/><rect x="1048" fill="#00997b"/><rect x="1056" fill="#00997c"/><rect x="1064" fill="#00997e"/><rect x="1072" fill="#009980"/><rect x="1080" fill="#009982"/><rect x="1088" fill="#009983"/><rect x="1096" fill="#009985"/><rect x="1104" fill="#009988"/><rect x="1112" fill="#00998a"/><rect x="1120" fill="#00998c"/><rect x="1128" fill="#00998e"/><rect x="1136" fill="#009991"/><rect x="1144" fill="#009994"/><rect x="1152" fill="#009996"/><rect x="1160" fill="#009999"/><rect x="1168" fill="#0d9599"/><rect x="1176" fill="#1c9299"/><rect x="1184" fill="#2c8f99"/><rect x="1408" fill="#990625"/><rect x="1416" fill="#990423"/><rect x="1424" fill="#990322"/><rect x="1432" fill="#990120"/><rect x="1440" fill="#99001f"/><rect x="1448" fill="#99001e"/><rect x="1456" fill="#99001d"/><rect x="1464" fill="#99001b"/><rect x="1472" fill="#99001a"/><rect x="1480" fill="#990019"/><rect x="1488" fill="#990018"/><rect x="1496" fill="#990018"/><rect x="1504" fill="#990017"/><rect x="1512" fill="#990016"/><rect x="1520" fill="#990015"/><rect x="1528" fill="#990014"/><rect x="1536" fill="#990014"/><rect x="1544" fill="#990013"/><rect x="1552" fill="#990012"/><rect x="1560" fill="#990012"/><rect x="1568" fill="#990011"/><rect x="1576" fill="#990010"/><rect x="1584" fill="#990010"/><rect x="1592" fill="#99000f"/><rect x="1600" fill="#99000f"/><rect x="1608" fill="#99000e"/><rect x="1616" fill="#99000e"/><rect x="1624" fill="#99000d"/><rect x="1632" fill="#99000d"/><rect x="1640" fill="#99000c"/><rect x="1648" fill="#99000c"/><rect x="1656" fill="#99000c"/><rect x="1664" fill="#99000b"/></g><g transform="translate(0 244)"><rect x="1008" fill="#00997f"/><rect x="1016" fill="#009981"/><rect x="1024" fill="#009982"/><rect x="1032" fill="#009984"/><rect x="1040" fill="#009986"/><rect x="1048" fill="#009988"/><rect x="1056" fill="#009989"/><rect x="1064" fill="#00998b"/><rect x="1072" fill="#00998e"/><rect x="1080" fill="#009990"/><rect x="1088" fill="#009992"/><rect x="1096" fill="#009994"/><rect x="1104" fill="#009997"/><rect x="1112" fill="#009999"/><rect x="1120" fill="#009699"/><rect x="1128" fill="#009399"/><rect x="1136" fill="#009099"/><rect x="1144" fill="#008e99"/><rect x="1152" fill="#008b99"/><rect x="1160" fill="#008899"/><rect x="1168" fill="#098599"/><rect x="1176" fill="#188299"/><rect x="1184" fill="#267f99"/><rect x="1400" fill="#99062b"/><rect x="1408" fill="#99042a"/><rect x="1416" fill="#990328"/><rect x="1424" fill="#990126"/><rect x="1432" fill="#990025"/><rect x="1440" fill="#990023"/><rect x="1448" fill="#990022"/><rect x="1456" fill="#990021"/><rect x="1464" fill="#99001f"/><rect x="1472" fill="#99001e"/><rect x="1480" fill="#99001d"/><rect x="1488" fill="#99001c"/><rect x="1496" fill="#99001b"/><rect x="1504" fill="#99001a"/><rect x="1512" fill="#990019"/><rect x="1520" fill="#990018"/><rect x="1528" fill="#990018"/><rect x="1536" fill="#990017"/><rect x="1544" fill="#990016"/><rect x="1552" fill="#990015"/><rect x="1560" fill="#990015"/><rect x="1568" fill="#990014"/><rect x="1576" fill="#990013"/><rect x="1584" fill="#990013"/><rect x="1592" fill="#990012"/><rect x="1600" fill="#990011"/><rect x="1608" fill="#990011"/><rect x="1616" fill="#990010"/><rect x="1624" fill="#990010"/><rect x="1632" fill="#99000f"/><rect x="1640" fill="#99000f"/><rect x="1648" fill="#99000e"/><rect x="1656" fill="#99000e"/></g><g transform="translate(0 252)"><rect x="1016" fill="#00998d"/><rect x="1024" fill="#00998f"/><rect x="1032" fill="#009991"/><rect x="1040" fill="#009993"/><rect x="1048" fill="#009995"/><rect x="1056" fill="#009997"/><rect x="1064" fill="#009999"/><rect x="1072" fill="#009699"/><rect x="1080" fill="#009499"/><rect x="1088" fill="#009199"/><rect x="1096" fill="#008f99"/><rect x="1104" fill="#008c99"/><rect x="1112" fill="#008a99"/><rect x="1120" fill="#008799"/><rect x="1128" fill="#008499"/><rect x="1136" fill="#008299"/><rect x="1144" fill="#007f99"/><rect x="1152" fill="#007c99"/><rect x="1160" fill="#007a99"/><rect x="1168" fill="#077799"/><rect x="1176" fill="#147499"/><rect x="1184" fill="#217199"/><rect x="1392" fill="#990633"/><rect x="1400" fill="#990430"/><rect x="1408" fill="#99032e"/><rect x="1416" fill="#99012d"/><rect x="1424" fill="#99002b"/><rect x="1432" fill="#990029"/><rect x="1440" fill="#990028"/><rect x="1448" fill="#990026"/><rect x="1456" fill="#990025"/><rect x="1464" fill="#990023"/><rect x="1472" fill="#990022"/><rect x="1480" fill="#990021"/><rect x="1488" fill="#990020"/><rect x="1496" fill="#99001f"/><rect x="1504" fill="#99001e"/><rect x="1512" fill="#99001d"/><rect x="1520" fill="#99001c"/><rect x="1528" fill="#99001b"/><rect x="1536" fill="#99001a"/><rect x="1544" fill="#990019"/><rect x="1552" fill="#990018"/><rect x="1560" fill="#990018"/><rect x="1568" fill="#990017"/><rect x="1576" fill="#990016"/><rect x="1584" fill="#990015"/><rect x="1592" fill="#990015"/><rect x="1600" fill="#990014"/><rect x="1608" fill="#990014"/><rect x="1616" fill="#990013"/><rect x="1624" fill="#990012"/><rect x="1632" fill="#990012"/><rect x="1640" fill="#990011"/><rect x="1648" fill="#990011"/></g><g transform="translate(0 260)"><rect x="1016" fill="#009999"/><rect x="1024" fill="#009699"/><rect x="1032" fill="#009499"/><rect x="1040" fill="#009299"/><rect x="1048" fill="#009099"/><rect x="1056" fill="#008e99"/><rect x="1064" fill="#008b99"/><rect x="1072" fill="#008999"/><rect x="1080" fill="#008799"/><rect x="1088" fill="#008499"/><rect x="1096" fill="#008299"/><rect x="1104" fill="#007f99"/><rect x="1112" fill="#007d99"/><rect x="1120" fill="#007a99"/><rect x="1128" fill="#007899"/><rect x="1136" fill="#007599"/><rect x="1144" fill="#007399"/><rect x="1152" fill="#007099"/><rect x="1160" fill="#006d99"/><rect x="1168" fill="#046b99"/><rect x="1176" fill="#106899"/><rect x="1184" fill="#1c6599"/><rect x="1384" fill="#99063b"/><rect x="1392" fill="#990538"/><rect x="1400" fill="#990336"/><rect x="1408" fill="#990133"/><rect x="1416" fill="#990031"/><rect x="1424" fill="#99002f"/><rect x="1432" fill="#99002e"/><rect x="1440" fill="#99002c"/><rect x="1448" fill="#99002a"/><rect x="1456" fill="#990029"/><rect x="1464" fill="#990027"/><rect x="1472" fill="#990026"/><rect x="1480" fill="#990025"/><rect x="1488" fill="#990023"/><rect x="1496" fill="#990022"/><rect x="1504" fill="#990021"/><rect x="1512" fill="#990020"/><rect x="1520" fill="#99001f"/><rect x="1528" fill="#99001e"/><rect x="1536" fill="#99001d"/><rect x="1544" fill="#99001c"/><rect x="1552" fill="#99001b"/><rect x="1560" fill="#99001a"/><rect x="1568" fill="#99001a"/><rect x="1576" fill="#990019"/><rect x="1584" fill="#990018"/><rect x="1592" fill="#990018"/><rect x="1600" fill="#990017"/><rect x="1608" fill="#990016"/><rect x="1616" fill="#990016"/><rect x="1624" fill="#990015"/><rect x="1632" fill="#990014"/><rect x="1640" fill="#990014"/><rect x="1648" fill="#990013"/></g><g transform="translate(0 268)"><rect x="1016" fill="#008c99"/><rect x="1024" fill="#008a99"/><rect x="1032" fill="#008899"/><rect x="1040" fill="#008699"/><rect x="1048" fill="#008499"/><rect x="1056" fill="#008299"/><rect x="1064" fill="#008099"/><rect x="1072" fill="#007d99"/><rect x="1080" fill="#007b99"/><rect x="1088" fill="#007999"/><rect x="1096" fill="#007699"/><rect x="1104" fill="#007499"/><rect x="1112" fill="#007299"/><rect x="1120" fill="#006f99"/><rect x="1128" fill="#006d99"/><rect x="1136" fill="#006a99"/><rect x="1144" fill="#006899"/><rect x="1152" fill="#006599"/><rect x="1160" fill="#006399"/><rect x="1168" fill="#026099"/><rect x="1176" fill="#0d5e99"/><rect x="1184" fill="#195b99"/><rect x="1376" fill="#990743"/><rect x="1384" fill="#990540"/><rect x="1392" fill="#99033d"/><rect x="1400" fill="#99023b"/><rect x="1408" fill="#990038"/><rect x="1416" fill="#990036"/><rect x="1424" fill="#990034"/><rect x="1432" fill="#990032"/><rect x="1440" fill="#990030"/><rect x="1448" fill="#99002e"/><rect x="1456" fill="#99002d"/><rect x="1464" fill="#99002b"/><rect x="1472" fill="#99002a"/><rect x="1480" fill="#990028"/><rect x="1488" fill="#990027"/><rect x="1496" fill="#990026"/><rect x="1504" fill="#990025"/><rect x="1512" fill="#990023"/><rect x="1520" fill="#990022"/><rect x="1528" fill="#990021"/><rect x="1536" fill="#990020"/><rect x="1544" fill="#99001f"/><rect x="1552" fill="#99001e"/><rect x="1560" fill="#99001d"/><rect x="1568" fill="#99001d"/><rect x="1576" fill="#99001c"/><rect x="1584" fill="#99001b"/><rect x="1592" fill="#99001a"/><rect x="1600" fill="#99001a"/><rect x="1608" fill="#990019"/><rect x="1616" fill="#990018"/><rect x="1624" fill="#990017"/><rect x="1632" fill="#990017"/><rect x="1640" fill="#990016"/></g><g transform="translate(0 276)"><rect x="1024" fill="#008099"/><rect x="1032" fill="#007e99"/><rect x="1040" fill="#007c99"/><rect x="1048" fill="#007a99"/><rect x="1056" fill="#007799"/><rect x="1064" fill="#007599"/><rect x="1072" fill="#007399"/><rect x="1080" fill="#007199"/><rect x="1088" fill="#006f99"/><rect x="1096" fill="#006d99"/><rect x="1104" fill="#006a99"/><rect x="1112" fill="#006899"/><rect x="1120" fill="#006699"/><rect x="1128" fill="#006399"/><rect x="1136" fill="#006199"/><rect x="1144" fill="#005f99"/><rect x="1152" fill="#005c99"/><rect x="1160" fill="#005a99"/><rect x="1168" fill="#005799"/><rect x="1176" fill="#0b5599"/><rect x="1184" fill="#155299"/><rect x="1192" fill="#205099"/><rect x="1368" fill="#99074c"/><rect x="1376" fill="#990549"/><rect x="1384" fill="#990346"/><rect x="1392" fill="#990243"/><rect x="1400" fill="#990040"/><rect x="1408" fill="#99003d"/><rect x="1416" fill="#99003b"/><rect x="1424" fill="#990039"/><rect x="1432" fill="#990037"/><rect x="1440" fill="#990035"/><rect x="1448" fill="#990033"/><rect x="1456" fill="#990031"/><rect x="1464" fill="#99002f"/><rect x="1472" fill="#99002e"/><rect x="1480" fill="#99002c"/><rect x="1488" fill="#99002b"/><rect x="1496" fill="#990029"/><rect x="1504" fill="#990028"/><rect x="1512" fill="#990027"/><rect x="1520" fill="#990026"/><rect x="1528" fill="#990025"/><rect x="1536" fill="#990023"/><rect x="1544" fill="#990022"/><rect x="1552" fill="#990021"/><rect x="1560" fill="#990020"/><rect x="1568" fill="#990020"/><rect x="1576" fill="#99001f"/><rect x="1584" fill="#99001e"/><rect x="1592" fill="#99001d"/><rect x="1600" fill="#99001c"/><rect x="1608" fill="#99001b"/><rect x="1616" fill="#99001b"/><rect x="1624" fill="#99001a"/><rect x="1632" fill="#990019"/></g><g transform="translate(0 284)"><rect x="1024" fill="#007699"/><rect x="1032" fill="#007499"/><rect x="1040" fill="#007299"/><rect x="1048" fill="#007099"/><rect x="1056" fill="#006e99"/><rect x="1064" fill="#006c99"/><rect x="1072" fill="#006a99"/><rect x="1080" fill="#006899"/><rect x="1088" fill="#006699"/><rect x="1096" fill="#006499"/><rect x="1104" fill="#006299"/><rect x="1112" fill="#005f99"/><rect x="1120" fill="#005d99"/><rect x="1128" fill="#005b99"/><rect x="1136" fill="#005999"/><rect x="1144" fill="#005699"/><rect x="1152" fill="#005499"/><rect x="1160" fill="#005299"/><rect x="1168" fill="#004f99"/><rect x="1176" fill="#084d99"/><rect x="1184" fill="#124a99"/><rect x="1192" fill="#1d4899"/><rect x="1360" fill="#990757"/><rect x="1368" fill="#990553"/><rect x="1376" fill="#99034f"/><rect x="1384" fill="#99024b"/><rect x="1392" fill="#990048"/><rect x="1400" fill="#990045"/><rect x="1408" fill="#990043"/><rect x="1416" fill="#990040"/><rect x="1424" fill="#99003e"/><rect x="1432" fill="#99003b"/><rect x="1440" fill="#990039"/><rect x="1448" fill="#990037"/><rect x="1456" fill="#990035"/><rect x="1464" fill="#990033"/><rect x="1472" fill="#990032"/><rect x="1480" fill="#990030"/><rect x="1488" fill="#99002f"/><rect x="1496" fill="#99002d"/><rect x="1504" fill="#99002c"/><rect x="1512" fill="#99002a"/><rect x="1520" fill="#990029"/><rect x="1528" fill="#990028"/><rect x="1536" fill="#990027"/><rect x="1544" fill="#990026"/><rect x="1552" fill="#990025"/><rect x="1560" fill="#990023"/><rect x="1568" fill="#990023"/><rect x="1576" fill="#990022"/><rect x="1584" fill="#990021"/><rect x="1592" fill="#990020"/><rect x="1600" fill="#99001f"/><rect x="1608" fill="#99001e"/><rect x="1616" fill="#99001d"/><rect x="1624" fill="#99001d"/></g><g transform="translate(0 292)"><rect x="1032" fill="#006c99"/><rect x="1040" fill="#006a99"/><rect x="1048" fill="#006899"/><rect x="1056" fill="#006699"/><rect x="1064" fill="#006499"/><rect x="1072" fill="#006299"/><rect x="1080" fill="#006099"/><rect x="1088" fill="#005e99"/><rect x="1096" fill="#005c99"/><rect x="1104" fill="#005a99"/><rect x="1112" fill="#005899"/><rect x="1120" fill="#005699"/><rect x="1128" fill="#005399"/><rect x="1136" fill="#005199"/><rect x="1144" fill="#004f99"/><rect x="1152" fill="#004d99"/><rect x="1160" fill="#004a99"/><rect x="1168" fill="#004899"/><rect x="1176" fill="#064699"/><rect x="1184" fill="#104499"/><rect x="1192" fill="#194199"/><rect x="1352" fill="#990862"/><rect x="1360" fill="#99065d"/><rect x="1368" fill="#990459"/><rect x="1376" fill="#990255"/><rect x="1384" fill="#990051"/><rect x="1392" fill="#99004e"/><rect x="1400" fill="#99004b"/><rect x="1408" fill="#990048"/><rect x="1416" fill="#990045"/><rect x="1424" fill="#990042"/><rect x="1432" fill="#990040"/><rect x="1440" fill="#99003e"/><rect x="1448" fill="#99003b"/><rect x="1456" fill="#990039"/><rect x="1464" fill="#990037"/><rect x="1472" fill="#990036"/><rect x="1480" fill="#990034"/><rect x="1488" fill="#990032"/><rect x="1496" fill="#990031"/><rect x="1504" fill="#99002f"/><rect x="1512" fill="#99002e"/><rect x="1520" fill="#99002c"/><rect x="1528" fill="#99002b"/><rect x="1536" fill="#99002a"/><rect x="1544" fill="#990029"/><rect x="1552" fill="#990028"/><rect x="1560" fill="#990027"/><rect x="1568" fill="#990025"/><rect x="1576" fill="#990024"/><rect x="1584" fill="#990024"/><rect x="1592" fill="#990023"/><rect x="1600" fill="#990022"/><rect x="1608" fill="#990021"/><rect x="1616" fill="#990020"/></g><g transform="translate(0 300)"><rect x="1032" fill="#006499"/><rect x="1040" fill="#006299"/><rect x="1048" fill="#006199"/><rect x="1056" fill="#005f99"/><rect x="1064" fill="#005d99"/><rect x="1072" fill="#005b99"/><rect x="1080" fill="#005999"/><rect x="1088" fill="#005799"/><rect x="1096" fill="#005599"/><rect x="1104" fill="#005399"/><rect x="1112" fill="#005199"/><rect x="1120" fill="#004f99"/><rect x="1128" fill="#004d99"/><rect x="1136" fill="#004b99"/><rect x="1144" fill="#004899"/><rect x="1152" fill="#004699"/><rect x="1160" fill="#004499"/><rect x="1168" fill="#004299"/><rect x="1176" fill="#054099"/><rect x="1184" fill="#0e3d99"/><rect x="1192" fill="#173b99"/><rect x="1344" fill="#99086e"/><rect x="1352" fill="#990669"/><rect x="1360" fill="#990464"/><rect x="1368" fill="#99025f"/><rect x="1376" fill="#99005b"/><rect x="1384" fill="#990057"/><rect x="1392" fill="#990053"/><rect x="1400" fill="#990050"/><rect x="1408" fill="#99004d"/><rect x="1416" fill="#99004a"/><rect x="1424" fill="#990047"/><rect x="1432" fill="#990045"/><rect x="1440" fill="#990042"/><rect x="1448" fill="#990040"/><rect x="1456" fill="#99003e"/><rect x="1464" fill="#99003c"/><rect x="1472" fill="#99003a"/><rect x="1480" fill="#990038"/><rect x="1488" fill="#990036"/><rect x="1496" fill="#990034"/><rect x="1504" fill="#990033"/><rect x="1512" fill="#990031"/><rect x="1520" fill="#990030"/><rect x="1528" fill="#99002f"/><rect x="1536" fill="#99002d"/><rect x="1544" fill="#99002c"/><rect x="1552" fill="#99002b"/><rect x="1560" fill="#99002a"/><rect x="1568" fill="#990028"/><rect x="1576" fill="#990027"/><rect x="1584" fill="#990026"/><rect x="1592" fill="#990025"/><rect x="1600" fill="#990024"/><rect x="1608" fill="#990024"/></g><g transform="translate(0 308)"><rect x="1040" fill="#005c99"/><rect x="1048" fill="#005a99"/><rect x="1056" fill="#005899"/><rect x="1064" fill="#005699"/><rect x="1072" fill="#005499"/><rect x="1080" fill="#005299"/><rect x="1088" fill="#005099"/><rect x="1096" fill="#004e99"/><rect x="1104" fill="#004c99"/><rect x="1112" fill="#004b99"/><rect x="1120" fill="#004999"/><rect x="1128" fill="#004799"/><rect x="1136" fill="#004499"/><rect x="1144" fill="#004299"/><rect x="1152" fill="#004099"/><rect x="1160" fill="#003e99"/><rect x="1168" fill="#003c99"/><rect x="1176" fill="#033a99"/><rect x="1184" fill="#0c3899"/><rect x="1192" fill="#143699"/><rect x="1336" fill="#99097c"/><rect x="1344" fill="#990676"/><rect x="1352" fill="#990470"/><rect x="1360" fill="#99026b"/><rect x="1368" fill="#990066"/><rect x="1376" fill="#990061"/><rect x="1384" fill="#99005d"/><rect x="1392" fill="#990059"/><rect x="1400" fill="#990056"/><rect x="1408" fill="#990052"/><rect x="1416" fill="#99004f"/><rect x="1424" fill="#99004c"/><rect x="1432" fill="#990049"/><rect x="1440" fill="#990047"/><rect x="1448" fill="#990044"/><rect x="1456" fill="#990042"/><rect x="1464" fill="#990040"/><rect x="1472" fill="#99003e"/><rect x="1480" fill="#99003c"/><rect x="1488" fill="#99003a"/><rect x="1496" fill="#990038"/><rect x="1504" fill="#990037"/><rect x="1512" fill="#990035"/><rect x="1520" fill="#990033"/><rect x="1528" fill="#990032"/><rect x="1536" fill="#990031"/><rect x="1544" fill="#99002f"/><rect x="1552" fill="#99002e"/><rect x="1560" fill="#99002d"/><rect x="1568" fill="#99002c"/><rect x="1576" fill="#99002a"/><rect x="1584" fill="#990029"/><rect x="1592" fill="#990028"/><rect x="1600" fill="#990027"/></g><g transform="translate(0 316)"><rect x="1040" fill="#005599"/><rect x="1048" fill="#005499"/><rect x="1056" fill="#005299"/><rect x="1064" fill="#005099"/><rect x="1072" fill="#004e99"/><rect x="1080" fill="#004c99"/><rect x="1088" fill="#004b99"/><rect x="1096" fill="#004999"/><rect x="1104" fill="#004799"/><rect x="1112" fill="#004599"/><rect x="1120" fill="#004399"/><rect x="1128" fill="#004199"/><rect x="1136" fill="#003f99"/><rect x="1144" fill="#003d99"/><rect x="1152" fill="#003b99"/><rect x="1160" fill="#003999"/><rect x="1168" fill="#003799"/><rect x="1176" fill="#023599"/><rect x="1184" fill="#0a3399"/><rect x="1192" fill="#123199"/><rect x="1328" fill="#99098c"/><rect x="1336" fill="#990784"/><rect x="1344" fill="#99047e"/><rect x="1352" fill="#990277"/><rect x="1360" fill="#990072"/><rect x="1368" fill="#99006c"/><rect x="1376" fill="#990068"/><rect x="1384" fill="#990063"/><rect x="1392" fill="#99005f"/><rect x="1400" fill="#99005b"/><rect x="1408" fill="#990058"/><rect x="1416" fill="#990054"/><rect x="1424" fill="#990051"/><rect x="1432" fill="#99004e"/><rect x="1440" fill="#99004b"/><rect x="1448" fill="#990049"/><rect x="1456" fill="#990046"/><rect x="1464" fill="#990044"/><rect x="1472" fill="#990042"/><rect x="1480" fill="#990040"/><rect x="1488" fill="#99003e"/><rect x="1496" fill="#99003c"/><rect x="1504" fill="#99003a"/><rect x="1512" fill="#990038"/><rect x="1520" fill="#990037"/><rect x="1528" fill="#990035"/><rect x="1536" fill="#990034"/><rect x="1544" fill="#990032"/><rect x="1552" fill="#990031"/><rect x="1560" fill="#990030"/><rect x="1568" fill="#99002f"/><rect x="1576" fill="#99002d"/><rect x="1584" fill="#99002c"/><rect x="1592" fill="#99002b"/></g><g transform="translate(0 324)"><rect x="1040" fill="#005099"/><rect x="1048" fill="#004e99"/><rect x="1056" fill="#004c99"/><rect x="1064" fill="#004b99"/><rect x="1072" fill="#004999"/><rect x="1080" fill="#004799"/><rect x="1088" fill="#004599"/><rect x="1096" fill="#004399"/><rect x="1104" fill="#004299"/><rect x="1112" fill="#004099"/><rect x="1120" fill="#003e99"/><rect x="1128" fill="#003c99"/><rect x="1136" fill="#003a99"/><rect x="1144" fill="#003899"/><rect x="1152" fill="#003699"/><rect x="1160" fill="#003499"/><rect x="1168" fill="#003299"/><rect x="1176" fill="#003099"/><rect x="1184" fill="#082e99"/><rect x="1192" fill="#102c99"/><rect x="1200" fill="#172a99"/><rect x="1320" fill="#940a99"/><rect x="1328" fill="#990795"/><rect x="1336" fill="#99058d"/><rect x="1344" fill="#990285"/><rect x="1352" fill="#99007f"/><rect x="1360" fill="#990079"/><rect x="1368" fill="#990073"/><rect x="1376" fill="#99006e"/><rect x="1384" fill="#990069"/><rect x="1392" fill="#990065"/><rect x="1400" fill="#990061"/><rect x="1408" fill="#99005d"/><rect x="1416" fill="#990059"/><rect x="1424" fill="#990056"/><rect x="1432" fill="#990053"/><rect x="1440" fill="#990050"/><rect x="1448" fill="#99004d"/><rect x="1456" fill="#99004b"/><rect x="1464" fill="#990048"/><rect x="1472" fill="#990046"/><rect x="1480" fill="#990044"/><rect x="1488" fill="#990042"/><rect x="1496" fill="#990040"/><rect x="1504" fill="#99003e"/><rect x="1512" fill="#99003c"/><rect x="1520" fill="#99003a"/><rect x="1528" fill="#990039"/><rect x="1536" fill="#990037"/><rect x="1544" fill="#990036"/><rect x="1552" fill="#990034"/><rect x="1560" fill="#990033"/><rect x="1568" fill="#990032"/><rect x="1576" fill="#990030"/><rect x="1584" fill="#99002f"/></g><g transform="translate(0 332)"><rect x="1048" fill="#004999"/><rect x="1056" fill="#004799"/><rect x="1064" fill="#004599"/><rect x="1072" fill="#004499"/><rect x="1080" fill="#004299"/><rect x="1088" fill="#004099"/><rect x="1096" fill="#003f99"/><rect x="1104" fill="#003d99"/><rect x="1112" fill="#003b99"/><rect x="1120" fill="#003999"/><rect x="1128" fill="#003799"/><rect x="1136" fill="#003699"/><rect x="1144" fill="#003499"/><rect x="1152" fill="#003299"/><rect x="1160" fill="#003099"/><rect x="1168" fill="#002e99"/><rect x="1176" fill="#002c99"/><rect x="1184" fill="#062a99"/><rect x="1192" fill="#0e2899"/><rect x="1200" fill="#152699"/><rect x="1312" fill="#840999"/><rect x="1320" fill="#8c0799"/><rect x="1328" fill="#950599"/><rect x="1336" fill="#990395"/><rect x="1344" fill="#99008d"/><rect x="1352" fill="#990086"/><rect x="1360" fill="#990080"/><rect x="1368" fill="#99007a"/><rect x="1376" fill="#990074"/><rect x="1384" fill="#99006f"/><rect x="1392" fill="#99006b"/><rect x="1400" fill="#990066"/><rect x="1408" fill="#990062"/><rect x="1416" fill="#99005f"/><rect x="1424" fill="#99005b"/><rect x="1432" fill="#990058"/><rect x="1440" fill="#990055"/><rect x="1448" fill="#990052"/><rect x="1456" fill="#99004f"/><rect x="1464" fill="#99004d"/><rect x="1472" fill="#99004a"/><rect x="1480" fill="#990048"/><rect x="1488" fill="#990046"/><rect x="1496" fill="#990044"/><rect x="1504" fill="#990042"/><rect x="1512" fill="#990040"/><rect x="1520" fill="#99003e"/><rect x="1528" fill="#99003c"/><rect x="1536" fill="#99003b"/><rect x="1544" fill="#990039"/><rect x="1552" fill="#990038"/><rect x="1560" fill="#990036"/><rect x="1568" fill="#990035"/><rect x="1576" fill="#990033"/></g><g transform="translate(0 340)"><rect x="1048" fill="#004499"/><rect x="1056" fill="#004399"/><rect x="1064" fill="#004199"/><rect x="1072" fill="#003f99"/><rect x="1080" fill="#003e99"/><rect x="1088" fill="#003c99"/><rect x="1096" fill="#003a99"/><rect x="1104" fill="#003899"/><rect x="1112" fill="#003799"/><rect x="1120" fill="#003599"/><rect x="1128" fill="#003399"/><rect x="1136" fill="#003199"/><rect x="1144" fill="#003099"/><rect x="1152" fill="#002e99"/><rect x="1160" fill="#002c99"/><rect x="1168" fill="#002a99"/><rect x="1176" fill="#002899"/><rect x="1184" fill="#052799"/><rect x="1192" fill="#0c2599"/><rect x="1200" fill="#132399"/><rect x="1304" fill="#750999"/><rect x="1312" fill="#7d0799"/><rect x="1320" fill="#850599"/><rect x="1328" fill="#8d0399"/><rect x="1336" fill="#950099"/><rect x="1344" fill="#990095"/><rect x="1352" fill="#99008e"/><rect x="1360" fill="#990087"/><rect x="1368" fill="#990081"/><rect x="1376" fill="#99007b"/><rect x="1384" fill="#990076"/><rect x="1392" fill="#990071"/><rect x="1400" fill="#99006c"/><rect x="1408" fill="#990068"/><rect x="1416" fill="#990064"/><rect x="1424" fill="#990060"/><rect x="1432" fill="#99005d"/><rect x="1440" fill="#99005a"/><rect x="1448" fill="#990057"/><rect x="1456" fill="#990054"/><rect x="1464" fill="#990051"/><rect x="1472" fill="#99004e"/><rect x="1480" fill="#99004c"/><rect x="1488" fill="#99004a"/><rect x="1496" fill="#990047"/><rect x="1504" fill="#990045"/><rect x="1512" fill="#990043"/><rect x="1520" fill="#990041"/><rect x="1528" fill="#990040"/><rect x="1536" fill="#99003e"/><rect x="1544" fill="#99003c"/><rect x="1552" fill="#99003b"/><rect x="1560" fill="#990039"/><rect x="1568" fill="#990038"/></g><g transform="translate(0 348)"><rect x="1056" fill="#003e99"/><rect x="1064" fill="#003d99"/><rect x="1072" fill="#003b99"/><rect x="1080" fill="#003999"/><rect x="1088" fill="#003899"/><rect x="1096" fill="#003699"/><rect x="1104" fill="#003499"/><rect x="1112" fill="#003399"/><rect x="1120" fill="#003199"/><rect x="1128" fill="#002f99"/><rect x="1136" fill="#002e99"/><rect x="1144" fill="#002c99"/><rect x="1152" fill="#002a99"/><rect x="1160" fill="#002899"/><rect x="1168" fill="#002799"/><rect x="1176" fill="#002599"/><rect x="1184" fill="#042399"/><rect x="1192" fill="#0a2199"/><rect x="1200" fill="#111f99"/><rect x="1296" fill="#670999"/><rect x="1304" fill="#6e0799"/><rect x="1312" fill="#760499"/><rect x="1320" fill="#7e0299"/><rect x="1328" fill="#850099"/><rect x="1336" fill="#8d0099"/><rect x="1344" fill="#950099"/><rect x="1352" fill="#990095"/><rect x="1360" fill="#99008e"/><rect x="1368" fill="#990088"/><rect x="1376" fill="#990081"/><rect x="1384" fill="#99007c"/><rect x="1392" fill="#990077"/><rect x="1400" fill="#990072"/><rect x="1408" fill="#99006d"/><rect x="1416" fill="#990069"/><rect x="1424" fill="#990065"/><rect x="1432" fill="#990062"/><rect x="1440" fill="#99005e"/><rect x="1448" fill="#99005b"/><rect x="1456" fill="#990058"/><rect x="1464" fill="#990055"/><rect x="1472" fill="#990053"/><rect x="1480" fill="#990050"/><rect x="1488" fill="#99004e"/><rect x="1496" fill="#99004b"/><rect x="1504" fill="#990049"/><rect x="1512" fill="#990047"/><rect x="1520" fill="#990045"/><rect x="1528" fill="#990043"/><rect x="1536" fill="#990041"/><rect x="1544" fill="#990040"/><rect x="1552" fill="#99003e"/><rect x="1560" fill="#99003c"/></g><g transform="translate(0 356)"><rect x="1056" fill="#003a99"/><rect x="1064" fill="#003999"/><rect x="1072" fill="#003799"/><rect x="1080" fill="#003599"/><rect x="1088" fill="#003499"/><rect x="1096" fill="#003299"/><rect x="1104" fill="#003199"/><rect x="1112" fill="#002f99"/><rect x="1120" fill="#002d99"/><rect x="1128" fill="#002c99"/><rect x="1136" fill="#002a99"/><rect x="1144" fill="#002899"/><rect x="1152" fill="#002799"/><rect x="1160" fill="#002599"/><rect x="1168" fill="#002399"/><rect x="1176" fill="#002299"/><rect x="1184" fill="#032099"/><rect x="1192" fill="#091e99"/><rect x="1200" fill="#101c99"/><rect x="1288" fill="#5a0899"/><rect x="1296" fill="#620699"/><rect x="1304" fill="#690499"/><rect x="1312" fill="#700299"/><rect x="1320" fill="#770099"/><rect x="1328" fill="#7f0099"/><rect x="1336" fill="#860099"/><rect x="1344" fill="#8d0099"/><rect x="1352" fill="#950099"/><rect x="1360" fill="#990096"/><rect x="1368" fill="#99008f"/><rect x="1376" fill="#990088"/><rect x="1384" fill="#990082"/><rect x="1392" fill="#99007d"/><rect x="1400" fill="#990078"/><rect x="1408" fill="#990073"/><rect x="1416" fill="#99006f"/><rect x="1424" fill="#99006b"/><rect x="1432" fill="#990067"/><rect x="1440" fill="#990063"/><rect x="1448" fill="#990060"/><rect x="1456" fill="#99005d"/><rect x="1464" fill="#99005a"/><rect x="1472" fill="#990057"/><rect x="1480" fill="#990054"/><rect x="1488" fill="#990052"/><rect x="1496" fill="#99004f"/><rect x="1504" fill="#99004d"/><rect x="1512" fill="#99004b"/><rect x="1520" fill="#990049"/><rect x="1528" fill="#990047"/><rect x="1536" fill="#990045"/><rect x="1544" fill="#990043"/><rect x="1552" fill="#990041"/></g><g transform="translate(0 364)"><rect x="1064" fill="#003599"/><rect x="1072" fill="#003399"/><rect x="1080" fill="#003299"/><rect x="1088" fill="#003099"/><rect x="1096" fill="#002f99"/><rect x="1104" fill="#002d99"/><rect x="1112" fill="#002c99"/><rect x="1120" fill="#002a99"/><rect x="1128" fill="#002899"/><rect x="1136" fill="#002799"/><rect x="1144" fill="#002599"/><rect x="1152" fill="#002499"/><rect x="1160" fill="#002299"/><rect x="1168" fill="#002099"/><rect x="1176" fill="#001f99"/><rect x="1184" fill="#011d99"/><rect x="1192" fill="#081b99"/><rect x="1200" fill="#0e1a99"/><rect x="1280" fill="#4f0899"/><rect x="1288" fill="#560699"/><rect x="1296" fill="#5d0499"/><rect x="1304" fill="#640299"/><rect x="1312" fill="#6a0099"/><rect x="1320" fill="#710099"/><rect x="1328" fill="#780099"/><rect x="1336" fill="#800099"/><rect x="1344" fill="#870099"/><rect x="1352" fill="#8e0099"/><rect x="1360" fill="#950099"/><rect x="1368" fill="#990096"/><rect x="1376" fill="#99008f"/><rect x="1384" fill="#990089"/><rect x="1392" fill="#990083"/><rect x="1400" fill="#99007e"/><rect x="1408" fill="#990079"/><rect x="1416" fill="#990074"/><rect x="1424" fill="#990070"/><rect x="1432" fill="#99006c"/><rect x="1440" fill="#990068"/><rect x="1448" fill="#990065"/><rect x="1456" fill="#990061"/><rect x="1464" fill="#99005e"/><rect x="1472" fill="#99005b"/><rect x="1480" fill="#990058"/><rect x="1488" fill="#990056"/><rect x="1496" fill="#990053"/><rect x="1504" fill="#990051"/><rect x="1512" fill="#99004f"/><rect x="1520" fill="#99004c"/><rect x="1528" fill="#99004a"/><rect x="1536" fill="#990048"/><rect x="1544" fill="#990046"/></g><g transform="translate(0 372)"><rect x="1072" fill="#003099"/><rect x="1080" fill="#002f99"/><rect x="1088" fill="#002d99"/><rect x="1096" fill="#002b99"/><rect x="1104" fill="#002a99"/><rect x="1112" fill="#002899"/><rect x="1120" fill="#002799"/><rect x="1128" fill="#002599"/><rect x="1136" fill="#002499"/><rect x="1144" fill="#002299"/><rect x="1152" fill="#002199"/><rect x="1160" fill="#001f99"/><rect x="1168" fill="#001d99"/><rect x="1176" fill="#001c99"/><rect x="1184" fill="#001a99"/><rect x="1192" fill="#061999"/><rect x="1200" fill="#0c1799"/><rect x="1208" fill="#131599"/><rect x="1272" fill="#450899"/><rect x="1280" fill="#4b0699"/><rect x="1288" fill="#520499"/><rect x="1296" fill="#580299"/><rect x="1304" fill="#5f0099"/><rect x="1312" fill="#650099"/><rect x="1320" fill="#6c0099"/><rect x="1328" fill="#730099"/><rect x="1336" fill="#7a0099"/><rect x="1344" fill="#800099"/><rect x="1352" fill="#870099"/><rect x="1360" fill="#8e0099"/><rect x="1368" fill="#950099"/><rect x="1376" fill="#990096"/><rect x="1384" fill="#99008f"/><rect x="1392" fill="#990089"/><rect x="1400" fill="#990084"/><rect x="1408" fill="#99007f"/><rect x="1416" fill="#99007a"/><rect x="1424" fill="#990075"/><rect x="1432" fill="#990071"/><rect x="1440" fill="#99006d"/><rect x="1448" fill="#990069"/><rect x="1456" fill="#990066"/><rect x="1464" fill="#990063"/><rect x="1472" fill="#990060"/><rect x="1480" fill="#99005d"/><rect x="1488" fill="#99005a"/><rect x="1496" fill="#990057"/><rect x="1504" fill="#990055"/><rect x="1512" fill="#990052"/><rect x="1520" fill="#990050"/><rect x="1528" fill="#99004e"/><rect x="1536" fill="#99004c"/></g><g transform="translate(0 380)"><rect x="1072" fill="#002d99"/><rect x="1080" fill="#002b99"/><rect x="1088" fill="#002a99"/><rect x="1096" fill="#002899"/><rect x="1104" fill="#002799"/><rect x="1112" fill="#002599"/><rect x="1120" fill="#002499"/><rect x="1128" fill="#002299"/><rect x="1136" fill="#002199"/><rect x="1144" fill="#001f99"/><rect x="1152" fill="#001e99"/><rect x="1160" fill="#001c99"/><rect x="1168" fill="#001b99"/><rect x="1176" fill="#001999"/><rect x="1184" fill="#001899"/><rect x="1192" fill="#051699"/><rect x="1200" fill="#0b1499"/><rect x="1208" fill="#111399"/><rect x="1264" fill="#3b0799"/><rect x="1272" fill="#410699"/><rect x="1280" fill="#470499"/><rect x="1288" fill="#4e0299"/><rect x="1296" fill="#540099"/><rect x="1304" fill="#5a0099"/><rect x="1312" fill="#610099"/><rect x="1320" fill="#670099"/><rect x="1328" fill="#6d0099"/><rect x="1336" fill="#740099"/><rect x="1344" fill="#7b0099"/><rect x="1352" fill="#810099"/><rect x="1360" fill="#880099"/><rect x="1368" fill="#8f0099"/><rect x="1376" fill="#950099"/><rect x="1384" fill="#990096"/><rect x="1392" fill="#990090"/><rect x="1400" fill="#99008a"/><rect x="1408" fill="#990084"/><rect x="1416" fill="#99007f"/><rect x="1424" fill="#99007b"/><rect x="1432" fill="#990076"/><rect x="1440" fill="#990072"/><rect x="1448" fill="#99006e"/><rect x="1456" fill="#99006b"/><rect x="1464" fill="#990067"/><rect x="1472" fill="#990064"/><rect x="1480" fill="#990061"/><rect x="1488" fill="#99005e"/><rect x="1496" fill="#99005b"/><rect x="1504" fill="#990059"/><rect x="1512" fill="#990056"/><rect x="1520" fill="#990054"/><rect x="1528" fill="#990051"/></g><g transform="translate(0 388)"><rect x="1080" fill="#002899"/><rect x="1088" fill="#002799"/><rect x="1096" fill="#002699"/><rect x="1104" fill="#002499"/><rect x="1112" fill="#002399"/><rect x="1120" fill="#002199"/><rect x="1128" fill="#002099"/><rect x="1136" fill="#001e99"/><rect x="1144" fill="#001d99"/><rect x="1152" fill="#001b99"/><rect x="1160" fill="#001a99"/><rect x="1168" fill="#001899"/><rect x="1176" fill="#001799"/><rect x="1184" fill="#001599"/><rect x="1192" fill="#041499"/><rect x="1200" fill="#0a1299"/><rect x="1208" fill="#0f1199"/><rect x="1256" fill="#320799"/><rect x="1264" fill="#380599"/><rect x="1272" fill="#3e0499"/><rect x="1280" fill="#440299"/><rect x="1288" fill="#4a0099"/><rect x="1296" fill="#500099"/><rect x="1304" fill="#560099"/><rect x="1312" fill="#5c0099"/><rect x="1320" fill="#620099"/><rect x="1328" fill="#690099"/><rect x="1336" fill="#6f0099"/><rect x="1344" fill="#750099"/><rect x="1352" fill="#7c0099"/><rect x="1360" fill="#820099"/><rect x="1368" fill="#880099"/><rect x="1376" fill="#8f0099"/><rect x="1384" fill="#950099"/><rect x="1392" fill="#990096"/><rect x="1400" fill="#990090"/><rect x="1408" fill="#99008a"/><rect x="1416" fill="#990085"/><rect x="1424" fill="#990080"/><rect x="1432" fill="#99007c"/><rect x="1440" fill="#990077"/><rect x="1448" fill="#990073"/><rect x="1456" fill="#99006f"/><rect x="1464" fill="#99006c"/><rect x="1472" fill="#990068"/><rect x="1480" fill="#990065"/><rect x="1488" fill="#990062"/><rect x="1496" fill="#99005f"/><rect x="1504" fill="#99005d"/><rect x="1512" fill="#99005a"/><rect x="1520" fill="#990057"/></g><g transform="translate(0 396)"><rect x="1080" fill="#002699"/><rect x="1088" fill="#002499"/><rect x="1096" fill="#002399"/><rect x="1104" fill="#002299"/><rect x="1112" fill="#002099"/><rect x="1120" fill="#001f99"/><rect x="1128" fill="#001d99"/><rect x="1136" fill="#001c99"/><rect x="1144" fill="#001a99"/><rect x="1152" fill="#001999"/><rect x="1160" fill="#001899"/><rect x="1168" fill="#001699"/><rect x="1176" fill="#001599"/><rect x="1184" fill="#001399"/><rect x="1192" fill="#031299"/><rect x="1200" fill="#091099"/><rect x="1208" fill="#0e0f99"/><rect x="1248" fill="#2a0799"/><rect x="1256" fill="#2f0599"/><rect x="1264" fill="#350499"/><rect x="1272" fill="#3b0299"/><rect x="1280" fill="#410099"/><rect x="1288" fill="#460099"/><rect x="1296" fill="#4c0099"/><rect x="1304" fill="#520099"/><rect x="1312" fill="#580099"/><rect x="1320" fill="#5e0099"/><rect x="1328" fill="#640099"/><rect x="1336" fill="#6a0099"/><rect x="1344" fill="#700099"/><rect x="1352" fill="#760099"/><rect x="1360" fill="#7c0099"/><rect x="1368" fill="#830099"/><rect x="1376" fill="#890099"/><rect x="1384" fill="#8f0099"/><rect x="1392" fill="#950099"/><rect x="1400" fill="#990096"/><rect x="1408" fill="#990090"/><rect x="1416" fill="#99008b"/><rect x="1424" fill="#990086"/><rect x="1432" fill="#990081"/><rect x="1440" fill="#99007c"/><rect x="1448" fill="#990078"/><rect x="1456" fill="#990074"/><rect x="1464" fill="#990070"/><rect x="1472" fill="#99006d"/><rect x="1480" fill="#99006a"/><rect x="1488" fill="#990066"/><rect x="1496" fill="#990063"/><rect x="1504" fill="#990061"/><rect x="1512" fill="#99005e"/></g><g transform="translate(0 404)"><rect x="1088" fill="#002299"/><rect x="1096" fill="#002099"/><rect x="1104" fill="#001f99"/><rect x="1112" fill="#001e99"/><rect x="1120" fill="#001c99"/><rect x="1128" fill="#001b99"/><rect x="1136" fill="#001a99"/><rect x="1144" fill="#001899"/><rect x="1152" fill="#001799"/><rect x="1160" fill="#001599"/><rect x="1168" fill="#001499"/><rect x="1176" fill="#001299"/><rect x="1184" fill="#001199"/><rect x="1192" fill="#021099"/><rect x="1200" fill="#070e99"/><rect x="1208" fill="#0d0d99"/><rect x="1240" fill="#220799"/><rect x="1248" fill="#280599"/><rect x="1256" fill="#2d0499"/><rect x="1264" fill="#330299"/><rect x="1272" fill="#380099"/><rect x="1280" fill="#3e0099"/><rect x="1288" fill="#430099"/><rect x="1296" fill="#490099"/><rect x="1304" fill="#4f0099"/><rect x="1312" fill="#540099"/><rect x="1320" fill="#5a0099"/><rect x="1328" fill="#600099"/><rect x="1336" fill="#660099"/><rect x="1344" fill="#6b0099"/><rect x="1352" fill="#710099"/><rect x="1360" fill="#770099"/><rect x="1368" fill="#7d0099"/><rect x="1376" fill="#830099"/><rect x="1384" fill="#890099"/><rect x="1392" fill="#8f0099"/><rect x="1400" fill="#960099"/><rect x="1408" fill="#990096"/><rect x="1416" fill="#990091"/><rect x="1424" fill="#99008b"/><rect x="1432" fill="#990086"/><rect x="1440" fill="#990082"/><rect x="1448" fill="#99007d"/><rect x="1456" fill="#990079"/><rect x="1464" fill="#990075"/><rect x="1472" fill="#990071"/><rect x="1480" fill="#99006e"/><rect x="1488" fill="#99006b"/><rect x="1496" fill="#990068"/><rect x="1504" fill="#990065"/></g><g transform="translate(0 412)"><rect x="1096" fill="#001e99"/><rect x="1104" fill="#001d99"/><rect x="1112" fill="#001b99"/><rect x="1120" fill="#001a99"/><rect x="1128" fill="#001999"/><rect x="1136" fill="#001799"/><rect x="1144" fill="#001699"/><rect x="1152" fill="#001599"/><rect x="1160" fill="#001399"/><rect x="1168" fill="#001299"/><rect x="1176" fill="#001099"/><rect x="1184" fill="#000f99"/><rect x="1192" fill="#010e99"/><rect x="1200" fill="#060c99"/><rect x="1208" fill="#0c0b99"/><rect x="1232" fill="#1b0699"/><rect x="1240" fill="#200599"/><rect x="1248" fill="#260399"/><rect x="1256" fill="#2b0299"/><rect x="1264" fill="#300199"/><rect x="1272" fill="#350099"/><rect x="1280" fill="#3b0099"/><rect x="1288" fill="#400099"/><rect x="1296" fill="#460099"/><rect x="1304" fill="#4b0099"/><rect x="1312" fill="#510099"/><rect x="1320" fill="#560099"/><rect x="1328" fill="#5c0099"/><rect x="1336" fill="#610099"/><rect x="1344" fill="#670099"/><rect x="1352" fill="#6d0099"/><rect x="1360" fill="#730099"/><rect x="1368" fill="#780099"/><rect x="1376" fill="#7e0099"/><rect x="1384" fill="#840099"/><rect x="1392" fill="#8a0099"/><rect x="1400" fill="#900099"/><rect x="1408" fill="#960099"/><rect x="1416" fill="#990096"/><rect x="1424" fill="#990091"/><rect x="1432" fill="#99008c"/><rect x="1440" fill="#990087"/><rect x="1448" fill="#990082"/><rect x="1456" fill="#99007e"/><rect x="1464" fill="#99007a"/><rect x="1472" fill="#990076"/><rect x="1480" fill="#990072"/><rect x="1488" fill="#99006f"/><rect x="1496" fill="#99006c"/></g><g transform="translate(0 420)"><rect x="1096" fill="#001c99"/><rect x="1104" fill="#001b99"/><rect x="1112" fill="#001999"/><rect x="1120" fill="#001899"/><rect x="1128" fill="#001799"/><rect x="1136" fill="#001599"/><rect x="1144" fill="#001499"/><rect x="1152" fill="#001399"/><rect x="1160" fill="#001199"/><rect x="1168" fill="#001099"/><rect x="1176" fill="#000f99"/><rect x="1184" fill="#000d99"/><rect x="1192" fill="#010c99"/><rect x="1200" fill="#050a99"/><rect x="1208" fill="#0a0999"/><rect x="1216" fill="#0f0899"/><rect x="1224" fill="#140699"/><rect x="1232" fill="#190599"/><rect x="1240" fill="#1e0399"/><rect x="1248" fill="#240299"/><rect x="1256" fill="#290199"/><rect x="1264" fill="#2e0099"/><rect x="1272" fill="#330099"/><rect x="1280" fill="#380099"/><rect x="1288" fill="#3d0099"/><rect x="1296" fill="#430099"/><rect x="1304" fill="#480099"/><rect x="1312" fill="#4d0099"/><rect x="1320" fill="#530099"/><rect x="1328" fill="#580099"/><rect x="1336" fill="#5e0099"/><rect x="1344" fill="#630099"/><rect x="1352" fill="#690099"/><rect x="1360" fill="#6e0099"/><rect x="1368" fill="#740099"/><rect x="1376" fill="#790099"/><rect x="1384" fill="#7f0099"/><rect x="1392" fill="#840099"/><rect x="1400" fill="#8a0099"/><rect x="1408" fill="#900099"/><rect x="1416" fill="#960099"/><rect x="1424" fill="#990097"/><rect x="1432" fill="#990091"/><rect x="1440" fill="#99008c"/><rect x="1448" fill="#990087"/><rect x="1456" fill="#990083"/><rect x="1464" fill="#99007f"/><rect x="1472" fill="#99007b"/><rect x="1480" fill="#990077"/><rect x="1488" fill="#990073"/></g><g transform="translate(0 428)"><rect x="1104" fill="#001999"/><rect x="1112" fill="#001799"/><rect x="1120" fill="#001699"/><rect x="1128" fill="#001599"/><rect x="1136" fill="#001399"/><rect x="1144" fill="#001299"/><rect x="1152" fill="#001199"/><rect x="1160" fill="#000f99"/><rect x="1168" fill="#000e99"/><rect x="1176" fill="#000d99"/><rect x="1184" fill="#000b99"/><rect x="1192" fill="#000a99"/><rect x="1200" fill="#050999"/><rect x="1208" fill="#090799"/><rect x="1216" fill="#0e0699"/><rect x="1224" fill="#130599"/><rect x="1232" fill="#180399"/><rect x="1240" fill="#1d0299"/><rect x="1248" fill="#220199"/><rect x="1256" fill="#270099"/><rect x="1264" fill="#2c0099"/><rect x="1272" fill="#310099"/><rect x="1280" fill="#360099"/><rect x="1288" fill="#3b0099"/><rect x="1296" fill="#400099"/><rect x="1304" fill="#450099"/><rect x="1312" fill="#4a0099"/><rect x="1320" fill="#4f0099"/><rect x="1328" fill="#550099"/><rect x="1336" fill="#5a0099"/><rect x="1344" fill="#5f0099"/><rect x="1352" fill="#650099"/><rect x="1360" fill="#6a0099"/><rect x="1368" fill="#6f0099"/><rect x="1376" fill="#750099"/><rect x="1384" fill="#7a0099"/><rect x="1392" fill="#800099"/><rect x="1400" fill="#850099"/><rect x="1408" fill="#8b0099"/><rect x="1416" fill="#900099"/><rect x="1424" fill="#960099"/><rect x="1432" fill="#990097"/><rect x="1440" fill="#990091"/><rect x="1448" fill="#99008c"/><rect x="1456" fill="#990088"/><rect x="1464" fill="#990083"/><rect x="1472" fill="#99007f"/><rect x="1480" fill="#99007b"/></g><g transform="translate(0 436)"><rect x="1104" fill="#001799"/><rect x="1112" fill="#001599"/><rect x="1120" fill="#001499"/><rect x="1128" fill="#001399"/><rect x="1136" fill="#001299"/><rect x="1144" fill="#001099"/><rect x="1152" fill="#000f99"/><rect x="1160" fill="#000e99"/><rect x="1168" fill="#000c99"/><rect x="1176" fill="#000b99"/><rect x="1184" fill="#000a99"/><rect x="1192" fill="#000999"/><rect x="1200" fill="#040799"/><rect x="1208" fill="#080699"/><rect x="1216" fill="#0d0599"/><rect x="1224" fill="#120399"/><rect x="1232" fill="#160299"/><rect x="1240" fill="#1b0199"/><rect x="1248" fill="#200099"/><rect x="1256" fill="#250099"/><rect x="1264" fill="#2a0099"/><rect x="1272" fill="#2f0099"/><rect x="1280" fill="#330099"/><rect x="1288" fill="#380099"/><rect x="1296" fill="#3d0099"/><rect x="1304" fill="#420099"/><rect x="1312" fill="#470099"/><rect x="1320" fill="#4c0099"/><rect x="1328" fill="#510099"/><rect x="1336" fill="#560099"/><rect x="1344" fill="#5c0099"/><rect x="1352" fill="#610099"/><rect x="1360" fill="#660099"/><rect x="1368" fill="#6b0099"/><rect x="1376" fill="#700099"/><rect x="1384" fill="#760099"/><rect x="1392" fill="#7b0099"/><rect x="1400" fill="#800099"/><rect x="1408" fill="#860099"/><rect x="1416" fill="#8b0099"/><rect x="1424" fill="#900099"/><rect x="1432" fill="#960099"/><rect x="1440" fill="#990097"/><rect x="1448" fill="#990092"/><rect x="1456" fill="#99008d"/><rect x="1464" fill="#990088"/><rect x="1472" fill="#990084"/></g><g transform="translate(0 444)"><rect x="1112" fill="#001499"/><rect x="1120" fill="#001299"/><rect x="1128" fill="#001199"/><rect x="1136" fill="#001099"/><rect x="1144" fill="#000f99"/><rect x="1152" fill="#000d99"/><rect x="1160" fill="#000c99"/><rect x="1168" fill="#000b99"/><rect x="1176" fill="#000a99"/><rect x="1184" fill="#000899"/><rect x="1192" fill="#000799"/><rect x="1200" fill="#030699"/><rect x="1208" fill="#070499"/><rect x="1216" fill="#0c0399"/><rect x="1224" fill="#100299"/><rect x="1232" fill="#150199"/><rect x="1240" fill="#1a0099"/><rect x="1248" fill="#1e0099"/><rect x="1256" fill="#230099"/><rect x="1264" fill="#280099"/><rect x="1272" fill="#2c0099"/><rect x="1280" fill="#310099"/><rect x="1288" fill="#360099"/><rect x="1296" fill="#3b0099"/><rect x="1304" fill="#400099"/><rect x="1312" fill="#440099"/><rect x="1320" fill="#490099"/><rect x="1328" fill="#4e0099"/><rect x="1336" fill="#530099"/><rect x="1344" fill="#580099"/><rect x="1352" fill="#5d0099"/><rect x="1360" fill="#620099"/><rect x="1368" fill="#670099"/><rect x="1376" fill="#6c0099"/><rect x="1384" fill="#710099"/><rect x="1392" fill="#760099"/><rect x="1400" fill="#7c0099"/><rect x="1408" fill="#810099"/><rect x="1416" fill="#860099"/><rect x="1424" fill="#8b0099"/><rect x="1432" fill="#910099"/><rect x="1440" fill="#960099"/><rect x="1448" fill="#990097"/><rect x="1456" fill="#990092"/><rect x="1464" fill="#99008d"/></g><g transform="translate(0 452)"><rect x="1120" fill="#001199"/><rect x="1128" fill="#000f99"/><rect x="1136" fill="#000e99"/><rect x="1144" fill="#000d99"/><rect x="1152" fill="#000c99"/><rect x="1160" fill="#000b99"/><rect x="1168" fill="#000999"/><rect x="1176" fill="#000899"/><rect x="1184" fill="#000799"/><rect x="1192" fill="#000699"/><rect x="1200" fill="#020499"/><rect x="1208" fill="#060399"/><rect x="1216" fill="#0b0299"/><rect x="1224" fill="#0f0199"/><rect x="1232" fill="#140099"/><rect x="1240" fill="#180099"/><rect x="1248" fill="#1d0099"/><rect x="1256" fill="#210099"/><rect x="1264" fill="#260099"/><rect x="1272" fill="#2b0099"/><rect x="1280" fill="#2f0099"/><rect x="1288" fill="#340099"/><rect x="1296" fill="#380099"/><rect x="1304" fill="#3d0099"/><rect x="1312" fill="#420099"/><rect x="1320" fill="#470099"/><rect x="1328" fill="#4b0099"/><rect x="1336" fill="#500099"/><rect x="1344" fill="#550099"/><rect x="1352" fill="#5a0099"/><rect x="1360" fill="#5f0099"/><rect x="1368" fill="#640099"/><rect x="1376" fill="#680099"/><rect x="1384" fill="#6d0099"/><rect x="1392" fill="#720099"/><rect x="1400" fill="#770099"/><rect x="1408" fill="#7c0099"/><rect x="1416" fill="#810099"/><rect x="1424" fill="#870099"/><rect x="1432" fill="#8c0099"/><rect x="1440" fill="#910099"/><rect x="1448" fill="#960099"/><rect x="1456" fill="#990097"/></g><g transform="translate(0 460)"><rect x="1120" fill="#000f99"/><rect x="1128" fill="#000e99"/><rect x="1136" fill="#000d99"/><rect x="1144" fill="#000b99"/><rect x="1152" fill="#000a99"/><rect x="1160" fill="#000999"/><rect x="1168" fill="#000899"/><rect x="1176" fill="#000799"/><rect x="1184" fill="#000599"/><rect x="1192" fill="#000499"/><rect x="1200" fill="#010399"/><rect x="1208" fill="#060299"/><rect x="1216" fill="#0a0199"/><rect x="1224" fill="#0e0099"/><rect x="1232" fill="#130099"/><rect x="1240" fill="#170099"/><rect x="1248" fill="#1b0099"/><rect x="1256" fill="#200099"/><rect x="1264" fill="#240099"/><rect x="1272" fill="#290099"/><rect x="1280" fill="#2d0099"/><rect x="1288" fill="#320099"/><rect x="1296" fill="#360099"/><rect x="1304" fill="#3b0099"/><rect x="1312" fill="#3f0099"/><rect x="1320" fill="#440099"/><rect x="1328" fill="#490099"/><rect x="1336" fill="#4d0099"/><rect x="1344" fill="#520099"/><rect x="1352" fill="#570099"/><rect x="1360" fill="#5b0099"/><rect x="1368" fill="#600099"/><rect x="1376" fill="#650099"/><rect x="1384" fill="#6a0099"/><rect x="1392" fill="#6e0099"/><rect x="1400" fill="#730099"/><rect x="1408" fill="#780099"/><rect x="1416" fill="#7d0099"/><rect x="1424" fill="#820099"/><rect x="1432" fill="#870099"/><rect x="1440" fill="#8c0099"/><rect x="1448" fill="#910099"/></g><g transform="translate(0 468)"><rect x="1128" fill="#000c99"/><rect x="1136" fill="#000b99"/><rect x="1144" fill="#000a99"/><rect x="1152" fill="#000999"/><rect x="1160" fill="#000899"/><rect x="1168" fill="#000799"/><rect x="1176" fill="#000599"/><rect x="1184" fill="#000499"/><rect x="1192" fill="#000399"/><rect x="1200" fill="#010299"/><rect x="1208" fill="#050199"/><rect x="1216" fill="#090099"/><rect x="1224" fill="#0d0099"/><rect x="1232" fill="#110099"/><rect x="1240" fill="#160099"/><rect x="1248" fill="#1a0099"/><rect x="1256" fill="#1e0099"/><rect x="1264" fill="#230099"/><rect x="1272" fill="#270099"/><rect x="1280" fill="#2b0099"/><rect x="1288" fill="#300099"/><rect x="1296" fill="#340099"/><rect x="1304" fill="#390099"/><rect x="1312" fill="#3d0099"/><rect x="1320" fill="#410099"/><rect x="1328" fill="#460099"/><rect x="1336" fill="#4a0099"/><rect x="1344" fill="#4f0099"/><rect x="1352" fill="#540099"/><rect x="1360" fill="#580099"/><rect x="1368" fill="#5d0099"/><rect x="1376" fill="#610099"/><rect x="1384" fill="#660099"/><rect x="1392" fill="#6b0099"/><rect x="1400" fill="#6f0099"/><rect x="1408" fill="#740099"/><rect x="1416" fill="#790099"/><rect x="1424" fill="#7e0099"/><rect x="1432" fill="#830099"/><rect x="1440" fill="#870099"/></g><g transform="translate(0 476)"><rect x="1136" fill="#000a99"/><rect x="1144" fill="#000999"/><rect x="1152" fill="#000899"/><rect x="1160" fill="#000699"/><rect x="1168" fill="#000599"/><rect x="1176" fill="#000499"/><rect x="1184" fill="#000399"/><rect x="1192" fill="#000299"/><rect x="1200" fill="#000199"/><rect x="1208" fill="#040099"/><rect x="1216" fill="#080099"/><rect x="1224" fill="#0c0099"/><rect x="1232" fill="#100099"/><rect x="1240" fill="#140099"/><rect x="1248" fill="#190099"/><rect x="1256" fill="#1d0099"/><rect x="1264" fill="#210099"/><rect x="1272" fill="#250099"/><rect x="1280" fill="#2a0099"/><rect x="1288" fill="#2e0099"/><rect x="1296" fill="#320099"/><rect x="1304" fill="#360099"/><rect x="1312" fill="#3b0099"/><rect x="1320" fill="#3f0099"/><rect x="1328" fill="#430099"/><rect x="1336" fill="#480099"/><rect x="1344" fill="#4c0099"/><rect x="1352" fill="#510099"/><rect x="1360" fill="#550099"/><rect x="1368" fill="#5a0099"/><rect x="1376" fill="#5e0099"/><rect x="1384" fill="#630099"/><rect x="1392" fill="#670099"/><rect x="1400" fill="#6c0099"/><rect x="1408" fill="#700099"/><rect x="1416" fill="#750099"/><rect x="1424" fill="#7a0099"/><rect x="1432" fill="#7e0099"/></g><g transform="translate(0 484)"><rect x="1136" fill="#000899"/><rect x="1144" fill="#000799"/><rect x="1152" fill="#000699"/><rect x="1160" fill="#000599"/><rect x="1168" fill="#000499"/><rect x="1176" fill="#000399"/><rect x="1184" fill="#000299"/><rect x="1192" fill="#000199"/><rect x="1200" fill="#000099"/><rect x="1208" fill="#030099"/><rect x="1216" fill="#070099"/><rect x="1224" fill="#0b0099"/><rect x="1232" fill="#0f0099"/><rect x="1240" fill="#130099"/><rect x="1248" fill="#170099"/><rect x="1256" fill="#1b0099"/><rect x="1264" fill="#200099"/><rect x="1272" fill="#240099"/><rect x="1280" fill="#280099"/><rect x="1288" fill="#2c0099"/><rect x="1296" fill="#300099"/><rect x="1304" fill="#340099"/><rect x="1312" fill="#390099"/><rect x="1320" fill="#3d0099"/><rect x="1328" fill="#410099"/><rect x="1336" fill="#450099"/><rect x="1344" fill="#4a0099"/><rect x="1352" fill="#4e0099"/><rect x="1360" fill="#520099"/><rect x="1368" fill="#570099"/><rect x="1376" fill="#5b0099"/><rect x="1384" fill="#600099"/><rect x="1392" fill="#640099"/><rect x="1400" fill="#680099"/><rect x="1408" fill="#6d0099"/><rect x="1416" fill="#710099"/><rect x="1424" fill="#760099"/></g><g transform="translate(0 492)"><rect x="1144" fill="#000699"/><rect x="1152" fill="#000599"/><rect x="1160" fill="#000499"/><rect x="1168" fill="#000399"/><rect x="1176" fill="#000299"/><rect x="1184" fill="#000199"/><rect x="1192" fill="#000099"/><rect x="1200" fill="#000099"/><rect x="1208" fill="#030099"/><rect x="1216" fill="#060099"/><rect x="1224" fill="#0a0099"/><rect x="1232" fill="#0e0099"/><rect x="1240" fill="#120099"/><rect x="1248" fill="#160099"/><rect x="1256" fill="#1a0099"/><rect x="1264" fill="#1e0099"/><rect x="1272" fill="#220099"/><rect x="1280" fill="#260099"/><rect x="1288" fill="#2a0099"/><rect x="1296" fill="#2e0099"/><rect x="1304" fill="#320099"/><rect x="1312" fill="#370099"/><rect x="1320" fill="#3b0099"/><rect x="1328" fill="#3f0099"/><rect x="1336" fill="#430099"/><rect x="1344" fill="#470099"/><rect x="1352" fill="#4b0099"/><rect x="1360" fill="#500099"/><rect x="1368" fill="#540099"/><rect x="1376" fill="#580099"/><rect x="1384" fill="#5c0099"/><rect x="1392" fill="#610099"/><rect x="1400" fill="#650099"/><rect x="1408" fill="#690099"/><rect x="1416" fill="#6e0099"/></g><g transform="translate(0 500)"><rect x="1152" fill="#000499"/><rect x="1160" fill="#000399"/><rect x="1168" fill="#000299"/><rect x="1176" fill="#000199"/><rect x="1184" fill="#000099"/><rect x="1192" fill="#000099"/><rect x="1200" fill="#000099"/><rect x="1208" fill="#020099"/><rect x="1216" fill="#060099"/><rect x="1224" fill="#090099"/><rect x="1232" fill="#0d0099"/><rect x="1240" fill="#110099"/><rect x="1248" fill="#150099"/><rect x="1256" fill="#190099"/><rect x="1264" fill="#1d0099"/><rect x="1272" fill="#210099"/><rect x="1280" fill="#250099"/><rect x="1288" fill="#290099"/><rect x="1296" fill="#2d0099"/><rect x="1304" fill="#310099"/><rect x="1312" fill="#350099"/><rect x="1320" fill="#390099"/><rect x="1328" fill="#3d0099"/><rect x="1336" fill="#410099"/><rect x="1344" fill="#450099"/><rect x="1352" fill="#490099"/><rect x="1360" fill="#4d0099"/><rect x="1368" fill="#510099"/><rect x="1376" fill="#550099"/><rect x="1384" fill="#5a0099"/><rect x="1392" fill="#5e0099"/><rect x="1400" fill="#620099"/><rect x="1408" fill="#660099"/></g><g transform="translate(0 508)"><rect x="1160" fill="#000299"/><rect x="1168" fill="#000199"/><rect x="1176" fill="#000099"/><rect x="1184" fill="#000099"/><rect x="1192" fill="#000099"/><rect x="1200" fill="#000099"/><rect x="1208" fill="#010099"/><rect x="1216" fill="#050099"/><rect x="1224" fill="#090099"/><rect x="1232" fill="#0c0099"/><rect x="1240" fill="#100099"/><rect x="1248" fill="#140099"/><rect x="1256" fill="#180099"/><rect x="1264" fill="#1c0099"/><rect x="1272" fill="#1f0099"/><rect x="1280" fill="#230099"/><rect x="1288" fill="#270099"/><rect x="1296" fill="#2b0099"/><rect x="1304" fill="#2f0099"/><rect x="1312" fill="#330099"/><rect x="1320" fill="#370099"/><rect x="1328" fill="#3b0099"/><rect x="1336" fill="#3f0099"/><rect x="1344" fill="#430099"/><rect x="1352" fill="#470099"/><rect x="1360" fill="#4b0099"/><rect x="1368" fill="#4f0099"/><rect x="1376" fill="#530099"/><rect x="1384" fill="#570099"/><rect x="1392" fill="#5b0099"/><rect x="1400" fill="#5f0099"/></g><g transform="translate(0 516)"><rect x="1168" fill="#000099"/><rect x="1176" fill="#000099"/><rect x="1184" fill="#000099"/><rect x="1192" fill="#000099"/><rect x="1200" fill="#000099"/><rect x="1208" fill="#010099"/><rect x="1216" fill="#040099"/><rect x="1224" fill="#080099"/><rect x="1232" fill="#0c0099"/><rect x="1240" fill="#0f0099"/><rect x="1248" fill="#130099"/><rect x="1256" fill="#170099"/><rect x="1264" fill="#1a0099"/><rect x="1272" fill="#1e0099"/><rect x="1280" fill="#220099"/><rect x="1288" fill="#260099"/><rect x="1296" fill="#290099"/><rect x="1304" fill="#2d0099"/><rect x="1312" fill="#310099"/><rect x="1320" fill="#350099"/><rect x="1328" fill="#390099"/><rect x="1336" fill="#3d0099"/><rect x="1344" fill="#410099"/><rect x="1352" fill="#440099"/><rect x="1360" fill="#480099"/><rect x="1368" fill="#4c0099"/><rect x="1376" fill="#500099"/><rect x="1384" fill="#540099"/><rect x="1392" fill="#580099"/></g><g transform="translate(0 524)"><rect x="1168" fill="#000099"/><rect x="1176" fill="#000099"/><rect x="1184" fill="#000099"/><rect x="1192" fill="#000099"/><rect x="1200" fill="#000099"/><rect x="1208" fill="#000099"/><rect x="1216" fill="#040099"/><rect x="1224" fill="#070099"/><rect x="1232" fill="#0b0099"/><rect x="1240" fill="#0e0099"/><rect x="1248" fill="#120099"/><rect x="1256" fill="#160099"/><rect x="1264" fill="#190099"/><rect x="1272" fill="#1d0099"/><rect x="1280" fill="#210099"/><rect x="1288" fill="#240099"/><rect x="1296" fill="#280099"/><rect x="1304" fill="#2c0099"/><rect x="1312" fill="#2f0099"/><rect x="1320" fill="#330099"/><rect x="1328" fill="#370099"/><rect x="1336" fill="#3b0099"/><rect x="1344" fill="#3e0099"/><rect x="1352" fill="#420099"/><rect x="1360" fill="#460099"/><rect x="1368" fill="#4a0099"/><rect x="1376" fill="#4e0099"/><rect x="1384" fill="#520099"/></g><g transform="translate(0 532)"><rect x="1176" fill="#000099"/><rect x="1184" fill="#000099"/><rect x="1192" fill="#000099"/><rect x="1200" fill="#000099"/><rect x="1208" fill="#000099"/><rect x="1216" fill="#030099"/><rect x="1224" fill="#060099"/><rect x="1232" fill="#0a0099"/><rect x="1240" fill="#0d0099"/><rect x="1248" fill="#110099"/><rect x="1256" fill="#150099"/><rect x="1264" fill="#180099"/><rect x="1272" fill="#1c0099"/><rect x="1280" fill="#1f0099"/><rect x="1288" fill="#230099"/><rect x="1296" fill="#260099"/><rect x="1304" fill="#2a0099"/><rect x="1312" fill="#2e0099"/><rect x="1320" fill="#310099"/><rect x="1328" fill="#350099"/><rect x="1336" fill="#390099"/><rect x="1344" fill="#3d0099"/><rect x="1352" fill="#400099"/><rect x="1360" fill="#440099"/><rect x="1368" fill="#480099"/><rect x="1376" fill="#4c0099"/></g><g transform="translate(0 540)"><rect x="1184" fill="#000099"/><rect x="1192" fill="#000099"/><rect x="1200" fill="#000099"/><rect x="1208" fill="#000099"/><rect x="1216" fill="#020099"/><rect x="1224" fill="#060099"/><rect x="1232" fill="#090099"/><rect x="1240" fill="#0d0099"/><rect x="1248" fill="#100099"/><rect x="1256" fill="#140099"/><rect x="1264" fill="#170099"/><rect x="1272" fill="#1b0099"/><rect x="1280" fill="#1e0099"/><rect x="1288" fill="#220099"/><rect x="1296" fill="#250099"/><rect x="1304" fill="#290099"/><rect x="1312" fill="#2c0099"/><rect x="1320" fill="#300099"/><rect x="1328" fill="#330099"/><rect x="1336" fill="#370099"/><rect x="1344" fill="#3b0099"/><rect x="1352" fill="#3e0099"/><rect x="1360" fill="#420099"/><rect x="1368" fill="#460099"/></g><g transform="translate(0 548)"><rect x="1192" fill="#000099"/><rect x="1200" fill="#000099"/><rect x="1208" fill="#000099"/><rect x="1216" fill="#020099"/><rect x="1224" fill="#050099"/><rect x="1232" fill="#080099"/><rect x="1240" fill="#0c0099"/><rect x="1248" fill="#0f0099"/><rect x="1256" fill="#130099"/><rect x="1264" fill="#160099"/><rect x="1272" fill="#190099"/><rect x="1280" fill="#1d0099"/><rect x="1288" fill="#200099"/><rect x="1296" fill="#240099"/><rect x="1304" fill="#270099"/><rect x="1312" fill="#2b0099"/><rect x="1320" fill="#2e0099"/><rect x="1328" fill="#320099"/><rect x="1336" fill="#350099"/><rect x="1344" fill="#390099"/><rect x="1352" fill="#3c0099"/><rect x="1360" fill="#400099"/></g><g transform="translate(0 556)"><rect x="1200" fill="#000099"/><rect x="1208" fill="#000099"/><rect x="1216" fill="#010099"/><rect x="1224" fill="#040099"/><rect x="1232" fill="#080099"/><rect x="1240" fill="#0b0099"/><rect x="1248" fill="#0e0099"/><rect x="1256" fill="#120099"/><rect x="1264" fill="#150099"/><rect x="1272" fill="#180099"/><rect x="1280" fill="#1c0099"/><rect x="1288" fill="#1f0099"/><rect x="1296" fill="#230099"/><rect x="1304" fill="#260099"/><rect x="1312" fill="#290099"/><rect x="1320" fill="#2d0099"/><rect x="1328" fill="#300099"/><rect x="1336" fill="#340099"/><rect x="1344" fill="#370099"/><rect x="1352" fill="#3b0099"/><rect x="1360" fill="#3e0099"/></g><g transform="translate(0 564)"><rect x="1208" fill="#000099"/><rect x="1216" fill="#010099"/><rect x="1224" fill="#040099"/><rect x="1232" fill="#070099"/><rect x="1240" fill="#0a0099"/><rect x="1248" fill="#0e0099"/><rect x="1256" fill="#110099"/><rect x="1264" fill="#140099"/><rect x="1272" fill="#170099"/><rect x="1280" fill="#1b0099"/><rect x="1288" fill="#1e0099"/><rect x="1296" fill="#210099"/><rect x="1304" fill="#250099"/><rect x="1312" fill="#280099"/><rect x="1320" fill="#2b0099"/><rect x="1328" fill="#2f0099"/><rect x="1336" fill="#320099"/><rect x="1344" fill="#360099"/><rect x="1352" fill="#390099"/></g><g transform="translate(0 572)"><rect x="1216" fill="#000099"/><rect x="1224" fill="#030099"/><rect x="1232" fill="#060099"/><rect x="1240" fill="#0a0099"/><rect x="1248" fill="#0d0099"/><rect x="1256" fill="#100099"/><rect x="1264" fill="#130099"/><rect x="1272" fill="#160099"/><rect x="1280" fill="#1a0099"/><rect x="1288" fill="#1d0099"/><rect x="1296" fill="#200099"/><rect x="1304" fill="#230099"/><rect x="1312" fill="#270099"/><rect x="1320" fill="#2a0099"/><rect x="1328" fill="#2d0099"/><rect x="1336" fill="#310099"/><rect x="1344" fill="#340099"/></g><g transform="translate(0 580)"><rect x="1232" fill="#060099"/><rect x="1240" fill="#090099"/><rect x="1248" fill="#0c0099"/><rect x="1256" fill="#0f0099"/><rect x="1264" fill="#120099"/><rect x="1272" fill="#150099"/><rect x="1280" fill="#190099"/><rect x="1288" fill="#1c0099"/><rect x="1296" fill="#1f0099"/><rect x="1304" fill="#220099"/><rect x="1312" fill="#250099"/><rect x="1320" fill="#290099"/><rect x="1328" fill="#2c0099"/><rect x="1336" fill="#2f0099"/></g><g transform="translate(0 588)"><rect x="1240" fill="#080099"/><rect x="1248" fill="#0b0099"/><rect x="1256" fill="#0e0099"/><rect x="1264" fill="#110099"/><rect x="1272" fill="#150099"/><rect x="1280" fill="#180099"/><rect x="1288" fill="#1b0099"/><rect x="1296" fill="#1e0099"/><rect x="1304" fill="#210099"/><rect x="1312" fill="#240099"/><rect x="1320" fill="#270099"/><rect x="1328" fill="#2b0099"/></g><g transform="translate(0 596)"><rect x="1248" fill="#0b0099"/><rect x="1256" fill="#0e0099"/><rect x="1264" fill="#110099"/><rect x="1272" fill="#140099"/><rect x="1280" fill="#170099"/><rect x="1288" fill="#1a0099"/><rect x="1296" fill="#1d0099"/><rect x="1304" fill="#200099"/><rect x="1312" fill="#230099"/><rect x="1320" fill="#260099"/></g><g transform="translate(0 604)"><rect x="1256" fill="#0d0099"/><rect x="1264" fill="#100099"/><rect x="1272" fill="#130099"/><rect x="1280" fill="#160099"/><rect x="1288" fill="#190099"/><rect x="1296" fill="#1c0099"/><rect x="1304" fill="#1f0099"/><rect x="1312" fill="#220099"/></g><g transform="translate(0 612)"><rect x="1264" fill="#0f0099"/><rect x="1272" fill="#120099"/><rect x="1280" fill="#150099"/><rect x="1288" fill="#180099"/><rect x="1296" fill="#1b0099"/><rect x="1304" fill="#1e0099"/></g><g transform="translate(0 620)"><rect x="1280" fill="#130099"/><rect x="1288" fill="#160099"/></g></g></g></g></g><g clip-path="url(#tri76)"><g filter="url(#bl4)"><g class="c5"><g transform="translate(0 137)"><rect x="1137" fill="#00ff00"/><rect x="1142" fill="#00ff00"/><rect x="1147" fill="#01ff00"/><rect x="1152" fill="#0cff00"/><rect x="1157" fill="#18ff00"/><rect x="1162" fill="#24ff00"/><rect x="1167" fill="#31ff00"/><rect x="1172" fill="#3dff00"/><rect x="1177" fill="#4aff00"/><rect x="1182" fill="#58ff00"/><rect x="1187" fill="#65ff00"/><rect x="1192" fill="#74ff00"/><rect x="1197" fill="#82ff00"/><rect x="1202" fill="#91ff00"/><rect x="1207" fill="#a1ff00"/><rect x="1212" fill="#b1ff00"/><rect x="1217" fill="#c1ff00"/><rect x="1222" fill="#d2ff00"/><rect x="1227" fill="#e4ff00"/></g><g transform="translate(0 142)"><rect x="1137" fill="#00ff00"/><rect x="1142" fill="#00ff00"/><rect x="1147" fill="#00ff00"/><rect x="1152" fill="#0bff00"/><rect x="1157" fill="#17ff00"/><rect x="1162" fill="#23ff00"/><rect x="1167" fill="#2fff00"/><rect x="1172" fill="#3cff00"/><rect x="1177" fill="#49ff00"/><rect x="1182" fill="#57ff00"/><rect x="1187" fill="#65ff00"/><rect x="1192" fill="#73ff00"/><rect x="1197" fill="#82ff00"/><rect x="1202" fill="#91ff00"/><rect x="1207" fill="#a1ff00"/><rect x="1212" fill="#b1ff00"/><rect x="1217" fill="#c2ff00"/><rect x="1222" fill="#d3ff00"/><rect x="1227" fill="#e5ff00"/><rect x="1232" fill="#f7ff00"/><rect x="1237" fill="#fff400"/><rect x="1242" fill="#ffe300"/><rect x="1247" fill="#ffd400"/><rect x="1252" fill="#ffc700"/><rect x="1257" fill="#ffba00"/><rect x="1262" fill="#ffaf00"/><rect x="1267" fill="#ffa400"/><rect x="1272" fill="#ff9b00"/><rect x="1277" fill="#ff9200"/><rect x="1282" fill="#ff8a00"/></g><g transform="translate(0 147)"><rect x="1137" fill="#00ff00"/><rect x="1142" fill="#00ff00"/><rect x="1147" fill="#00ff00"/><rect x="1152" fill="#09ff00"/><rect x="1157" fill="#15ff00"/><rect x="1162" fill="#21ff00"/><rect x="1167" fill="#2eff00"/><rect x="1172" fill="#3bff00"/><rect x="1177" fill="#48ff00"/><rect x="1182" fill="#56ff00"/><rect x="1187" fill="#64ff00"/><rect x="1192" fill="#73ff00"/><rect x="1197" fill="#82ff00"/><rect x="1202" fill="#91ff00"/><rect x="1207" fill="#a1ff00"/><rect x="1212" fill="#b2ff00"/><rect x="1217" fill="#c3ff00"/><rect x="1222" fill="#d4ff00"/><rect x="1227" fill="#e6ff00"/><rect x="1232" fill="#f9ff00"/><rect x="1237" fill="#fff200"/><rect x="1242" fill="#ffe100"/><rect x="1247" fill="#ffd200"/><rect x="1252" fill="#ffc500"/><rect x="1257" fill="#ffb800"/><rect x="1262" fill="#ffad00"/><rect x="1267" fill="#ffa300"/><rect x="1272" fill="#ff9900"/><rect x="1277" fill="#ff9000"/><rect x="1282" fill="#ff8800"/><rect x="1287" fill="#ff8100"/><rect x="1292" fill="#ff7a00"/><rect x="1297" fill="#ff7300"/><rect x="1302" fill="#ff6d00"/><rect x="1307" fill="#ff6700"/><rect x="1312" fill="#ff6200"/><rect x="1317" fill="#ff5d00"/><rect x="1322" fill="#ff5800"/><rect x="1327" fill="#ff5300"/><rect x="1332" fill="#ff4f00"/></g><g transform="translate(0 152)"><rect x="1137" fill="#00ff08"/><rect x="1142" fill="#00ff07"/><rect x="1147" fill="#00ff06"/><rect x="1152" fill="#07ff05"/><rect x="1157" fill="#13ff04"/><rect x="1162" fill="#20ff03"/><rect x="1167" fill="#2dff02"/><rect x="1172" fill="#3aff01"/><rect x="1177" fill="#47ff00"/><rect x="1182" fill="#55ff00"/><rect x="1187" fill="#64ff00"/><rect x="1192" fill="#72ff00"/><rect x="1197" fill="#82ff00"/><rect x="1202" fill="#91ff00"/><rect x="1207" fill="#a1ff00"/><rect x="1212" fill="#b2ff00"/><rect x="1217" fill="#c3ff00"/><rect x="1222" fill="#d5ff00"/><rect x="1227" fill="#e8ff00"/><rect x="1232" fill="#fbff00"/><rect x="1237" fill="#fff000"/><rect x="1242" fill="#ffe000"/><rect x="1247" fill="#ffd000"/><rect x="1252" fill="#ffc300"/><rect x="1257" fill="#ffb600"/><rect x="1262" fill="#ffab00"/><rect x="1267" fill="#ffa100"/><rect x="1272" fill="#ff9700"/><rect x="1277" fill="#ff8e00"/><rect x="1282" fill="#ff8600"/><rect x="1287" fill="#ff7f00"/><rect x="1292" fill="#ff7800"/><rect x="1297" fill="#ff7100"/><rect x="1302" fill="#ff6b00"/><rect x="1307" fill="#ff6500"/><rect x="1312" fill="#ff6000"/><rect x="1317" fill="#ff5b00"/><rect x="1322" fill="#ff5600"/><rect x="1327" fill="#ff5200"/><rect x="1332" fill="#ff4d00"/><rect x="1337" fill="#ff4900"/><rect x="1342" fill="#ff4600"/><rect x="1347" fill="#ff4200"/><rect x="1352" fill="#ff3f00"/><rect x="1357" fill="#ff3b00"/><rect x="1362" fill="#ff3800"/><rect x="1367" fill="#ff3500"/><rect x="1372" fill="#ff3200"/><rect x="1377" fill="#ff3000"/><rect x="1382" fill="#ff2d00"/><rect x="1387" fill="#ff2b00"/></g><g transform="translate(0 157)"><rect x="1137" fill="#00ff12"/><rect x="1142" fill="#00ff12"/><rect x="1147" fill="#00ff11"/><rect x="1152" fill="#05ff10"/><rect x="1157" fill="#12ff0f"/><rect x="1162" fill="#1eff0e"/><rect x="1167" fill="#2bff0e"/><rect x="1172" fill="#38ff0d"/><rect x="1177" fill="#46ff0c"/><rect x="1182" fill="#54ff0b"/><rect x="1187" fill="#63ff0a"/><rect x="1192" fill="#72ff09"/><rect x="1197" fill="#81ff08"/><rect x="1202" fill="#91ff07"/><rect x="1207" fill="#a2ff05"/><rect x="1212" fill="#b3ff04"/><rect x="1217" fill="#c4ff03"/><rect x="1222" fill="#d6ff02"/><rect x="1227" fill="#e9ff01"/><rect x="1232" fill="#fdff00"/><rect x="1237" fill="#ffef00"/><rect x="1242" fill="#ffde00"/><rect x="1247" fill="#ffce00"/><rect x="1252" fill="#ffc100"/><rect x="1257" fill="#ffb400"/><rect x="1262" fill="#ffa900"/><rect x="1267" fill="#ff9f00"/><rect x="1272" fill="#ff9500"/><rect x="1277" fill="#ff8c00"/><rect x="1282" fill="#ff8400"/><rect x="1287" fill="#ff7d00"/><rect x="1292" fill="#ff7600"/><rect x="1297" fill="#ff6f00"/><rect x="1302" fill="#ff6900"/><rect x="1307" fill="#ff6400"/><rect x="1312" fill="#ff5e00"/><rect x="1317" fill="#ff5900"/><rect x="1322" fill="#ff5500"/><rect x="1327" fill="#ff5000"/><rect x="1332" fill="#ff4c00"/><rect x="1337" fill="#ff4800"/><rect x="1342" fill="#ff4400"/><rect x="1347" fill="#ff4000"/><rect x="1352" fill="#ff3d00"/><rect x="1357" fill="#ff3a00"/><rect x="1362" fill="#ff3700"/><rect x="1367" fill="#ff3400"/><rect x="1372" fill="#ff3100"/><rect x="1377" fill="#ff2e00"/><rect x="1382" fill="#ff2c00"/><rect x="1387" fill="#ff2900"/><rect x="1392" fill="#ff2700"/><rect x="1397" fill="#ff2500"/><rect x="1402" fill="#ff2200"/><rect x="1407" fill="#ff2000"/><rect x="1412" fill="#ff1e00"/><rect x="1417" fill="#ff1c00"/><rect x="1422" fill="#ff1a00"/><rect x="1427" fill="#ff1900"/><rect x="1432" fill="#ff1700"/><rect x="1437" fill="#ff1500"/><rect x="1442" fill="#ff1400"/></g><g transform="translate(0 162)"><rect x="1137" fill="#00ff1e"/><rect x="1142" fill="#00ff1d"/><rect x="1147" fill="#00ff1c"/><rect x="1152" fill="#03ff1c"/><rect x="1157" fill="#10ff1b"/><rect x="1162" fill="#1dff1a"/><rect x="1167" fill="#2aff1a"/><rect x="1172" fill="#37ff19"/><rect x="1177" fill="#45ff18"/><rect x="1182" fill="#53ff17"/><rect x="1187" fill="#62ff16"/><rect x="1192" fill="#71ff16"/><rect x="1197" fill="#81ff15"/><rect x="1202" fill="#91ff14"/><rect x="1207" fill="#a2ff13"/><rect x="1212" fill="#b3ff12"/><rect x="1217" fill="#c5ff11"/><rect x="1222" fill="#d7ff10"/><rect x="1227" fill="#ebff0f"/><rect x="1232" fill="#feff0e"/><rect x="1237" fill="#ffed0c"/><rect x="1242" fill="#ffdc0a"/><rect x="1247" fill="#ffcc08"/><rect x="1252" fill="#ffbf07"/><rect x="1257" fill="#ffb205"/><rect x="1262" fill="#ffa704"/><rect x="1267" fill="#ff9d03"/><rect x="1272" fill="#ff9302"/><rect x="1277" fill="#ff8a01"/><rect x="1282" fill="#ff8200"/><rect x="1287" fill="#ff7b00"/><rect x="1292" fill="#ff7400"/><rect x="1297" fill="#ff6d00"/><rect x="1302" fill="#ff6700"/><rect x="1307" fill="#ff6200"/><rect x="1312" fill="#ff5c00"/><rect x="1317" fill="#ff5700"/><rect x="1322" fill="#ff5300"/><rect x="1327" fill="#ff4e00"/><rect x="1332" fill="#ff4a00"/><rect x="1337" fill="#ff4600"/><rect x="1342" fill="#ff4200"/><rect x="1347" fill="#ff3f00"/><rect x="1352" fill="#ff3c00"/><rect x="1357" fill="#ff3800"/><rect x="1362" fill="#ff3500"/><rect x="1367" fill="#ff3200"/><rect x="1372" fill="#ff2f00"/><rect x="1377" fill="#ff2d00"/><rect x="1382" fill="#ff2a00"/><rect x="1387" fill="#ff2800"/><rect x="1392" fill="#ff2500"/><rect x="1397" fill="#ff2300"/><rect x="1402" fill="#ff2100"/><rect x="1407" fill="#ff1f00"/><rect x="1412" fill="#ff1d00"/><rect x="1417" fill="#ff1b00"/><rect x="1422" fill="#ff1900"/><rect x="1427" fill="#ff1700"/><rect x="1432" fill="#ff1600"/><rect x="1437" fill="#ff1400"/><rect x="1442" fill="#ff1200"/><rect x="1447" fill="#ff1100"/><rect x="1452" fill="#ff0f00"/><rect x="1457" fill="#ff0e00"/><rect x="1462" fill="#ff0d00"/><rect x="1467" fill="#ff0b00"/><rect x="1472" fill="#ff0a00"/><rect x="1477" fill="#ff0900"/><rect x="1482" fill="#ff0700"/><rect x="1487" fill="#ff0600"/><rect x="1492" fill="#ff0500"/><rect x="1497" fill="#ff0400"/></g><g transform="translate(0 167)"><rect x="1137" fill="#00ff29"/><rect x="1142" fill="#00ff29"/><rect x="1147" fill="#00ff28"/><rect x="1152" fill="#01ff28"/><rect x="1157" fill="#0eff27"/><rect x="1162" fill="#1bff26"/><rect x="1167" fill="#28ff26"/><rect x="1172" fill="#36ff25"/><rect x="1177" fill="#44ff25"/><rect x="1182" fill="#52ff24"/><rect x="1187" fill="#61ff23"/><rect x="1192" fill="#71ff23"/><rect x="1197" fill="#81ff22"/><rect x="1202" fill="#91ff21"/><rect x="1207" fill="#a2ff21"/><rect x="1212" fill="#b4ff20"/><rect x="1217" fill="#c6ff1f"/><rect x="1222" fill="#d9ff1e"/><rect x="1227" fill="#ecff1e"/><rect x="1232" fill="#fffe1d"/><rect x="1237" fill="#ffeb1a"/><rect x="1242" fill="#ffda17"/><rect x="1247" fill="#ffca15"/><rect x="1252" fill="#ffbd13"/><rect x="1257" fill="#ffb011"/><rect x="1262" fill="#ffa50f"/><rect x="1267" fill="#ff9b0d"/><rect x="1272" fill="#ff910c"/><rect x="1277" fill="#ff880a"/><rect x="1282" fill="#ff8009"/><rect x="1287" fill="#ff7908"/><rect x="1292" fill="#ff7207"/><rect x="1297" fill="#ff6c06"/><rect x="1302" fill="#ff6605"/><rect x="1307" fill="#ff6004"/><rect x="1312" fill="#ff5b03"/><rect x="1317" fill="#ff5603"/><rect x="1322" fill="#ff5102"/><rect x="1327" fill="#ff4d01"/><rect x="1332" fill="#ff4900"/><rect x="1337" fill="#ff4500"/><rect x="1342" fill="#ff4100"/><rect x="1347" fill="#ff3d00"/><rect x="1352" fill="#ff3a00"/><rect x="1357" fill="#ff3700"/><rect x="1362" fill="#ff3400"/><rect x="1367" fill="#ff3100"/><rect x="1372" fill="#ff2e00"/><rect x="1377" fill="#ff2b00"/><rect x="1382" fill="#ff2900"/><rect x="1387" fill="#ff2600"/><rect x="1392" fill="#ff2400"/><rect x="1397" fill="#ff2200"/><rect x="1402" fill="#ff2000"/><rect x="1407" fill="#ff1e00"/><rect x="1412" fill="#ff1c00"/><rect x="1417" fill="#ff1a00"/><rect x="1422" fill="#ff1800"/><rect x="1427" fill="#ff1600"/><rect x="1432" fill="#ff1400"/><rect x="1437" fill="#ff1300"/><rect x="1442" fill="#ff1100"/><rect x="1447" fill="#ff1000"/><rect x="1452" fill="#ff0e00"/><rect x="1457" fill="#ff0d00"/><rect x="1462" fill="#ff0b00"/><rect x="1467" fill="#ff0a00"/><rect x="1472" fill="#ff0900"/><rect x="1477" fill="#ff0700"/><rect x="1482" fill="#ff0600"/><rect x="1487" fill="#ff0500"/><rect x="1492" fill="#ff0400"/><rect x="1497" fill="#ff0300"/><rect x="1502" fill="#ff0200"/><rect x="1507" fill="#ff0100"/></g><g transform="translate(0 172)"><rect x="1137" fill="#00ff35"/><rect x="1142" fill="#00ff34"/><rect x="1147" fill="#00ff34"/><rect x="1152" fill="#00ff34"/><rect x="1157" fill="#0cff33"/><rect x="1162" fill="#19ff33"/><rect x="1167" fill="#27ff33"/><rect x="1172" fill="#35ff32"/><rect x="1177" fill="#43ff32"/><rect x="1182" fill="#51ff31"/><rect x="1187" fill="#61ff31"/><rect x="1192" fill="#70ff31"/><rect x="1197" fill="#80ff30"/><rect x="1202" fill="#91ff30"/><rect x="1207" fill="#a2ff2f"/><rect x="1212" fill="#b4ff2f"/><rect x="1217" fill="#c7ff2e"/><rect x="1222" fill="#daff2e"/><rect x="1227" fill="#eeff2d"/><rect x="1232" fill="#fffc2c"/><rect x="1237" fill="#ffe928"/><rect x="1242" fill="#ffd824"/><rect x="1247" fill="#ffc821"/><rect x="1252" fill="#ffbb1f"/><rect x="1257" fill="#ffae1c"/><rect x="1262" fill="#ffa31a"/><rect x="1267" fill="#ff9918"/><rect x="1272" fill="#ff8f16"/><rect x="1277" fill="#ff8614"/><rect x="1282" fill="#ff7e12"/><rect x="1287" fill="#ff7711"/><rect x="1292" fill="#ff700f"/><rect x="1297" fill="#ff6a0e"/><rect x="1302" fill="#ff640d"/><rect x="1307" fill="#ff5e0c"/><rect x="1312" fill="#ff590b"/><rect x="1317" fill="#ff540a"/><rect x="1322" fill="#ff4f09"/><rect x="1327" fill="#ff4b08"/><rect x="1332" fill="#ff4707"/><rect x="1337" fill="#ff4306"/><rect x="1342" fill="#ff3f06"/><rect x="1347" fill="#ff3c05"/><rect x="1352" fill="#ff3804"/><rect x="1357" fill="#ff3504"/><rect x="1362" fill="#ff3203"/><rect x="1367" fill="#ff2f02"/><rect x="1372" fill="#ff2d02"/><rect x="1377" fill="#ff2a01"/><rect x="1382" fill="#ff2701"/><rect x="1387" fill="#ff2500"/><rect x="1392" fill="#ff2300"/><rect x="1397" fill="#ff2000"/><rect x="1402" fill="#ff1e00"/><rect x="1407" fill="#ff1c00"/><rect x="1412" fill="#ff1a00"/><rect x="1417" fill="#ff1800"/><rect x="1422" fill="#ff1700"/><rect x="1427" fill="#ff1500"/><rect x="1432" fill="#ff1300"/><rect x="1437" fill="#ff1200"/><rect x="1442" fill="#ff1000"/><rect x="1447" fill="#ff0f00"/><rect x="1452" fill="#ff0d00"/><rect x="1457" fill="#ff0c00"/><rect x="1462" fill="#ff0a00"/><rect x="1467" fill="#ff0900"/><rect x="1472" fill="#ff0800"/><rect x="1477" fill="#ff0600"/><rect x="1482" fill="#ff0500"/><rect x="1487" fill="#ff0400"/><rect x="1492" fill="#ff0300"/><rect x="1497" fill="#ff0200"/><rect x="1502" fill="#ff0100"/><rect x="1507" fill="#ff0000"/></g><g transform="translate(0 177)"><rect x="1137" fill="#00ff41"/><rect x="1142" fill="#00ff41"/><rect x="1147" fill="#00ff40"/><rect x="1152" fill="#00ff40"/><rect x="1157" fill="#0aff40"/><rect x="1162" fill="#17ff40"/><rect x="1167" fill="#25ff40"/><rect x="1172" fill="#33ff40"/><rect x="1177" fill="#42ff3f"/><rect x="1182" fill="#50ff3f"/><rect x="1187" fill="#60ff3f"/><rect x="1192" fill="#70ff3f"/><rect x="1197" fill="#80ff3e"/><rect x="1202" fill="#91ff3e"/><rect x="1207" fill="#a3ff3e"/><rect x="1212" fill="#b5ff3e"/><rect x="1217" fill="#c8ff3d"/><rect x="1222" fill="#dbff3d"/><rect x="1227" fill="#efff3d"/><rect x="1232" fill="#fffa3b"/><rect x="1237" fill="#ffe736"/><rect x="1242" fill="#ffd532"/><rect x="1247" fill="#ffc62e"/><rect x="1252" fill="#ffb82b"/><rect x="1257" fill="#ffac28"/><rect x="1262" fill="#ffa125"/><rect x="1267" fill="#ff9722"/><rect x="1272" fill="#ff8d20"/><rect x="1277" fill="#ff841e"/><rect x="1282" fill="#ff7c1c"/><rect x="1287" fill="#ff751a"/><rect x="1292" fill="#ff6e18"/><rect x="1297" fill="#ff6816"/><rect x="1302" fill="#ff6215"/><rect x="1307" fill="#ff5c14"/><rect x="1312" fill="#ff5712"/><rect x="1317" fill="#ff5211"/><rect x="1322" fill="#ff4e10"/><rect x="1327" fill="#ff490f"/><rect x="1332" fill="#ff450e"/><rect x="1337" fill="#ff410d"/><rect x="1342" fill="#ff3e0c"/><rect x="1347" fill="#ff3a0b"/><rect x="1352" fill="#ff370a"/><rect x="1357" fill="#ff3409"/><rect x="1362" fill="#ff3109"/><rect x="1367" fill="#ff2e08"/><rect x="1372" fill="#ff2b07"/><rect x="1377" fill="#ff2807"/><rect x="1382" fill="#ff2606"/><rect x="1387" fill="#ff2405"/><rect x="1392" fill="#ff2105"/><rect x="1397" fill="#ff1f04"/><rect x="1402" fill="#ff1d04"/><rect x="1407" fill="#ff1b03"/><rect x="1412" fill="#ff1903"/><rect x="1417" fill="#ff1702"/><rect x="1422" fill="#ff1502"/><rect x="1427" fill="#ff1401"/><rect x="1432" fill="#ff1201"/><rect x="1437" fill="#ff1000"/><rect x="1442" fill="#ff0f00"/><rect x="1447" fill="#ff0d00"/><rect x="1452" fill="#ff0c00"/><rect x="1457" fill="#ff0a00"/><rect x="1462" fill="#ff0900"/><rect x="1467" fill="#ff0800"/><rect x="1472" fill="#ff0700"/><rect x="1477" fill="#ff0500"/><rect x="1482" fill="#ff0400"/><rect x="1487" fill="#ff0300"/><rect x="1492" fill="#ff0200"/><rect x="1497" fill="#ff0100"/><rect x="1502" fill="#ff0000"/><rect x="1507" fill="#ff0000"/></g><g transform="translate(0 182)"><rect x="1137" fill="#00ff4d"/><rect x="1142" fill="#00ff4d"/><rect x="1147" fill="#00ff4d"/><rect x="1152" fill="#00ff4d"/><rect x="1157" fill="#08ff4d"/><rect x="1162" fill="#16ff4d"/><rect x="1167" fill="#23ff4d"/><rect x="1172" fill="#32ff4d"/><rect x="1177" fill="#40ff4d"/><rect x="1182" fill="#4fff4d"/><rect x="1187" fill="#5fff4d"/><rect x="1192" fill="#6fff4d"/><rect x="1197" fill="#80ff4d"/><rect x="1202" fill="#91ff4d"/><rect x="1207" fill="#a3ff4d"/><rect x="1212" fill="#b5ff4d"/><rect x="1217" fill="#c9ff4d"/><rect x="1222" fill="#dcff4d"/><rect x="1227" fill="#f1ff4d"/><rect x="1232" fill="#fff84b"/><rect x="1237" fill="#ffe445"/><rect x="1242" fill="#ffd340"/><rect x="1247" fill="#ffc43b"/><rect x="1252" fill="#ffb637"/><rect x="1257" fill="#ffaa34"/><rect x="1262" fill="#ff9f30"/><rect x="1267" fill="#ff942d"/><rect x="1272" fill="#ff8b2a"/><rect x="1277" fill="#ff8228"/><rect x="1282" fill="#ff7a25"/><rect x="1287" fill="#ff7323"/><rect x="1292" fill="#ff6c21"/><rect x="1297" fill="#ff661f"/><rect x="1302" fill="#ff601d"/><rect x="1307" fill="#ff5a1b"/><rect x="1312" fill="#ff551a"/><rect x="1317" fill="#ff5018"/><rect x="1322" fill="#ff4c17"/><rect x="1327" fill="#ff4716"/><rect x="1332" fill="#ff4314"/><rect x="1337" fill="#ff4013"/><rect x="1342" fill="#ff3c12"/><rect x="1347" fill="#ff3811"/><rect x="1352" fill="#ff3510"/><rect x="1357" fill="#ff320f"/><rect x="1362" fill="#ff2f0e"/><rect x="1367" fill="#ff2c0d"/><rect x="1372" fill="#ff2a0d"/><rect x="1377" fill="#ff270c"/><rect x="1382" fill="#ff250b"/><rect x="1387" fill="#ff220a"/><rect x="1392" fill="#ff200a"/><rect x="1397" fill="#ff1e09"/><rect x="1402" fill="#ff1c08"/><rect x="1407" fill="#ff1a08"/><rect x="1412" fill="#ff1807"/><rect x="1417" fill="#ff1607"/><rect x="1422" fill="#ff1406"/><rect x="1427" fill="#ff1206"/><rect x="1432" fill="#ff1105"/><rect x="1437" fill="#ff0f05"/><rect x="1442" fill="#ff0e04"/><rect x="1447" fill="#ff0c04"/><rect x="1452" fill="#ff0b03"/><rect x="1457" fill="#ff0903"/><rect x="1462" fill="#ff0802"/><rect x="1467" fill="#ff0702"/><rect x="1472" fill="#ff0502"/><rect x="1477" fill="#ff0401"/><rect x="1482" fill="#ff0301"/><rect x="1487" fill="#ff0201"/><rect x="1492" fill="#ff0100"/><rect x="1497" fill="#ff0000"/><rect x="1502" fill="#ff0000"/><rect x="1507" fill="#ff0000"/></g><g transform="translate(0 187)"><rect x="1137" fill="#00ff5a"/><rect x="1142" fill="#00ff5a"/><rect x="1147" fill="#00ff5a"/><rect x="1152" fill="#00ff5a"/><rect x="1157" fill="#06ff5b"/><rect x="1162" fill="#14ff5b"/><rect x="1167" fill="#22ff5b"/><rect x="1172" fill="#30ff5b"/><rect x="1177" fill="#3fff5c"/><rect x="1182" fill="#4eff5c"/><rect x="1187" fill="#5eff5c"/><rect x="1192" fill="#6fff5c"/><rect x="1197" fill="#80ff5d"/><rect x="1202" fill="#91ff5d"/><rect x="1207" fill="#a3ff5d"/><rect x="1212" fill="#b6ff5d"/><rect x="1217" fill="#caff5e"/><rect x="1222" fill="#deff5e"/><rect x="1227" fill="#f3ff5e"/><rect x="1232" fill="#fff65b"/><rect x="1237" fill="#ffe254"/><rect x="1242" fill="#ffd14e"/><rect x="1247" fill="#ffc249"/><rect x="1252" fill="#ffb444"/><rect x="1257" fill="#ffa840"/><rect x="1262" fill="#ff9d3c"/><rect x="1267" fill="#ff9238"/><rect x="1272" fill="#ff8935"/><rect x="1277" fill="#ff8031"/><rect x="1282" fill="#ff782f"/><rect x="1287" fill="#ff712c"/><rect x="1292" fill="#ff6a2a"/><rect x="1297" fill="#ff6427"/><rect x="1302" fill="#ff5e25"/><rect x="1307" fill="#ff5923"/><rect x="1312" fill="#ff5322"/><rect x="1317" fill="#ff4f20"/><rect x="1322" fill="#ff4a1e"/><rect x="1327" fill="#ff461d"/><rect x="1332" fill="#ff421b"/><rect x="1337" fill="#ff3e1a"/><rect x="1342" fill="#ff3a19"/><rect x="1347" fill="#ff3717"/><rect x="1352" fill="#ff3416"/><rect x="1357" fill="#ff3015"/><rect x="1362" fill="#ff2e14"/><rect x="1367" fill="#ff2b13"/><rect x="1372" fill="#ff2812"/><rect x="1377" fill="#ff2611"/><rect x="1382" fill="#ff2310"/><rect x="1387" fill="#ff2110"/><rect x="1392" fill="#ff1e0f"/><rect x="1397" fill="#ff1c0e"/><rect x="1402" fill="#ff1a0d"/><rect x="1407" fill="#ff180d"/><rect x="1412" fill="#ff160c"/><rect x="1417" fill="#ff150b"/><rect x="1422" fill="#ff130b"/><rect x="1427" fill="#ff110a"/><rect x="1432" fill="#ff0f09"/><rect x="1437" fill="#ff0e09"/><rect x="1442" fill="#ff0c08"/><rect x="1447" fill="#ff0b08"/><rect x="1452" fill="#ff0a07"/><rect x="1457" fill="#ff0807"/><rect x="1462" fill="#ff0706"/><rect x="1467" fill="#ff0606"/><rect x="1472" fill="#ff0405"/><rect x="1477" fill="#ff0305"/><rect x="1482" fill="#ff0205"/><rect x="1487" fill="#ff0104"/><rect x="1492" fill="#ff0004"/><rect x="1497" fill="#ff0003"/><rect x="1502" fill="#ff0003"/><rect x="1507" fill="#ff0003"/></g><g transform="translate(0 192)"><rect x="1137" fill="#00ff67"/><rect x="1142" fill="#00ff67"/><rect x="1147" fill="#00ff68"/><rect x="1152" fill="#00ff68"/><rect x="1157" fill="#04ff69"/><rect x="1162" fill="#12ff69"/><rect x="1167" fill="#20ff69"/><rect x="1172" fill="#2fff6a"/><rect x="1177" fill="#3eff6a"/><rect x="1182" fill="#4dff6b"/><rect x="1187" fill="#5dff6b"/><rect x="1192" fill="#6eff6c"/><rect x="1197" fill="#7fff6c"/><rect x="1202" fill="#91ff6d"/><rect x="1207" fill="#a4ff6e"/><rect x="1212" fill="#b7ff6e"/><rect x="1217" fill="#cbff6f"/><rect x="1222" fill="#dfff6f"/><rect x="1227" fill="#f5ff70"/><rect x="1232" fill="#fff46c"/><rect x="1237" fill="#ffe064"/><rect x="1242" fill="#ffcf5d"/><rect x="1247" fill="#ffc056"/><rect x="1252" fill="#ffb251"/><rect x="1257" fill="#ffa64c"/><rect x="1262" fill="#ff9a47"/><rect x="1267" fill="#ff9043"/><rect x="1272" fill="#ff873f"/><rect x="1277" fill="#ff7e3c"/><rect x="1282" fill="#ff7638"/><rect x="1287" fill="#ff6f35"/><rect x="1292" fill="#ff6833"/><rect x="1297" fill="#ff6230"/><rect x="1302" fill="#ff5c2e"/><rect x="1307" fill="#ff572b"/><rect x="1312" fill="#ff5229"/><rect x="1317" fill="#ff4d27"/><rect x="1322" fill="#ff4825"/><rect x="1327" fill="#ff4424"/><rect x="1332" fill="#ff4022"/><rect x="1337" fill="#ff3c21"/><rect x="1342" fill="#ff391f"/><rect x="1347" fill="#ff351e"/><rect x="1352" fill="#ff321c"/><rect x="1357" fill="#ff2f1b"/><rect x="1362" fill="#ff2c1a"/><rect x="1367" fill="#ff2919"/><rect x="1372" fill="#ff2718"/><rect x="1377" fill="#ff2417"/><rect x="1382" fill="#ff2216"/><rect x="1387" fill="#ff1f15"/><rect x="1392" fill="#ff1d14"/><rect x="1397" fill="#ff1b13"/><rect x="1402" fill="#ff1912"/><rect x="1407" fill="#ff1711"/><rect x="1412" fill="#ff1511"/><rect x="1417" fill="#ff1310"/><rect x="1422" fill="#ff120f"/><rect x="1427" fill="#ff100e"/><rect x="1432" fill="#ff0e0e"/><rect x="1437" fill="#ff0d0d"/><rect x="1442" fill="#ff0b0c"/><rect x="1447" fill="#ff0a0c"/><rect x="1452" fill="#ff080b"/><rect x="1457" fill="#ff070b"/><rect x="1462" fill="#ff060a"/><rect x="1467" fill="#ff040a"/><rect x="1472" fill="#ff0309"/><rect x="1477" fill="#ff0209"/><rect x="1482" fill="#ff0108"/><rect x="1487" fill="#ff0008"/><rect x="1492" fill="#ff0007"/><rect x="1497" fill="#ff0007"/><rect x="1502" fill="#ff0006"/><rect x="1507" fill="#ff0006"/></g><g transform="translate(0 197)"><rect x="1137" fill="#00ff74"/><rect x="1142" fill="#00ff75"/><rect x="1147" fill="#00ff76"/><rect x="1152" fill="#00ff76"/><rect x="1157" fill="#02ff77"/><rect x="1162" fill="#10ff78"/><rect x="1167" fill="#1eff78"/><rect x="1172" fill="#2dff79"/><rect x="1177" fill="#3cff7a"/><rect x="1182" fill="#4cff7a"/><rect x="1187" fill="#5dff7b"/><rect x="1192" fill="#6dff7c"/><rect x="1197" fill="#7fff7d"/><rect x="1202" fill="#91ff7e"/><rect x="1207" fill="#a4ff7f"/><rect x="1212" fill="#b7ff7f"/><rect x="1217" fill="#ccff80"/><rect x="1222" fill="#e1ff81"/><rect x="1227" fill="#f7ff82"/><rect x="1232" fill="#fff17d"/><rect x="1237" fill="#ffde73"/><rect x="1242" fill="#ffcd6b"/><rect x="1247" fill="#ffbd64"/><rect x="1252" fill="#ffb05e"/><rect x="1257" fill="#ffa358"/><rect x="1262" fill="#ff9853"/><rect x="1267" fill="#ff8e4e"/><rect x="1272" fill="#ff854a"/><rect x="1277" fill="#ff7c46"/><rect x="1282" fill="#ff7442"/><rect x="1287" fill="#ff6d3f"/><rect x="1292" fill="#ff663c"/><rect x="1297" fill="#ff6039"/><rect x="1302" fill="#ff5a36"/><rect x="1307" fill="#ff5534"/><rect x="1312" fill="#ff5031"/><rect x="1317" fill="#ff4b2f"/><rect x="1322" fill="#ff462d"/><rect x="1327" fill="#ff422b"/><rect x="1332" fill="#ff3e29"/><rect x="1337" fill="#ff3a27"/><rect x="1342" fill="#ff3726"/><rect x="1347" fill="#ff3424"/><rect x="1352" fill="#ff3023"/><rect x="1357" fill="#ff2d21"/><rect x="1362" fill="#ff2a20"/><rect x="1367" fill="#ff281f"/><rect x="1372" fill="#ff251d"/><rect x="1377" fill="#ff231c"/><rect x="1382" fill="#ff201b"/><rect x="1387" fill="#ff1e1a"/><rect x="1392" fill="#ff1c19"/><rect x="1397" fill="#ff1a18"/><rect x="1402" fill="#ff1817"/><rect x="1407" fill="#ff1616"/><rect x="1412" fill="#ff1415"/><rect x="1417" fill="#ff1214"/><rect x="1422" fill="#ff1014"/><rect x="1427" fill="#ff0f13"/><rect x="1432" fill="#ff0d12"/><rect x="1437" fill="#ff0b11"/><rect x="1442" fill="#ff0a11"/><rect x="1447" fill="#ff0910"/><rect x="1452" fill="#ff070f"/><rect x="1457" fill="#ff060f"/><rect x="1462" fill="#ff040e"/><rect x="1467" fill="#ff030e"/><rect x="1472" fill="#ff020d"/><rect x="1477" fill="#ff010c"/><rect x="1482" fill="#ff000c"/><rect x="1487" fill="#ff000b"/><rect x="1492" fill="#ff000b"/><rect x="1497" fill="#ff000a"/><rect x="1502" fill="#ff000a"/><rect x="1507" fill="#ff0009"/></g><g transform="translate(0 202)"><rect x="1137" fill="#00ff82"/><rect x="1142" fill="#00ff83"/><rect x="1147" fill="#00ff84"/><rect x="1152" fill="#00ff85"/><rect x="1157" fill="#00ff86"/><rect x="1162" fill="#0eff87"/><rect x="1167" fill="#1cff87"/><rect x="1172" fill="#2bff88"/><rect x="1177" fill="#3bff89"/><rect x="1182" fill="#4bff8a"/><rect x="1187" fill="#5cff8b"/><rect x="1192" fill="#6dff8d"/><rect x="1197" fill="#7fff8e"/><rect x="1202" fill="#91ff8f"/><rect x="1207" fill="#a4ff90"/><rect x="1212" fill="#b8ff91"/><rect x="1217" fill="#cdff93"/><rect x="1222" fill="#e2ff94"/><rect x="1227" fill="#f9ff96"/><rect x="1232" fill="#ffef8e"/><rect x="1237" fill="#ffdc83"/><rect x="1242" fill="#ffca7a"/><rect x="1247" fill="#ffbb72"/><rect x="1252" fill="#ffad6b"/><rect x="1257" fill="#ffa165"/><rect x="1262" fill="#ff965f"/><rect x="1267" fill="#ff8c5a"/><rect x="1272" fill="#ff8255"/><rect x="1277" fill="#ff7a50"/><rect x="1282" fill="#ff724c"/><rect x="1287" fill="#ff6b48"/><rect x="1292" fill="#ff6445"/><rect x="1297" fill="#ff5e42"/><rect x="1302" fill="#ff583f"/><rect x="1307" fill="#ff533c"/><rect x="1312" fill="#ff4e39"/><rect x="1317" fill="#ff4937"/><rect x="1322" fill="#ff4534"/><rect x="1327" fill="#ff4032"/><rect x="1332" fill="#ff3c30"/><rect x="1337" fill="#ff392e"/><rect x="1342" fill="#ff352c"/><rect x="1347" fill="#ff322a"/><rect x="1352" fill="#ff2f29"/><rect x="1357" fill="#ff2c27"/><rect x="1362" fill="#ff2926"/><rect x="1367" fill="#ff2624"/><rect x="1372" fill="#ff2323"/><rect x="1377" fill="#ff2122"/><rect x="1382" fill="#ff1f20"/><rect x="1387" fill="#ff1c1f"/><rect x="1392" fill="#ff1a1e"/><rect x="1397" fill="#ff181d"/><rect x="1402" fill="#ff161c"/><rect x="1407" fill="#ff141b"/><rect x="1412" fill="#ff121a"/><rect x="1417" fill="#ff1119"/><rect x="1422" fill="#ff0f18"/><rect x="1427" fill="#ff0d17"/><rect x="1432" fill="#ff0c16"/><rect x="1437" fill="#ff0a16"/><rect x="1442" fill="#ff0915"/><rect x="1447" fill="#ff0714"/><rect x="1452" fill="#ff0613"/><rect x="1457" fill="#ff0513"/><rect x="1462" fill="#ff0312"/><rect x="1467" fill="#ff0211"/><rect x="1472" fill="#ff0111"/><rect x="1477" fill="#ff0010"/><rect x="1482" fill="#ff0010"/><rect x="1487" fill="#ff000f"/><rect x="1492" fill="#ff000e"/><rect x="1497" fill="#ff000e"/><rect x="1502" fill="#ff000d"/></g><g transform="translate(0 207)"><rect x="1142" fill="#00ff92"/><rect x="1147" fill="#00ff93"/><rect x="1152" fill="#00ff94"/><rect x="1157" fill="#00ff95"/><rect x="1162" fill="#0cff96"/><rect x="1167" fill="#1bff97"/><rect x="1172" fill="#2aff98"/><rect x="1177" fill="#3aff9a"/><rect x="1182" fill="#4aff9b"/><rect x="1187" fill="#5bff9c"/><rect x="1192" fill="#6cff9e"/><rect x="1197" fill="#7eff9f"/><rect x="1202" fill="#91ffa1"/><rect x="1207" fill="#a5ffa2"/><rect x="1212" fill="#b9ffa4"/><rect x="1217" fill="#ceffa6"/><rect x="1222" fill="#e4ffa8"/><rect x="1227" fill="#fbffa9"/><rect x="1232" fill="#ffed9f"/><rect x="1237" fill="#ffd994"/><rect x="1242" fill="#ffc88a"/><rect x="1247" fill="#ffb981"/><rect x="1252" fill="#ffab79"/><rect x="1257" fill="#ff9f71"/><rect x="1262" fill="#ff946b"/><rect x="1267" fill="#ff8965"/><rect x="1272" fill="#ff8060"/><rect x="1277" fill="#ff785b"/><rect x="1282" fill="#ff7056"/><rect x="1287" fill="#ff6952"/><rect x="1292" fill="#ff624e"/><rect x="1297" fill="#ff5c4a"/><rect x="1302" fill="#ff5647"/><rect x="1307" fill="#ff5144"/><rect x="1312" fill="#ff4c41"/><rect x="1317" fill="#ff473e"/><rect x="1322" fill="#ff433c"/><rect x="1327" fill="#ff3f39"/><rect x="1332" fill="#ff3b37"/><rect x="1337" fill="#ff3735"/><rect x="1342" fill="#ff3333"/><rect x="1347" fill="#ff3031"/><rect x="1352" fill="#ff2d2f"/><rect x="1357" fill="#ff2a2d"/><rect x="1362" fill="#ff272c"/><rect x="1367" fill="#ff252a"/><rect x="1372" fill="#ff2229"/><rect x="1377" fill="#ff1f27"/><rect x="1382" fill="#ff1d26"/><rect x="1387" fill="#ff1b25"/><rect x="1392" fill="#ff1923"/><rect x="1397" fill="#ff1722"/><rect x="1402" fill="#ff1521"/><rect x="1407" fill="#ff1320"/><rect x="1412" fill="#ff111f"/><rect x="1417" fill="#ff0f1e"/><rect x="1422" fill="#ff0e1d"/><rect x="1427" fill="#ff0c1c"/><rect x="1432" fill="#ff0a1b"/><rect x="1437" fill="#ff091a"/><rect x="1442" fill="#ff0719"/><rect x="1447" fill="#ff0618"/><rect x="1452" fill="#ff0518"/><rect x="1457" fill="#ff0317"/><rect x="1462" fill="#ff0216"/><rect x="1467" fill="#ff0115"/><rect x="1472" fill="#ff0015"/><rect x="1477" fill="#ff0014"/><rect x="1482" fill="#ff0013"/><rect x="1487" fill="#ff0013"/><rect x="1492" fill="#ff0012"/><rect x="1497" fill="#ff0011"/></g><g transform="translate(0 212)"><rect x="1142" fill="#00ffa0"/><rect x="1147" fill="#00ffa2"/><rect x="1152" fill="#00ffa3"/><rect x="1157" fill="#00ffa4"/><rect x="1162" fill="#0affa6"/><rect x="1167" fill="#19ffa7"/><rect x="1172" fill="#28ffa9"/><rect x="1177" fill="#38ffab"/><rect x="1182" fill="#49ffac"/><rect x="1187" fill="#5affae"/><rect x="1192" fill="#6bffb0"/><rect x="1197" fill="#7effb2"/><rect x="1202" fill="#91ffb3"/><rect x="1207" fill="#a5ffb5"/><rect x="1212" fill="#baffb7"/><rect x="1217" fill="#cfffba"/><rect x="1222" fill="#e5ffbc"/><rect x="1227" fill="#fdffbe"/><rect x="1232" fill="#ffebb1"/><rect x="1237" fill="#ffd7a4"/><rect x="1242" fill="#ffc699"/><rect x="1247" fill="#ffb68f"/><rect x="1252" fill="#ffa986"/><rect x="1257" fill="#ff9c7f"/><rect x="1262" fill="#ff9177"/><rect x="1267" fill="#ff8771"/><rect x="1272" fill="#ff7e6b"/><rect x="1277" fill="#ff7565"/><rect x="1282" fill="#ff6e60"/><rect x="1287" fill="#ff675c"/><rect x="1292" fill="#ff6057"/><rect x="1297" fill="#ff5a53"/><rect x="1302" fill="#ff5450"/><rect x="1307" fill="#ff4f4c"/><rect x="1312" fill="#ff4a49"/><rect x="1317" fill="#ff4546"/><rect x="1322" fill="#ff4143"/><rect x="1327" fill="#ff3d41"/><rect x="1332" fill="#ff393e"/><rect x="1337" fill="#ff353c"/><rect x="1342" fill="#ff323a"/><rect x="1347" fill="#ff2e37"/><rect x="1352" fill="#ff2b35"/><rect x="1357" fill="#ff2834"/><rect x="1362" fill="#ff2632"/><rect x="1367" fill="#ff2330"/><rect x="1372" fill="#ff202e"/><rect x="1377" fill="#ff1e2d"/><rect x="1382" fill="#ff1c2b"/><rect x="1387" fill="#ff192a"/><rect x="1392" fill="#ff1728"/><rect x="1397" fill="#ff1527"/><rect x="1402" fill="#ff1326"/><rect x="1407" fill="#ff1125"/><rect x="1412" fill="#ff1024"/><rect x="1417" fill="#ff0e22"/><rect x="1422" fill="#ff0c21"/><rect x="1427" fill="#ff0b20"/><rect x="1432" fill="#ff091f"/><rect x="1437" fill="#ff081e"/><rect x="1442" fill="#ff061d"/><rect x="1447" fill="#ff051d"/><rect x="1452" fill="#ff031c"/><rect x="1457" fill="#ff021b"/><rect x="1462" fill="#ff011a"/><rect x="1467" fill="#ff0019"/><rect x="1472" fill="#ff0018"/><rect x="1477" fill="#ff0018"/><rect x="1482" fill="#ff0017"/><rect x="1487" fill="#ff0016"/><rect x="1492" fill="#ff0016"/></g><g transform="translate(0 217)"><rect x="1142" fill="#00ffb0"/><rect x="1147" fill="#00ffb1"/><rect x="1152" fill="#00ffb3"/><rect x="1157" fill="#00ffb5"/><rect x="1162" fill="#07ffb6"/><rect x="1167" fill="#17ffb8"/><rect x="1172" fill="#26ffba"/><rect x="1177" fill="#36ffbc"/><rect x="1182" fill="#47ffbe"/><rect x="1187" fill="#59ffc0"/><rect x="1192" fill="#6bffc2"/><rect x="1197" fill="#7effc4"/><rect x="1202" fill="#91ffc7"/><rect x="1207" fill="#a5ffc9"/><rect x="1212" fill="#baffcc"/><rect x="1217" fill="#d0ffce"/><rect x="1222" fill="#e7ffd1"/><rect x="1227" fill="#ffffd4"/><rect x="1232" fill="#ffe8c4"/><rect x="1237" fill="#ffd5b6"/><rect x="1242" fill="#ffc3a9"/><rect x="1247" fill="#ffb49e"/><rect x="1252" fill="#ffa694"/><rect x="1257" fill="#ff9a8c"/><rect x="1262" fill="#ff8f84"/><rect x="1267" fill="#ff857d"/><rect x="1272" fill="#ff7c76"/><rect x="1277" fill="#ff7370"/><rect x="1282" fill="#ff6b6b"/><rect x="1287" fill="#ff6466"/><rect x="1292" fill="#ff5e61"/><rect x="1297" fill="#ff585d"/><rect x="1302" fill="#ff5259"/><rect x="1307" fill="#ff4d55"/><rect x="1312" fill="#ff4851"/><rect x="1317" fill="#ff434e"/><rect x="1322" fill="#ff3f4b"/><rect x="1327" fill="#ff3b48"/><rect x="1332" fill="#ff3745"/><rect x="1337" fill="#ff3343"/><rect x="1342" fill="#ff3040"/><rect x="1347" fill="#ff2d3e"/><rect x="1352" fill="#ff2a3c"/><rect x="1357" fill="#ff273a"/><rect x="1362" fill="#ff2438"/><rect x="1367" fill="#ff2136"/><rect x="1372" fill="#ff1f34"/><rect x="1377" fill="#ff1c32"/><rect x="1382" fill="#ff1a31"/><rect x="1387" fill="#ff182f"/><rect x="1392" fill="#ff162e"/><rect x="1397" fill="#ff142c"/><rect x="1402" fill="#ff122b"/><rect x="1407" fill="#ff102a"/><rect x="1412" fill="#ff0e28"/><rect x="1417" fill="#ff0d27"/><rect x="1422" fill="#ff0b26"/><rect x="1427" fill="#ff0925"/><rect x="1432" fill="#ff0824"/><rect x="1437" fill="#ff0623"/><rect x="1442" fill="#ff0522"/><rect x="1447" fill="#ff0421"/><rect x="1452" fill="#ff0220"/><rect x="1457" fill="#ff011f"/><rect x="1462" fill="#ff001e"/><rect x="1467" fill="#ff001d"/><rect x="1472" fill="#ff001c"/><rect x="1477" fill="#ff001c"/><rect x="1482" fill="#ff001b"/><rect x="1487" fill="#ff001a"/></g><g transform="translate(0 222)"><rect x="1142" fill="#00ffc0"/><rect x="1147" fill="#00ffc2"/><rect x="1152" fill="#00ffc3"/><rect x="1157" fill="#00ffc5"/><rect x="1162" fill="#05ffc7"/><rect x="1167" fill="#14ffca"/><rect x="1172" fill="#24ffcc"/><rect x="1177" fill="#35ffce"/><rect x="1182" fill="#46ffd0"/><rect x="1187" fill="#58ffd3"/><rect x="1192" fill="#6affd5"/><rect x="1197" fill="#7dffd8"/><rect x="1202" fill="#91ffdb"/><rect x="1207" fill="#a6ffde"/><rect x="1212" fill="#bbffe1"/><rect x="1217" fill="#d2ffe4"/><rect x="1222" fill="#e9ffe7"/><rect x="1227" fill="#fffde8"/><rect x="1232" fill="#ffe6d6"/><rect x="1237" fill="#ffd2c7"/><rect x="1242" fill="#ffc1b9"/><rect x="1247" fill="#ffb1ad"/><rect x="1252" fill="#ffa4a3"/><rect x="1257" fill="#ff9799"/><rect x="1262" fill="#ff8c91"/><rect x="1267" fill="#ff8289"/><rect x="1272" fill="#ff7982"/><rect x="1277" fill="#ff717b"/><rect x="1282" fill="#ff6975"/><rect x="1287" fill="#ff6270"/><rect x="1292" fill="#ff5c6b"/><rect x="1297" fill="#ff5666"/><rect x="1302" fill="#ff5061"/><rect x="1307" fill="#ff4b5d"/><rect x="1312" fill="#ff465a"/><rect x="1317" fill="#ff4156"/><rect x="1322" fill="#ff3d53"/><rect x="1327" fill="#ff3950"/><rect x="1332" fill="#ff354d"/><rect x="1337" fill="#ff324a"/><rect x="1342" fill="#ff2e47"/><rect x="1347" fill="#ff2b45"/><rect x="1352" fill="#ff2842"/><rect x="1357" fill="#ff2540"/><rect x="1362" fill="#ff223e"/><rect x="1367" fill="#ff203c"/><rect x="1372" fill="#ff1d3a"/><rect x="1377" fill="#ff1b38"/><rect x="1382" fill="#ff1936"/><rect x="1387" fill="#ff1635"/><rect x="1392" fill="#ff1433"/><rect x="1397" fill="#ff1231"/><rect x="1402" fill="#ff1030"/><rect x="1407" fill="#ff0f2f"/><rect x="1412" fill="#ff0d2d"/><rect x="1417" fill="#ff0b2c"/><rect x="1422" fill="#ff0a2b"/><rect x="1427" fill="#ff0829"/><rect x="1432" fill="#ff0728"/><rect x="1437" fill="#ff0527"/><rect x="1442" fill="#ff0426"/><rect x="1447" fill="#ff0225"/><rect x="1452" fill="#ff0124"/><rect x="1457" fill="#ff0023"/><rect x="1462" fill="#ff0022"/><rect x="1467" fill="#ff0021"/><rect x="1472" fill="#ff0020"/><rect x="1477" fill="#ff001f"/><rect x="1482" fill="#ff001f"/></g><g transform="translate(0 227)"><rect x="1142" fill="#00ffd0"/><rect x="1147" fill="#00ffd2"/><rect x="1152" fill="#00ffd4"/><rect x="1157" fill="#00ffd7"/><rect x="1162" fill="#03ffd9"/><rect x="1167" fill="#12ffdc"/><rect x="1172" fill="#22ffde"/><rect x="1177" fill="#33ffe1"/><rect x="1182" fill="#45ffe3"/><rect x="1187" fill="#57ffe6"/><rect x="1192" fill="#69ffe9"/><rect x="1197" fill="#7dffec"/><rect x="1202" fill="#91fff0"/><rect x="1207" fill="#a6fff3"/><rect x="1212" fill="#bcfff6"/><rect x="1217" fill="#d3fffa"/><rect x="1222" fill="#ebfffe"/><rect x="1227" fill="#fffafd"/><rect x="1232" fill="#ffe3ea"/><rect x="1237" fill="#ffd0d9"/><rect x="1242" fill="#ffbeca"/><rect x="1247" fill="#ffafbd"/><rect x="1252" fill="#ffa1b1"/><rect x="1257" fill="#ff95a7"/><rect x="1262" fill="#ff8a9d"/><rect x="1267" fill="#ff8095"/><rect x="1272" fill="#ff778d"/><rect x="1277" fill="#ff6f86"/><rect x="1282" fill="#ff6780"/><rect x="1287" fill="#ff607a"/><rect x="1292" fill="#ff5974"/><rect x="1297" fill="#ff536f"/><rect x="1302" fill="#ff4e6a"/><rect x="1307" fill="#ff4966"/><rect x="1312" fill="#ff4462"/><rect x="1317" fill="#ff3f5e"/><rect x="1322" fill="#ff3b5a"/><rect x="1327" fill="#ff3757"/><rect x="1332" fill="#ff3354"/><rect x="1337" fill="#ff3051"/><rect x="1342" fill="#ff2c4e"/><rect x="1347" fill="#ff294b"/><rect x="1352" fill="#ff2649"/><rect x="1357" fill="#ff2346"/><rect x="1362" fill="#ff2144"/><rect x="1367" fill="#ff1e42"/><rect x="1372" fill="#ff1c40"/><rect x="1377" fill="#ff193e"/><rect x="1382" fill="#ff173c"/><rect x="1387" fill="#ff153a"/><rect x="1392" fill="#ff1338"/><rect x="1397" fill="#ff1137"/><rect x="1402" fill="#ff0f35"/><rect x="1407" fill="#ff0d34"/><rect x="1412" fill="#ff0b32"/><rect x="1417" fill="#ff0a31"/><rect x="1422" fill="#ff082f"/><rect x="1427" fill="#ff072e"/><rect x="1432" fill="#ff052d"/><rect x="1437" fill="#ff042c"/><rect x="1442" fill="#ff022a"/><rect x="1447" fill="#ff0129"/><rect x="1452" fill="#ff0028"/><rect x="1457" fill="#ff0027"/><rect x="1462" fill="#ff0026"/><rect x="1467" fill="#ff0025"/><rect x="1472" fill="#ff0024"/><rect x="1477" fill="#ff0023"/></g><g transform="translate(0 232)"><rect x="1142" fill="#00ffe1"/><rect x="1147" fill="#00ffe3"/><rect x="1152" fill="#00ffe6"/><rect x="1157" fill="#00ffe9"/><rect x="1162" fill="#00ffeb"/><rect x="1167" fill="#10ffee"/><rect x="1172" fill="#20fff1"/><rect x="1177" fill="#31fff4"/><rect x="1182" fill="#43fff7"/><rect x="1187" fill="#55fffb"/><rect x="1192" fill="#69fffe"/><rect x="1197" fill="#7bfcff"/><rect x="1202" fill="#8ef9ff"/><rect x="1207" fill="#a0f5ff"/><rect x="1212" fill="#b3f2ff"/><rect x="1217" fill="#c6eeff"/><rect x="1222" fill="#d9eaff"/><rect x="1227" fill="#ede6ff"/><rect x="1232" fill="#ffe1fd"/><rect x="1237" fill="#ffcdeb"/><rect x="1242" fill="#ffbcdb"/><rect x="1247" fill="#ffaccd"/><rect x="1252" fill="#ff9fc0"/><rect x="1257" fill="#ff92b5"/><rect x="1262" fill="#ff87ab"/><rect x="1267" fill="#ff7ea1"/><rect x="1272" fill="#ff7499"/><rect x="1277" fill="#ff6c91"/><rect x="1282" fill="#ff658b"/><rect x="1287" fill="#ff5e84"/><rect x="1292" fill="#ff577e"/><rect x="1297" fill="#ff5179"/><rect x="1302" fill="#ff4c74"/><rect x="1307" fill="#ff476f"/><rect x="1312" fill="#ff426a"/><rect x="1317" fill="#ff3d66"/><rect x="1322" fill="#ff3962"/><rect x="1327" fill="#ff355f"/><rect x="1332" fill="#ff315b"/><rect x="1337" fill="#ff2e58"/><rect x="1342" fill="#ff2b55"/><rect x="1347" fill="#ff2752"/><rect x="1352" fill="#ff244f"/><rect x="1357" fill="#ff224d"/><rect x="1362" fill="#ff1f4a"/><rect x="1367" fill="#ff1c48"/><rect x="1372" fill="#ff1a46"/><rect x="1377" fill="#ff1844"/><rect x="1382" fill="#ff1541"/><rect x="1387" fill="#ff1340"/><rect x="1392" fill="#ff113e"/><rect x="1397" fill="#ff0f3c"/><rect x="1402" fill="#ff0e3a"/><rect x="1407" fill="#ff0c39"/><rect x="1412" fill="#ff0a37"/><rect x="1417" fill="#ff0835"/><rect x="1422" fill="#ff0734"/><rect x="1427" fill="#ff0533"/><rect x="1432" fill="#ff0431"/><rect x="1437" fill="#ff0230"/><rect x="1442" fill="#ff012f"/><rect x="1447" fill="#ff002d"/><rect x="1452" fill="#ff002c"/><rect x="1457" fill="#ff002b"/><rect x="1462" fill="#ff002a"/><rect x="1467" fill="#ff0029"/><rect x="1472" fill="#ff0028"/></g><g transform="translate(0 237)"><rect x="1147" fill="#00fff5"/><rect x="1152" fill="#00fff8"/><rect x="1157" fill="#00fffb"/><rect x="1162" fill="#00fffe"/><rect x="1167" fill="#0efdff"/><rect x="1172" fill="#1ef9ff"/><rect x="1177" fill="#2ef6ff"/><rect x="1182" fill="#3ef3ff"/><rect x="1187" fill="#4fefff"/><rect x="1192" fill="#60ecff"/><rect x="1197" fill="#71e9ff"/><rect x="1202" fill="#82e5ff"/><rect x="1207" fill="#94e2ff"/><rect x="1212" fill="#a5deff"/><rect x="1217" fill="#b7dbff"/><rect x="1222" fill="#c9d7ff"/><rect x="1227" fill="#dbd3ff"/><rect x="1232" fill="#eecfff"/><rect x="1237" fill="#ffcafd"/><rect x="1242" fill="#ffb9ec"/><rect x="1247" fill="#ffaadd"/><rect x="1252" fill="#ff9ccf"/><rect x="1257" fill="#ff90c3"/><rect x="1262" fill="#ff85b8"/><rect x="1267" fill="#ff7bae"/><rect x="1272" fill="#ff72a5"/><rect x="1277" fill="#ff6a9d"/><rect x="1282" fill="#ff6295"/><rect x="1287" fill="#ff5b8f"/><rect x="1292" fill="#ff5588"/><rect x="1297" fill="#ff4f82"/><rect x="1302" fill="#ff4a7d"/><rect x="1307" fill="#ff4578"/><rect x="1312" fill="#ff4073"/><rect x="1317" fill="#ff3b6e"/><rect x="1322" fill="#ff376a"/><rect x="1327" fill="#ff3366"/><rect x="1332" fill="#ff3063"/><rect x="1337" fill="#ff2c5f"/><rect x="1342" fill="#ff295c"/><rect x="1347" fill="#ff2659"/><rect x="1352" fill="#ff2356"/><rect x="1357" fill="#ff2053"/><rect x="1362" fill="#ff1d51"/><rect x="1367" fill="#ff1b4e"/><rect x="1372" fill="#ff184c"/><rect x="1377" fill="#ff1649"/><rect x="1382" fill="#ff1447"/><rect x="1387" fill="#ff1245"/><rect x="1392" fill="#ff1043"/><rect x="1397" fill="#ff0e41"/><rect x="1402" fill="#ff0c3f"/><rect x="1407" fill="#ff0a3e"/><rect x="1412" fill="#ff093c"/><rect x="1417" fill="#ff073a"/><rect x="1422" fill="#ff0539"/><rect x="1427" fill="#ff0437"/><rect x="1432" fill="#ff0336"/><rect x="1437" fill="#ff0134"/><rect x="1442" fill="#ff0033"/><rect x="1447" fill="#ff0032"/><rect x="1452" fill="#ff0031"/><rect x="1457" fill="#ff002f"/><rect x="1462" fill="#ff002e"/><rect x="1467" fill="#ff002d"/></g><g transform="translate(0 242)"><rect x="1147" fill="#00f7ff"/><rect x="1152" fill="#00f4ff"/><rect x="1157" fill="#00f1ff"/><rect x="1162" fill="#00eeff"/><rect x="1167" fill="#0aeaff"/><rect x="1172" fill="#1ae7ff"/><rect x="1177" fill="#29e4ff"/><rect x="1182" fill="#38e1ff"/><rect x="1187" fill="#48deff"/><rect x="1192" fill="#58daff"/><rect x="1197" fill="#68d7ff"/><rect x="1202" fill="#78d4ff"/><rect x="1207" fill="#89d0ff"/><rect x="1212" fill="#99cdff"/><rect x="1217" fill="#aac9ff"/><rect x="1222" fill="#bbc6ff"/><rect x="1227" fill="#ccc2ff"/><rect x="1232" fill="#ddbfff"/><rect x="1237" fill="#efbbff"/><rect x="1242" fill="#ffb6fe"/><rect x="1247" fill="#ffa7ed"/><rect x="1252" fill="#ff99de"/><rect x="1257" fill="#ff8dd1"/><rect x="1262" fill="#ff82c6"/><rect x="1267" fill="#ff79bb"/><rect x="1272" fill="#ff70b1"/><rect x="1277" fill="#ff67a9"/><rect x="1282" fill="#ff60a0"/><rect x="1287" fill="#ff5999"/><rect x="1292" fill="#ff5392"/><rect x="1297" fill="#ff4d8c"/><rect x="1302" fill="#ff4786"/><rect x="1307" fill="#ff4281"/><rect x="1312" fill="#ff3e7c"/><rect x="1317" fill="#ff3977"/><rect x="1322" fill="#ff3572"/><rect x="1327" fill="#ff316e"/><rect x="1332" fill="#ff2e6a"/><rect x="1337" fill="#ff2a67"/><rect x="1342" fill="#ff2763"/><rect x="1347" fill="#ff2460"/><rect x="1352" fill="#ff215d"/><rect x="1357" fill="#ff1e5a"/><rect x="1362" fill="#ff1c57"/><rect x="1367" fill="#ff1954"/><rect x="1372" fill="#ff1752"/><rect x="1377" fill="#ff144f"/><rect x="1382" fill="#ff124d"/><rect x="1387" fill="#ff104b"/><rect x="1392" fill="#ff0e48"/><rect x="1397" fill="#ff0c46"/><rect x="1402" fill="#ff0b45"/><rect x="1407" fill="#ff0943"/><rect x="1412" fill="#ff0741"/><rect x="1417" fill="#ff063f"/><rect x="1422" fill="#ff043e"/><rect x="1427" fill="#ff033c"/><rect x="1432" fill="#ff013a"/><rect x="1437" fill="#ff0039"/><rect x="1442" fill="#ff0037"/><rect x="1447" fill="#ff0036"/><rect x="1452" fill="#ff0035"/><rect x="1457" fill="#ff0034"/><rect x="1462" fill="#ff0032"/></g><g transform="translate(0 247)"><rect x="1147" fill="#00e6ff"/><rect x="1152" fill="#00e3ff"/><rect x="1157" fill="#00e0ff"/><rect x="1162" fill="#00ddff"/><rect x="1167" fill="#08daff"/><rect x="1172" fill="#16d7ff"/><rect x="1177" fill="#24d4ff"/><rect x="1182" fill="#33d1ff"/><rect x="1187" fill="#42ceff"/><rect x="1192" fill="#51caff"/><rect x="1197" fill="#60c7ff"/><rect x="1202" fill="#6fc4ff"/><rect x="1207" fill="#7fc1ff"/><rect x="1212" fill="#8ebdff"/><rect x="1217" fill="#9ebaff"/><rect x="1222" fill="#aeb7ff"/><rect x="1227" fill="#beb3ff"/><rect x="1232" fill="#ceb0ff"/><rect x="1237" fill="#dfacff"/><rect x="1242" fill="#efa9ff"/><rect x="1247" fill="#ffa4fe"/><rect x="1252" fill="#ff97ee"/><rect x="1257" fill="#ff8be0"/><rect x="1262" fill="#ff80d3"/><rect x="1267" fill="#ff76c8"/><rect x="1272" fill="#ff6dbe"/><rect x="1277" fill="#ff65b4"/><rect x="1282" fill="#ff5eac"/><rect x="1287" fill="#ff57a4"/><rect x="1292" fill="#ff509c"/><rect x="1297" fill="#ff4b96"/><rect x="1302" fill="#ff458f"/><rect x="1307" fill="#ff408a"/><rect x="1312" fill="#ff3c84"/><rect x="1317" fill="#ff377f"/><rect x="1322" fill="#ff337a"/><rect x="1327" fill="#ff2f76"/><rect x="1332" fill="#ff2c72"/><rect x="1337" fill="#ff286e"/><rect x="1342" fill="#ff256a"/><rect x="1347" fill="#ff2267"/><rect x="1352" fill="#ff1f63"/><rect x="1357" fill="#ff1c60"/><rect x="1362" fill="#ff1a5d"/><rect x="1367" fill="#ff175a"/><rect x="1372" fill="#ff1558"/><rect x="1377" fill="#ff1355"/><rect x="1382" fill="#ff1153"/><rect x="1387" fill="#ff0f50"/><rect x="1392" fill="#ff0d4e"/><rect x="1397" fill="#ff0b4c"/><rect x="1402" fill="#ff094a"/><rect x="1407" fill="#ff0748"/><rect x="1412" fill="#ff0646"/><rect x="1417" fill="#ff0444"/><rect x="1422" fill="#ff0342"/><rect x="1427" fill="#ff0141"/><rect x="1432" fill="#ff003f"/><rect x="1437" fill="#ff003d"/><rect x="1442" fill="#ff003c"/><rect x="1447" fill="#ff003a"/><rect x="1452" fill="#ff0039"/><rect x="1457" fill="#ff0038"/></g><g transform="translate(0 252)"><rect x="1147" fill="#00d7ff"/><rect x="1152" fill="#00d4ff"/><rect x="1157" fill="#00d1ff"/><rect x="1162" fill="#00ceff"/><rect x="1167" fill="#05ccff"/><rect x="1172" fill="#13c9ff"/><rect x="1177" fill="#20c5ff"/><rect x="1182" fill="#2ec2ff"/><rect x="1187" fill="#3cbfff"/><rect x="1192" fill="#4bbcff"/><rect x="1197" fill="#59b9ff"/><rect x="1202" fill="#67b6ff"/><rect x="1207" fill="#76b3ff"/><rect x="1212" fill="#85b0ff"/><rect x="1217" fill="#94acff"/><rect x="1222" fill="#a3a9ff"/><rect x="1227" fill="#b2a6ff"/><rect x="1232" fill="#c1a2ff"/><rect x="1237" fill="#d19fff"/><rect x="1242" fill="#e09cff"/><rect x="1247" fill="#f098ff"/><rect x="1252" fill="#ff94fe"/><rect x="1257" fill="#ff88ef"/><rect x="1262" fill="#ff7de1"/><rect x="1267" fill="#ff73d5"/><rect x="1272" fill="#ff6aca"/><rect x="1277" fill="#ff62c0"/><rect x="1282" fill="#ff5bb7"/><rect x="1287" fill="#ff54af"/><rect x="1292" fill="#ff4ea7"/><rect x="1297" fill="#ff48a0"/><rect x="1302" fill="#ff4399"/><rect x="1307" fill="#ff3e93"/><rect x="1312" fill="#ff398d"/><rect x="1317" fill="#ff3588"/><rect x="1322" fill="#ff3183"/><rect x="1327" fill="#ff2d7e"/><rect x="1332" fill="#ff2a79"/><rect x="1337" fill="#ff2675"/><rect x="1342" fill="#ff2371"/><rect x="1347" fill="#ff206e"/><rect x="1352" fill="#ff1d6a"/><rect x="1357" fill="#ff1b67"/><rect x="1362" fill="#ff1864"/><rect x="1367" fill="#ff1661"/><rect x="1372" fill="#ff135e"/><rect x="1377" fill="#ff115b"/><rect x="1382" fill="#ff0f58"/><rect x="1387" fill="#ff0d56"/><rect x="1392" fill="#ff0b53"/><rect x="1397" fill="#ff0951"/><rect x="1402" fill="#ff084f"/><rect x="1407" fill="#ff064d"/><rect x="1412" fill="#ff044b"/><rect x="1417" fill="#ff0349"/><rect x="1422" fill="#ff0147"/><rect x="1427" fill="#ff0045"/><rect x="1432" fill="#ff0044"/><rect x="1437" fill="#ff0042"/><rect x="1442" fill="#ff0040"/><rect x="1447" fill="#ff003f"/><rect x="1452" fill="#ff003d"/></g><g transform="translate(0 257)"><rect x="1147" fill="#00caff"/><rect x="1152" fill="#00c7ff"/><rect x="1157" fill="#00c4ff"/><rect x="1162" fill="#00c1ff"/><rect x="1167" fill="#03beff"/><rect x="1172" fill="#10bbff"/><rect x="1177" fill="#1db8ff"/><rect x="1182" fill="#2ab5ff"/><rect x="1187" fill="#37b2ff"/><rect x="1192" fill="#45afff"/><rect x="1197" fill="#52acff"/><rect x="1202" fill="#60a9ff"/><rect x="1207" fill="#6ea6ff"/><rect x="1212" fill="#7ca3ff"/><rect x="1217" fill="#8aa0ff"/><rect x="1222" fill="#989dff"/><rect x="1227" fill="#a79aff"/><rect x="1232" fill="#b596ff"/><rect x="1237" fill="#c493ff"/><rect x="1242" fill="#d390ff"/><rect x="1247" fill="#e28cff"/><rect x="1252" fill="#f189ff"/><rect x="1257" fill="#ff85fe"/><rect x="1262" fill="#ff7af0"/><rect x="1267" fill="#ff71e3"/><rect x="1272" fill="#ff68d7"/><rect x="1277" fill="#ff60cc"/><rect x="1282" fill="#ff59c3"/><rect x="1287" fill="#ff52ba"/><rect x="1292" fill="#ff4cb1"/><rect x="1297" fill="#ff46aa"/><rect x="1302" fill="#ff41a3"/><rect x="1307" fill="#ff3c9c"/><rect x="1312" fill="#ff3796"/><rect x="1317" fill="#ff3390"/><rect x="1322" fill="#ff2f8b"/><rect x="1327" fill="#ff2b86"/><rect x="1332" fill="#ff2881"/><rect x="1337" fill="#ff247d"/><rect x="1342" fill="#ff2179"/><rect x="1347" fill="#ff1e75"/><rect x="1352" fill="#ff1c71"/><rect x="1357" fill="#ff196d"/><rect x="1362" fill="#ff166a"/><rect x="1367" fill="#ff1467"/><rect x="1372" fill="#ff1264"/><rect x="1377" fill="#ff1061"/><rect x="1382" fill="#ff0e5e"/><rect x="1387" fill="#ff0c5c"/><rect x="1392" fill="#ff0a59"/><rect x="1397" fill="#ff0857"/><rect x="1402" fill="#ff0654"/><rect x="1407" fill="#ff0452"/><rect x="1412" fill="#ff0350"/><rect x="1417" fill="#ff014e"/><rect x="1422" fill="#ff004c"/><rect x="1427" fill="#ff004a"/><rect x="1432" fill="#ff0048"/><rect x="1437" fill="#ff0047"/><rect x="1442" fill="#ff0045"/><rect x="1447" fill="#ff0043"/></g><g transform="translate(0 262)"><rect x="1147" fill="#00bdff"/><rect x="1152" fill="#00baff"/><rect x="1157" fill="#00b8ff"/><rect x="1162" fill="#00b5ff"/><rect x="1167" fill="#00b2ff"/><rect x="1172" fill="#0dafff"/><rect x="1177" fill="#19acff"/><rect x="1182" fill="#26aaff"/><rect x="1187" fill="#33a7ff"/><rect x="1192" fill="#40a4ff"/><rect x="1197" fill="#4da1ff"/><rect x="1202" fill="#5a9eff"/><rect x="1207" fill="#679bff"/><rect x="1212" fill="#7498ff"/><rect x="1217" fill="#8295ff"/><rect x="1222" fill="#8f92ff"/><rect x="1227" fill="#9d8fff"/><rect x="1232" fill="#ab8bff"/><rect x="1237" fill="#b888ff"/><rect x="1242" fill="#c685ff"/><rect x="1247" fill="#d582ff"/><rect x="1252" fill="#e37fff"/><rect x="1257" fill="#f17bff"/><rect x="1262" fill="#ff78fe"/><rect x="1267" fill="#ff6ef0"/><rect x="1272" fill="#ff65e4"/><rect x="1277" fill="#ff5dd9"/><rect x="1282" fill="#ff56ce"/><rect x="1287" fill="#ff4fc5"/><rect x="1292" fill="#ff49bc"/><rect x="1297" fill="#ff44b4"/><rect x="1302" fill="#ff3eac"/><rect x="1307" fill="#ff3aa5"/><rect x="1312" fill="#ff359f"/><rect x="1317" fill="#ff3199"/><rect x="1322" fill="#ff2d93"/><rect x="1327" fill="#ff298e"/><rect x="1332" fill="#ff2689"/><rect x="1337" fill="#ff2384"/><rect x="1342" fill="#ff1f80"/><rect x="1347" fill="#ff1d7c"/><rect x="1352" fill="#ff1a78"/><rect x="1357" fill="#ff1774"/><rect x="1362" fill="#ff1571"/><rect x="1367" fill="#ff126d"/><rect x="1372" fill="#ff106a"/><rect x="1377" fill="#ff0e67"/><rect x="1382" fill="#ff0c64"/><rect x="1387" fill="#ff0a61"/><rect x="1392" fill="#ff085f"/><rect x="1397" fill="#ff065c"/><rect x="1402" fill="#ff055a"/><rect x="1407" fill="#ff0357"/><rect x="1412" fill="#ff0155"/><rect x="1417" fill="#ff0053"/><rect x="1422" fill="#ff0051"/><rect x="1427" fill="#ff004f"/><rect x="1432" fill="#ff004d"/><rect x="1437" fill="#ff004b"/><rect x="1442" fill="#ff0049"/></g><g transform="translate(0 267)"><rect x="1152" fill="#00afff"/><rect x="1157" fill="#00adff"/><rect x="1162" fill="#00aaff"/><rect x="1167" fill="#00a7ff"/><rect x="1172" fill="#0aa4ff"/><rect x="1177" fill="#16a2ff"/><rect x="1182" fill="#229fff"/><rect x="1187" fill="#2f9cff"/><rect x="1192" fill="#3b99ff"/><rect x="1197" fill="#4796ff"/><rect x="1202" fill="#5493ff"/><rect x="1207" fill="#6090ff"/><rect x="1212" fill="#6d8eff"/><rect x="1217" fill="#7a8bff"/><rect x="1222" fill="#8788ff"/><rect x="1227" fill="#9485ff"/><rect x="1232" fill="#a182ff"/><rect x="1237" fill="#ae7eff"/><rect x="1242" fill="#bb7bff"/><rect x="1247" fill="#c978ff"/><rect x="1252" fill="#d675ff"/><rect x="1257" fill="#e472ff"/><rect x="1262" fill="#f26fff"/><rect x="1267" fill="#ff6bfe"/><rect x="1272" fill="#ff63f1"/><rect x="1277" fill="#ff5be5"/><rect x="1282" fill="#ff54da"/><rect x="1287" fill="#ff4dd0"/><rect x="1292" fill="#ff47c7"/><rect x="1297" fill="#ff41be"/><rect x="1302" fill="#ff3cb6"/><rect x="1307" fill="#ff37af"/><rect x="1312" fill="#ff33a8"/><rect x="1317" fill="#ff2fa2"/><rect x="1322" fill="#ff2b9c"/><rect x="1327" fill="#ff2796"/><rect x="1332" fill="#ff2491"/><rect x="1337" fill="#ff218c"/><rect x="1342" fill="#ff1d87"/><rect x="1347" fill="#ff1b83"/><rect x="1352" fill="#ff187f"/><rect x="1357" fill="#ff157b"/><rect x="1362" fill="#ff1377"/><rect x="1367" fill="#ff1174"/><rect x="1372" fill="#ff0e70"/><rect x="1377" fill="#ff0c6d"/><rect x="1382" fill="#ff0a6a"/><rect x="1387" fill="#ff0867"/><rect x="1392" fill="#ff0764"/><rect x="1397" fill="#ff0562"/><rect x="1402" fill="#ff035f"/><rect x="1407" fill="#ff025d"/><rect x="1412" fill="#ff005a"/><rect x="1417" fill="#ff0058"/><rect x="1422" fill="#ff0056"/><rect x="1427" fill="#ff0054"/><rect x="1432" fill="#ff0052"/><rect x="1437" fill="#ff0050"/></g><g transform="translate(0 272)"><rect x="1152" fill="#00a5ff"/><rect x="1157" fill="#00a2ff"/><rect x="1162" fill="#00a0ff"/><rect x="1167" fill="#009dff"/><rect x="1172" fill="#089aff"/><rect x="1177" fill="#1498ff"/><rect x="1182" fill="#1f95ff"/><rect x="1187" fill="#2b92ff"/><rect x="1192" fill="#378fff"/><rect x="1197" fill="#428dff"/><rect x="1202" fill="#4e8aff"/><rect x="1207" fill="#5a87ff"/><rect x="1212" fill="#6684ff"/><rect x="1217" fill="#7381ff"/><rect x="1222" fill="#7f7eff"/><rect x="1227" fill="#8b7bff"/><rect x="1232" fill="#9879ff"/><rect x="1237" fill="#a476ff"/><rect x="1242" fill="#b173ff"/><rect x="1247" fill="#be70ff"/><rect x="1252" fill="#cb6dff"/><rect x="1257" fill="#d869ff"/><rect x="1262" fill="#e566ff"/><rect x="1267" fill="#f263ff"/><rect x="1272" fill="#ff60fe"/><rect x="1277" fill="#ff58f2"/><rect x="1282" fill="#ff51e6"/><rect x="1287" fill="#ff4adb"/><rect x="1292" fill="#ff44d2"/><rect x="1297" fill="#ff3fc9"/><rect x="1302" fill="#ff3ac0"/><rect x="1307" fill="#ff35b9"/><rect x="1312" fill="#ff31b1"/><rect x="1317" fill="#ff2dab"/><rect x="1322" fill="#ff29a4"/><rect x="1327" fill="#ff259e"/><rect x="1332" fill="#ff2299"/><rect x="1337" fill="#ff1f94"/><rect x="1342" fill="#ff1c8f"/><rect x="1347" fill="#ff198a"/><rect x="1352" fill="#ff1686"/><rect x="1357" fill="#ff1482"/><rect x="1362" fill="#ff117e"/><rect x="1367" fill="#ff0f7a"/><rect x="1372" fill="#ff0d77"/><rect x="1377" fill="#ff0b73"/><rect x="1382" fill="#ff0970"/><rect x="1387" fill="#ff076d"/><rect x="1392" fill="#ff056a"/><rect x="1397" fill="#ff0367"/><rect x="1402" fill="#ff0264"/><rect x="1407" fill="#ff0062"/><rect x="1412" fill="#ff005f"/><rect x="1417" fill="#ff005d"/><rect x="1422" fill="#ff005b"/><rect x="1427" fill="#ff0059"/><rect x="1432" fill="#ff0056"/></g><g transform="translate(0 277)"><rect x="1152" fill="#009bff"/><rect x="1157" fill="#0099ff"/><rect x="1162" fill="#0096ff"/><rect x="1167" fill="#0094ff"/><rect x="1172" fill="#0691ff"/><rect x="1177" fill="#118eff"/><rect x="1182" fill="#1c8cff"/><rect x="1187" fill="#2789ff"/><rect x="1192" fill="#3286ff"/><rect x="1197" fill="#3e84ff"/><rect x="1202" fill="#4981ff"/><rect x="1207" fill="#557eff"/><rect x="1212" fill="#607cff"/><rect x="1217" fill="#6c79ff"/><rect x="1222" fill="#7876ff"/><rect x="1227" fill="#8473ff"/><rect x="1232" fill="#9070ff"/><rect x="1237" fill="#9c6dff"/><rect x="1242" fill="#a86aff"/><rect x="1247" fill="#b468ff"/><rect x="1252" fill="#c065ff"/><rect x="1257" fill="#cd62ff"/><rect x="1262" fill="#d95fff"/><rect x="1267" fill="#e65cff"/><rect x="1272" fill="#f359ff"/><rect x="1277" fill="#ff55fe"/><rect x="1282" fill="#ff4ef2"/><rect x="1287" fill="#ff48e7"/><rect x="1292" fill="#ff42dd"/><rect x="1297" fill="#ff3dd3"/><rect x="1302" fill="#ff37ca"/><rect x="1307" fill="#ff33c2"/><rect x="1312" fill="#ff2ebb"/><rect x="1317" fill="#ff2ab4"/><rect x="1322" fill="#ff27ad"/><rect x="1327" fill="#ff23a7"/><rect x="1332" fill="#ff20a1"/><rect x="1337" fill="#ff1d9c"/><rect x="1342" fill="#ff1a96"/><rect x="1347" fill="#ff1792"/><rect x="1352" fill="#ff148d"/><rect x="1357" fill="#ff1289"/><rect x="1362" fill="#ff0f84"/><rect x="1367" fill="#ff0d81"/><rect x="1372" fill="#ff0b7d"/><rect x="1377" fill="#ff0979"/><rect x="1382" fill="#ff0776"/><rect x="1387" fill="#ff0573"/><rect x="1392" fill="#ff0370"/><rect x="1397" fill="#ff026d"/><rect x="1402" fill="#ff006a"/><rect x="1407" fill="#ff0067"/><rect x="1412" fill="#ff0065"/><rect x="1417" fill="#ff0062"/><rect x="1422" fill="#ff0060"/><rect x="1427" fill="#ff005d"/></g><g transform="translate(0 282)"><rect x="1152" fill="#0093ff"/><rect x="1157" fill="#0090ff"/><rect x="1162" fill="#008eff"/><rect x="1167" fill="#008bff"/><rect x="1172" fill="#0489ff"/><rect x="1177" fill="#0f86ff"/><rect x="1182" fill="#1983ff"/><rect x="1187" fill="#2481ff"/><rect x="1192" fill="#2f7eff"/><rect x="1197" fill="#3a7cff"/><rect x="1202" fill="#4579ff"/><rect x="1207" fill="#5076ff"/><rect x="1212" fill="#5b74ff"/><rect x="1217" fill="#6671ff"/><rect x="1222" fill="#716eff"/><rect x="1227" fill="#7d6bff"/><rect x="1232" fill="#8869ff"/><rect x="1237" fill="#9466ff"/><rect x="1242" fill="#9f63ff"/><rect x="1247" fill="#ab60ff"/><rect x="1252" fill="#b75dff"/><rect x="1257" fill="#c35bff"/><rect x="1262" fill="#cf58ff"/><rect x="1267" fill="#db55ff"/><rect x="1272" fill="#e752ff"/><rect x="1277" fill="#f34fff"/><rect x="1282" fill="#ff4cff"/><rect x="1287" fill="#ff45f3"/><rect x="1292" fill="#ff3fe8"/><rect x="1297" fill="#ff3ade"/><rect x="1302" fill="#ff35d5"/><rect x="1307" fill="#ff30cc"/><rect x="1312" fill="#ff2cc4"/><rect x="1317" fill="#ff28bd"/><rect x="1322" fill="#ff24b6"/><rect x="1327" fill="#ff21af"/><rect x="1332" fill="#ff1ea9"/><rect x="1337" fill="#ff1ba3"/><rect x="1342" fill="#ff189e"/><rect x="1347" fill="#ff1599"/><rect x="1352" fill="#ff1294"/><rect x="1357" fill="#ff1090"/><rect x="1362" fill="#ff0d8b"/><rect x="1367" fill="#ff0b87"/><rect x="1372" fill="#ff0983"/><rect x="1377" fill="#ff0780"/><rect x="1382" fill="#ff057c"/><rect x="1387" fill="#ff0379"/><rect x="1392" fill="#ff0275"/><rect x="1397" fill="#ff0072"/><rect x="1402" fill="#ff006f"/><rect x="1407" fill="#ff006d"/><rect x="1412" fill="#ff006a"/><rect x="1417" fill="#ff0067"/><rect x="1422" fill="#ff0065"/></g><g transform="translate(0 287)"><rect x="1152" fill="#008aff"/><rect x="1157" fill="#0088ff"/><rect x="1162" fill="#0086ff"/><rect x="1167" fill="#0083ff"/><rect x="1172" fill="#0281ff"/><rect x="1177" fill="#0c7eff"/><rect x="1182" fill="#177cff"/><rect x="1187" fill="#2179ff"/><rect x="1192" fill="#2b77ff"/><rect x="1197" fill="#3674ff"/><rect x="1202" fill="#4071ff"/><rect x="1207" fill="#4b6fff"/><rect x="1212" fill="#566cff"/><rect x="1217" fill="#606aff"/><rect x="1222" fill="#6b67ff"/><rect x="1227" fill="#7664ff"/><rect x="1232" fill="#8162ff"/><rect x="1237" fill="#8c5fff"/><rect x="1242" fill="#975cff"/><rect x="1247" fill="#a359ff"/><rect x="1252" fill="#ae57ff"/><rect x="1257" fill="#b954ff"/><rect x="1262" fill="#c551ff"/><rect x="1267" fill="#d04eff"/><rect x="1272" fill="#dc4bff"/><rect x="1277" fill="#e849ff"/><rect x="1282" fill="#f346ff"/><rect x="1287" fill="#ff43ff"/><rect x="1292" fill="#ff3df3"/><rect x="1297" fill="#ff38e9"/><rect x="1302" fill="#ff33df"/><rect x="1307" fill="#ff2ed6"/><rect x="1312" fill="#ff2ace"/><rect x="1317" fill="#ff26c6"/><rect x="1322" fill="#ff22bf"/><rect x="1327" fill="#ff1fb8"/><rect x="1332" fill="#ff1cb1"/><rect x="1337" fill="#ff18ab"/><rect x="1342" fill="#ff16a6"/><rect x="1347" fill="#ff13a0"/><rect x="1352" fill="#ff109b"/><rect x="1357" fill="#ff0e97"/><rect x="1362" fill="#ff0c92"/><rect x="1367" fill="#ff098e"/><rect x="1372" fill="#ff078a"/><rect x="1377" fill="#ff0586"/><rect x="1382" fill="#ff0482"/><rect x="1387" fill="#ff027f"/><rect x="1392" fill="#ff007b"/><rect x="1397" fill="#ff0078"/><rect x="1402" fill="#ff0075"/><rect x="1407" fill="#ff0072"/><rect x="1412" fill="#ff006f"/><rect x="1417" fill="#ff006c"/></g><g transform="translate(0 292)"><rect x="1152" fill="#0083ff"/><rect x="1157" fill="#0080ff"/><rect x="1162" fill="#007eff"/><rect x="1167" fill="#007cff"/><rect x="1172" fill="#0179ff"/><rect x="1177" fill="#0a77ff"/><rect x="1182" fill="#1474ff"/><rect x="1187" fill="#1e72ff"/><rect x="1192" fill="#286fff"/><rect x="1197" fill="#326dff"/><rect x="1202" fill="#3c6bff"/><rect x="1207" fill="#4768ff"/><rect x="1212" fill="#5165ff"/><rect x="1217" fill="#5b63ff"/><rect x="1222" fill="#6660ff"/><rect x="1227" fill="#705eff"/><rect x="1232" fill="#7b5bff"/><rect x="1237" fill="#8559ff"/><rect x="1242" fill="#9056ff"/><rect x="1247" fill="#9b53ff"/><rect x="1252" fill="#a651ff"/><rect x="1257" fill="#b14eff"/><rect x="1262" fill="#bc4bff"/><rect x="1267" fill="#c748ff"/><rect x="1272" fill="#d246ff"/><rect x="1277" fill="#dd43ff"/><rect x="1282" fill="#e840ff"/><rect x="1287" fill="#f43dff"/><rect x="1292" fill="#ff3aff"/><rect x="1297" fill="#ff35f4"/><rect x="1302" fill="#ff30e9"/><rect x="1307" fill="#ff2ce0"/><rect x="1312" fill="#ff28d7"/><rect x="1317" fill="#ff24cf"/><rect x="1322" fill="#ff20c7"/><rect x="1327" fill="#ff1dc0"/><rect x="1332" fill="#ff19ba"/><rect x="1337" fill="#ff16b3"/><rect x="1342" fill="#ff14ad"/><rect x="1347" fill="#ff11a8"/><rect x="1352" fill="#ff0ea3"/><rect x="1357" fill="#ff0c9e"/><rect x="1362" fill="#ff0a99"/><rect x="1367" fill="#ff0894"/><rect x="1372" fill="#ff0690"/><rect x="1377" fill="#ff048c"/><rect x="1382" fill="#ff0288"/><rect x="1387" fill="#ff0085"/><rect x="1392" fill="#ff0081"/><rect x="1397" fill="#ff007e"/><rect x="1402" fill="#ff007a"/><rect x="1407" fill="#ff0077"/><rect x="1412" fill="#ff0074"/></g><g transform="translate(0 297)"><rect x="1157" fill="#0079ff"/><rect x="1162" fill="#0077ff"/><rect x="1167" fill="#0075ff"/><rect x="1172" fill="#0072ff"/><rect x="1177" fill="#0970ff"/><rect x="1182" fill="#126eff"/><rect x="1187" fill="#1c6bff"/><rect x="1192" fill="#2569ff"/><rect x="1197" fill="#2f66ff"/><rect x="1202" fill="#3964ff"/><rect x="1207" fill="#4362ff"/><rect x="1212" fill="#4c5fff"/><rect x="1217" fill="#565dff"/><rect x="1222" fill="#605aff"/><rect x="1227" fill="#6b58ff"/><rect x="1232" fill="#7555ff"/><rect x="1237" fill="#7f53ff"/><rect x="1242" fill="#8950ff"/><rect x="1247" fill="#944dff"/><rect x="1252" fill="#9e4bff"/><rect x="1257" fill="#a848ff"/><rect x="1262" fill="#b346ff"/><rect x="1267" fill="#be43ff"/><rect x="1272" fill="#c840ff"/><rect x="1277" fill="#d33eff"/><rect x="1282" fill="#de3bff"/><rect x="1287" fill="#e938ff"/><rect x="1292" fill="#f435ff"/><rect x="1297" fill="#ff33ff"/><rect x="1302" fill="#ff2ef4"/><rect x="1307" fill="#ff29ea"/><rect x="1312" fill="#ff25e1"/><rect x="1317" fill="#ff21d8"/><rect x="1322" fill="#ff1ed0"/><rect x="1327" fill="#ff1ac9"/><rect x="1332" fill="#ff17c2"/><rect x="1337" fill="#ff14bb"/><rect x="1342" fill="#ff12b5"/><rect x="1347" fill="#ff0faf"/><rect x="1352" fill="#ff0caa"/><rect x="1357" fill="#ff0aa5"/><rect x="1362" fill="#ff08a0"/><rect x="1367" fill="#ff069b"/><rect x="1372" fill="#ff0497"/><rect x="1377" fill="#ff0292"/><rect x="1382" fill="#ff008e"/><rect x="1387" fill="#ff008b"/><rect x="1392" fill="#ff0087"/><rect x="1397" fill="#ff0083"/><rect x="1402" fill="#ff0080"/><rect x="1407" fill="#ff007d"/></g><g transform="translate(0 302)"><rect x="1157" fill="#0073ff"/><rect x="1162" fill="#0071ff"/><rect x="1167" fill="#006eff"/><rect x="1172" fill="#006cff"/><rect x="1177" fill="#076aff"/><rect x="1182" fill="#1067ff"/><rect x="1187" fill="#1965ff"/><rect x="1192" fill="#2363ff"/><rect x="1197" fill="#2c60ff"/><rect x="1202" fill="#355eff"/><rect x="1207" fill="#3f5cff"/><rect x="1212" fill="#4859ff"/><rect x="1217" fill="#5257ff"/><rect x="1222" fill="#5c54ff"/><rect x="1227" fill="#6552ff"/><rect x="1232" fill="#6f4fff"/><rect x="1237" fill="#794dff"/><rect x="1242" fill="#834bff"/><rect x="1247" fill="#8d48ff"/><rect x="1252" fill="#9745ff"/><rect x="1257" fill="#a143ff"/><rect x="1262" fill="#ab40ff"/><rect x="1267" fill="#b53eff"/><rect x="1272" fill="#c03bff"/><rect x="1277" fill="#ca39ff"/><rect x="1282" fill="#d536ff"/><rect x="1287" fill="#df33ff"/><rect x="1292" fill="#ea31ff"/><rect x="1297" fill="#f42eff"/><rect x="1302" fill="#ff2bff"/><rect x="1307" fill="#ff27f5"/><rect x="1312" fill="#ff23eb"/><rect x="1317" fill="#ff1fe2"/><rect x="1322" fill="#ff1bda"/><rect x="1327" fill="#ff18d2"/><rect x="1332" fill="#ff15cb"/><rect x="1337" fill="#ff12c4"/><rect x="1342" fill="#ff10bd"/><rect x="1347" fill="#ff0db7"/><rect x="1352" fill="#ff0bb1"/><rect x="1357" fill="#ff08ac"/><rect x="1362" fill="#ff06a7"/><rect x="1367" fill="#ff04a2"/><rect x="1372" fill="#ff029d"/><rect x="1377" fill="#ff0099"/><rect x="1382" fill="#ff0095"/><rect x="1387" fill="#ff0091"/><rect x="1392" fill="#ff008d"/><rect x="1397" fill="#ff0089"/><rect x="1402" fill="#ff0086"/></g><g transform="translate(0 307)"><rect x="1157" fill="#006dff"/><rect x="1162" fill="#006bff"/><rect x="1167" fill="#0068ff"/><rect x="1172" fill="#0066ff"/><rect x="1177" fill="#0564ff"/><rect x="1182" fill="#0e62ff"/><rect x="1187" fill="#175fff"/><rect x="1192" fill="#205dff"/><rect x="1197" fill="#295bff"/><rect x="1202" fill="#3258ff"/><rect x="1207" fill="#3b56ff"/><rect x="1212" fill="#4454ff"/><rect x="1217" fill="#4e51ff"/><rect x="1222" fill="#574fff"/><rect x="1227" fill="#604dff"/><rect x="1232" fill="#6a4aff"/><rect x="1237" fill="#7348ff"/><rect x="1242" fill="#7d45ff"/><rect x="1247" fill="#8743ff"/><rect x="1252" fill="#9040ff"/><rect x="1257" fill="#9a3eff"/><rect x="1262" fill="#a43cff"/><rect x="1267" fill="#ae39ff"/><rect x="1272" fill="#b836ff"/><rect x="1277" fill="#c234ff"/><rect x="1282" fill="#cc31ff"/><rect x="1287" fill="#d62fff"/><rect x="1292" fill="#e02cff"/><rect x="1297" fill="#ea2aff"/><rect x="1302" fill="#f527ff"/><rect x="1307" fill="#ff24ff"/><rect x="1312" fill="#ff20f5"/><rect x="1317" fill="#ff1dec"/><rect x="1322" fill="#ff19e3"/><rect x="1327" fill="#ff16db"/><rect x="1332" fill="#ff13d3"/><rect x="1337" fill="#ff10cc"/><rect x="1342" fill="#ff0dc5"/><rect x="1347" fill="#ff0bbf"/><rect x="1352" fill="#ff09b9"/><rect x="1357" fill="#ff06b3"/><rect x="1362" fill="#ff04ae"/><rect x="1367" fill="#ff02a9"/><rect x="1372" fill="#ff00a4"/><rect x="1377" fill="#ff009f"/><rect x="1382" fill="#ff009b"/><rect x="1387" fill="#ff0097"/><rect x="1392" fill="#ff0093"/><rect x="1397" fill="#ff008f"/></g><g transform="translate(0 312)"><rect x="1157" fill="#0067ff"/><rect x="1162" fill="#0065ff"/><rect x="1167" fill="#0063ff"/><rect x="1172" fill="#0060ff"/><rect x="1177" fill="#045eff"/><rect x="1182" fill="#0c5cff"/><rect x="1187" fill="#155aff"/><rect x="1192" fill="#1e58ff"/><rect x="1197" fill="#2655ff"/><rect x="1202" fill="#2f53ff"/><rect x="1207" fill="#3851ff"/><rect x="1212" fill="#414fff"/><rect x="1217" fill="#4a4cff"/><rect x="1222" fill="#534aff"/><rect x="1227" fill="#5c48ff"/><rect x="1232" fill="#6545ff"/><rect x="1237" fill="#6e43ff"/><rect x="1242" fill="#7741ff"/><rect x="1247" fill="#813eff"/><rect x="1252" fill="#8a3cff"/><rect x="1257" fill="#9439ff"/><rect x="1262" fill="#9d37ff"/><rect x="1267" fill="#a735ff"/><rect x="1272" fill="#b032ff"/><rect x="1277" fill="#ba30ff"/><rect x="1282" fill="#c32dff"/><rect x="1287" fill="#cd2bff"/><rect x="1292" fill="#d728ff"/><rect x="1297" fill="#e126ff"/><rect x="1302" fill="#eb23ff"/><rect x="1307" fill="#f521ff"/><rect x="1312" fill="#ff1eff"/><rect x="1317" fill="#ff1af5"/><rect x="1322" fill="#ff17ec"/><rect x="1327" fill="#ff14e4"/><rect x="1332" fill="#ff11dc"/><rect x="1337" fill="#ff0ed4"/><rect x="1342" fill="#ff0bcd"/><rect x="1347" fill="#ff09c7"/><rect x="1352" fill="#ff07c0"/><rect x="1357" fill="#ff04ba"/><rect x="1362" fill="#ff02b5"/><rect x="1367" fill="#ff00b0"/><rect x="1372" fill="#ff00ab"/><rect x="1377" fill="#ff00a6"/><rect x="1382" fill="#ff00a1"/><rect x="1387" fill="#ff009d"/><rect x="1392" fill="#ff0099"/></g><g transform="translate(0 317)"><rect x="1157" fill="#0062ff"/><rect x="1162" fill="#005fff"/><rect x="1167" fill="#005dff"/><rect x="1172" fill="#005bff"/><rect x="1177" fill="#0259ff"/><rect x="1182" fill="#0a57ff"/><rect x="1187" fill="#1355ff"/><rect x="1192" fill="#1b53ff"/><rect x="1197" fill="#2450ff"/><rect x="1202" fill="#2c4eff"/><rect x="1207" fill="#354cff"/><rect x="1212" fill="#3d4aff"/><rect x="1217" fill="#4648ff"/><rect x="1222" fill="#4f45ff"/><rect x="1227" fill="#5843ff"/><rect x="1232" fill="#6141ff"/><rect x="1237" fill="#693eff"/><rect x="1242" fill="#723cff"/><rect x="1247" fill="#7b3aff"/><rect x="1252" fill="#8437ff"/><rect x="1257" fill="#8d35ff"/><rect x="1262" fill="#9733ff"/><rect x="1267" fill="#a030ff"/><rect x="1272" fill="#a92eff"/><rect x="1277" fill="#b22cff"/><rect x="1282" fill="#bc29ff"/><rect x="1287" fill="#c527ff"/><rect x="1292" fill="#cf24ff"/><rect x="1297" fill="#d822ff"/><rect x="1302" fill="#e21fff"/><rect x="1307" fill="#eb1dff"/><rect x="1312" fill="#f51aff"/><rect x="1317" fill="#ff18ff"/><rect x="1322" fill="#ff15f6"/><rect x="1327" fill="#ff11ed"/><rect x="1332" fill="#ff0fe4"/><rect x="1337" fill="#ff0cdd"/><rect x="1342" fill="#ff09d5"/><rect x="1347" fill="#ff07ce"/><rect x="1352" fill="#ff05c8"/><rect x="1357" fill="#ff02c2"/><rect x="1362" fill="#ff00bc"/><rect x="1367" fill="#ff00b7"/><rect x="1372" fill="#ff00b1"/><rect x="1377" fill="#ff00ac"/><rect x="1382" fill="#ff00a8"/><rect x="1387" fill="#ff00a3"/></g><g transform="translate(0 322)"><rect x="1157" fill="#005cff"/><rect x="1162" fill="#005aff"/><rect x="1167" fill="#0058ff"/><rect x="1172" fill="#0056ff"/><rect x="1177" fill="#0154ff"/><rect x="1182" fill="#0952ff"/><rect x="1187" fill="#1150ff"/><rect x="1192" fill="#194eff"/><rect x="1197" fill="#214cff"/><rect x="1202" fill="#2a4aff"/><rect x="1207" fill="#3247ff"/><rect x="1212" fill="#3a45ff"/><rect x="1217" fill="#4343ff"/><rect x="1222" fill="#4b41ff"/><rect x="1227" fill="#543fff"/><rect x="1232" fill="#5c3cff"/><rect x="1237" fill="#653aff"/><rect x="1242" fill="#6d38ff"/><rect x="1247" fill="#7636ff"/><rect x="1252" fill="#7f33ff"/><rect x="1257" fill="#8831ff"/><rect x="1262" fill="#912fff"/><rect x="1267" fill="#992dff"/><rect x="1272" fill="#a22aff"/><rect x="1277" fill="#ab28ff"/><rect x="1282" fill="#b426ff"/><rect x="1287" fill="#be23ff"/><rect x="1292" fill="#c721ff"/><rect x="1297" fill="#d01eff"/><rect x="1302" fill="#d91cff"/><rect x="1307" fill="#e31aff"/><rect x="1312" fill="#ec17ff"/><rect x="1317" fill="#f515ff"/><rect x="1322" fill="#ff12ff"/><rect x="1327" fill="#ff0ff6"/><rect x="1332" fill="#ff0ced"/><rect x="1337" fill="#ff0ae5"/><rect x="1342" fill="#ff07de"/><rect x="1347" fill="#ff05d6"/><rect x="1352" fill="#ff03d0"/><rect x="1357" fill="#ff00c9"/><rect x="1362" fill="#ff00c3"/><rect x="1367" fill="#ff00be"/><rect x="1372" fill="#ff00b8"/><rect x="1377" fill="#ff00b3"/><rect x="1382" fill="#ff00ae"/></g><g transform="translate(0 327)"><rect x="1162" fill="#0056ff"/><rect x="1167" fill="#0054ff"/><rect x="1172" fill="#0052ff"/><rect x="1177" fill="#0050ff"/><rect x="1182" fill="#074dff"/><rect x="1187" fill="#0f4bff"/><rect x="1192" fill="#1749ff"/><rect x="1197" fill="#1f47ff"/><rect x="1202" fill="#2745ff"/><rect x="1207" fill="#2f43ff"/><rect x="1212" fill="#3741ff"/><rect x="1217" fill="#3f3fff"/><rect x="1222" fill="#483dff"/><rect x="1227" fill="#503bff"/><rect x="1232" fill="#5838ff"/><rect x="1237" fill="#6136ff"/><rect x="1242" fill="#6934ff"/><rect x="1247" fill="#7132ff"/><rect x="1252" fill="#7a30ff"/><rect x="1257" fill="#822dff"/><rect x="1262" fill="#8b2bff"/><rect x="1267" fill="#9429ff"/><rect x="1272" fill="#9c27ff"/><rect x="1277" fill="#a524ff"/><rect x="1282" fill="#ae22ff"/><rect x="1287" fill="#b620ff"/><rect x="1292" fill="#bf1dff"/><rect x="1297" fill="#c81bff"/><rect x="1302" fill="#d119ff"/><rect x="1307" fill="#da16ff"/><rect x="1312" fill="#e314ff"/><rect x="1317" fill="#ec12ff"/><rect x="1322" fill="#f60fff"/><rect x="1327" fill="#ff0dff"/><rect x="1332" fill="#ff0af6"/><rect x="1337" fill="#ff07ee"/><rect x="1342" fill="#ff05e6"/><rect x="1347" fill="#ff03de"/><rect x="1352" fill="#ff00d7"/><rect x="1357" fill="#ff00d1"/><rect x="1362" fill="#ff00cb"/><rect x="1367" fill="#ff00c5"/><rect x="1372" fill="#ff00bf"/><rect x="1377" fill="#ff00ba"/></g><g transform="translate(0 332)"><rect x="1162" fill="#0051ff"/><rect x="1167" fill="#004fff"/><rect x="1172" fill="#004dff"/><rect x="1177" fill="#004bff"/><rect x="1182" fill="#0649ff"/><rect x="1187" fill="#0e47ff"/><rect x="1192" fill="#1545ff"/><rect x="1197" fill="#1d43ff"/><rect x="1202" fill="#2541ff"/><rect x="1207" fill="#2d3fff"/><rect x="1212" fill="#343dff"/><rect x="1217" fill="#3c3bff"/><rect x="1222" fill="#4439ff"/><rect x="1227" fill="#4c37ff"/><rect x="1232" fill="#5435ff"/><rect x="1237" fill="#5c32ff"/><rect x="1242" fill="#6530ff"/><rect x="1247" fill="#6d2eff"/><rect x="1252" fill="#752cff"/><rect x="1257" fill="#7d2aff"/><rect x="1262" fill="#8628ff"/><rect x="1267" fill="#8e25ff"/><rect x="1272" fill="#9623ff"/><rect x="1277" fill="#9f21ff"/><rect x="1282" fill="#a71fff"/><rect x="1287" fill="#b01cff"/><rect x="1292" fill="#b81aff"/><rect x="1297" fill="#c118ff"/><rect x="1302" fill="#ca16ff"/><rect x="1307" fill="#d213ff"/><rect x="1312" fill="#db11ff"/><rect x="1317" fill="#e40fff"/><rect x="1322" fill="#ed0cff"/><rect x="1327" fill="#f60aff"/><rect x="1332" fill="#ff08ff"/><rect x="1337" fill="#ff05f6"/><rect x="1342" fill="#ff03ee"/><rect x="1347" fill="#ff01e7"/><rect x="1352" fill="#ff00df"/><rect x="1357" fill="#ff00d8"/><rect x="1362" fill="#ff00d2"/><rect x="1367" fill="#ff00cc"/><rect x="1372" fill="#ff00c6"/></g><g transform="translate(0 337)"><rect x="1162" fill="#004dff"/><rect x="1167" fill="#004bff"/><rect x="1172" fill="#0049ff"/><rect x="1177" fill="#0047ff"/><rect x="1182" fill="#0545ff"/><rect x="1187" fill="#0c43ff"/><rect x="1192" fill="#1341ff"/><rect x="1197" fill="#1b3fff"/><rect x="1202" fill="#233dff"/><rect x="1207" fill="#2a3bff"/><rect x="1212" fill="#3239ff"/><rect x="1217" fill="#3a37ff"/><rect x="1222" fill="#4135ff"/><rect x="1227" fill="#4933ff"/><rect x="1232" fill="#5131ff"/><rect x="1237" fill="#592fff"/><rect x="1242" fill="#612dff"/><rect x="1247" fill="#682bff"/><rect x="1252" fill="#7029ff"/><rect x="1257" fill="#7826ff"/><rect x="1262" fill="#8124ff"/><rect x="1267" fill="#8922ff"/><rect x="1272" fill="#9120ff"/><rect x="1277" fill="#991eff"/><rect x="1282" fill="#a11cff"/><rect x="1287" fill="#a919ff"/><rect x="1292" fill="#b217ff"/><rect x="1297" fill="#ba15ff"/><rect x="1302" fill="#c313ff"/><rect x="1307" fill="#cb11ff"/><rect x="1312" fill="#d40eff"/><rect x="1317" fill="#dc0cff"/><rect x="1322" fill="#e50aff"/><rect x="1327" fill="#ed08ff"/><rect x="1332" fill="#f605ff"/><rect x="1337" fill="#ff03ff"/><rect x="1342" fill="#ff01f7"/><rect x="1347" fill="#ff00ef"/><rect x="1352" fill="#ff00e7"/><rect x="1357" fill="#ff00e0"/><rect x="1362" fill="#ff00d9"/><rect x="1367" fill="#ff00d3"/></g><g transform="translate(0 342)"><rect x="1162" fill="#0049ff"/><rect x="1167" fill="#0047ff"/><rect x="1172" fill="#0045ff"/><rect x="1177" fill="#0043ff"/><rect x="1182" fill="#0341ff"/><rect x="1187" fill="#0a3fff"/><rect x="1192" fill="#123dff"/><rect x="1197" fill="#193bff"/><rect x="1202" fill="#2039ff"/><rect x="1207" fill="#2837ff"/><rect x="1212" fill="#2f35ff"/><rect x="1217" fill="#3734ff"/><rect x="1222" fill="#3e32ff"/><rect x="1227" fill="#4630ff"/><rect x="1232" fill="#4d2dff"/><rect x="1237" fill="#552bff"/><rect x="1242" fill="#5d29ff"/><rect x="1247" fill="#6427ff"/><rect x="1252" fill="#6c25ff"/><rect x="1257" fill="#7423ff"/><rect x="1262" fill="#7c21ff"/><rect x="1267" fill="#841fff"/><rect x="1272" fill="#8c1dff"/><rect x="1277" fill="#941bff"/><rect x="1282" fill="#9c19ff"/><rect x="1287" fill="#a417ff"/><rect x="1292" fill="#ac14ff"/><rect x="1297" fill="#b412ff"/><rect x="1302" fill="#bc10ff"/><rect x="1307" fill="#c40eff"/><rect x="1312" fill="#cc0cff"/><rect x="1317" fill="#d50aff"/><rect x="1322" fill="#dd07ff"/><rect x="1327" fill="#e505ff"/><rect x="1332" fill="#ee03ff"/><rect x="1337" fill="#f601ff"/><rect x="1342" fill="#ff00ff"/><rect x="1347" fill="#ff00f7"/><rect x="1352" fill="#ff00ef"/><rect x="1357" fill="#ff00e8"/><rect x="1362" fill="#ff00e1"/></g><g transform="translate(0 347)"><rect x="1162" fill="#0045ff"/><rect x="1167" fill="#0043ff"/><rect x="1172" fill="#0041ff"/><rect x="1177" fill="#003fff"/><rect x="1182" fill="#023eff"/><rect x="1187" fill="#093cff"/><rect x="1192" fill="#103aff"/><rect x="1197" fill="#1738ff"/><rect x="1202" fill="#1e36ff"/><rect x="1207" fill="#2634ff"/><rect x="1212" fill="#2d32ff"/><rect x="1217" fill="#3430ff"/><rect x="1222" fill="#3b2eff"/><rect x="1227" fill="#432cff"/><rect x="1232" fill="#4a2aff"/><rect x="1237" fill="#5228ff"/><rect x="1242" fill="#5926ff"/><rect x="1247" fill="#6124ff"/><rect x="1252" fill="#6822ff"/><rect x="1257" fill="#7020ff"/><rect x="1262" fill="#771eff"/><rect x="1267" fill="#7f1cff"/><rect x="1272" fill="#871aff"/><rect x="1277" fill="#8e18ff"/><rect x="1282" fill="#9616ff"/><rect x="1287" fill="#9e14ff"/><rect x="1292" fill="#a612ff"/><rect x="1297" fill="#ae10ff"/><rect x="1302" fill="#b60eff"/><rect x="1307" fill="#bd0bff"/><rect x="1312" fill="#c509ff"/><rect x="1317" fill="#ce07ff"/><rect x="1322" fill="#d605ff"/><rect x="1327" fill="#de03ff"/><rect x="1332" fill="#e601ff"/><rect x="1337" fill="#ee00ff"/><rect x="1342" fill="#f600ff"/><rect x="1347" fill="#ff00ff"/><rect x="1352" fill="#ff00f7"/><rect x="1357" fill="#ff00f0"/></g><g transform="translate(0 352)"><rect x="1162" fill="#0041ff"/><rect x="1167" fill="#0040ff"/><rect x="1172" fill="#003eff"/><rect x="1177" fill="#003cff"/><rect x="1182" fill="#013aff"/><rect x="1187" fill="#0838ff"/><rect x="1192" fill="#0f36ff"/><rect x="1197" fill="#1634ff"/><rect x="1202" fill="#1d33ff"/><rect x="1207" fill="#2431ff"/><rect x="1212" fill="#2b2fff"/><rect x="1217" fill="#322dff"/><rect x="1222" fill="#392bff"/><rect x="1227" fill="#4029ff"/><rect x="1232" fill="#4727ff"/><rect x="1237" fill="#4e25ff"/><rect x="1242" fill="#5623ff"/><rect x="1247" fill="#5d21ff"/><rect x="1252" fill="#641fff"/><rect x="1257" fill="#6c1dff"/><rect x="1262" fill="#731bff"/><rect x="1267" fill="#7a19ff"/><rect x="1272" fill="#8217ff"/><rect x="1277" fill="#8915ff"/><rect x="1282" fill="#9113ff"/><rect x="1287" fill="#9911ff"/><rect x="1292" fill="#a00fff"/><rect x="1297" fill="#a80dff"/><rect x="1302" fill="#b00bff"/><rect x="1307" fill="#b709ff"/><rect x="1312" fill="#bf07ff"/><rect x="1317" fill="#c705ff"/><rect x="1322" fill="#cf03ff"/><rect x="1327" fill="#d701ff"/><rect x="1332" fill="#df00ff"/><rect x="1337" fill="#e600ff"/><rect x="1342" fill="#ee00ff"/><rect x="1347" fill="#f700ff"/><rect x="1352" fill="#ff00ff"/></g><g transform="translate(0 357)"><rect x="1162" fill="#003eff"/><rect x="1167" fill="#003cff"/><rect x="1172" fill="#003aff"/><rect x="1177" fill="#0039ff"/><rect x="1182" fill="#0037ff"/><rect x="1187" fill="#0635ff"/><rect x="1192" fill="#0d33ff"/><rect x="1197" fill="#1431ff"/><rect x="1202" fill="#1b2fff"/><rect x="1207" fill="#222eff"/><rect x="1212" fill="#282cff"/><rect x="1217" fill="#2f2aff"/><rect x="1222" fill="#3628ff"/><rect x="1227" fill="#3d26ff"/><rect x="1232" fill="#4424ff"/><rect x="1237" fill="#4b22ff"/><rect x="1242" fill="#5220ff"/><rect x="1247" fill="#591fff"/><rect x="1252" fill="#611dff"/><rect x="1257" fill="#681bff"/><rect x="1262" fill="#6f19ff"/><rect x="1267" fill="#7617ff"/><rect x="1272" fill="#7d15ff"/><rect x="1277" fill="#8513ff"/><rect x="1282" fill="#8c11ff"/><rect x="1287" fill="#940fff"/><rect x="1292" fill="#9b0dff"/><rect x="1297" fill="#a20bff"/><rect x="1302" fill="#aa09ff"/><rect x="1307" fill="#b107ff"/><rect x="1312" fill="#b905ff"/><rect x="1317" fill="#c103ff"/><rect x="1322" fill="#c801ff"/><rect x="1327" fill="#d000ff"/><rect x="1332" fill="#d800ff"/><rect x="1337" fill="#df00ff"/><rect x="1342" fill="#e700ff"/><rect x="1347" fill="#ef00ff"/></g><g transform="translate(0 362)"><rect x="1167" fill="#0039ff"/><rect x="1172" fill="#0037ff"/><rect x="1177" fill="#0035ff"/><rect x="1182" fill="#0034ff"/><rect x="1187" fill="#0532ff"/><rect x="1192" fill="#0c30ff"/><rect x="1197" fill="#122eff"/><rect x="1202" fill="#192cff"/><rect x="1207" fill="#202bff"/><rect x="1212" fill="#2629ff"/><rect x="1217" fill="#2d27ff"/><rect x="1222" fill="#3425ff"/><rect x="1227" fill="#3b23ff"/><rect x="1232" fill="#4221ff"/><rect x="1237" fill="#4820ff"/><rect x="1242" fill="#4f1eff"/><rect x="1247" fill="#561cff"/><rect x="1252" fill="#5d1aff"/><rect x="1257" fill="#6418ff"/><rect x="1262" fill="#6b16ff"/><rect x="1267" fill="#7214ff"/><rect x="1272" fill="#7912ff"/><rect x="1277" fill="#8010ff"/><rect x="1282" fill="#880fff"/><rect x="1287" fill="#8f0dff"/><rect x="1292" fill="#960bff"/><rect x="1297" fill="#9d09ff"/><rect x="1302" fill="#a407ff"/><rect x="1307" fill="#ac05ff"/><rect x="1312" fill="#b303ff"/><rect x="1317" fill="#ba01ff"/><rect x="1322" fill="#c200ff"/><rect x="1327" fill="#c900ff"/><rect x="1332" fill="#d100ff"/><rect x="1337" fill="#d800ff"/><rect x="1342" fill="#e000ff"/></g><g transform="translate(0 367)"><rect x="1167" fill="#0036ff"/><rect x="1172" fill="#0034ff"/><rect x="1177" fill="#0032ff"/><rect x="1182" fill="#0031ff"/><rect x="1187" fill="#042fff"/><rect x="1192" fill="#0a2dff"/><rect x="1197" fill="#112bff"/><rect x="1202" fill="#172aff"/><rect x="1207" fill="#1e28ff"/><rect x="1212" fill="#2426ff"/><rect x="1217" fill="#2b24ff"/><rect x="1222" fill="#3222ff"/><rect x="1227" fill="#3821ff"/><rect x="1232" fill="#3f1fff"/><rect x="1237" fill="#461dff"/><rect x="1242" fill="#4c1bff"/><rect x="1247" fill="#5319ff"/><rect x="1252" fill="#5a17ff"/><rect x="1257" fill="#6116ff"/><rect x="1262" fill="#6714ff"/><rect x="1267" fill="#6e12ff"/><rect x="1272" fill="#7510ff"/><rect x="1277" fill="#7c0eff"/><rect x="1282" fill="#830cff"/><rect x="1287" fill="#8a0aff"/><rect x="1292" fill="#9108ff"/><rect x="1297" fill="#9807ff"/><rect x="1302" fill="#9f05ff"/><rect x="1307" fill="#a603ff"/><rect x="1312" fill="#ae01ff"/><rect x="1317" fill="#b500ff"/><rect x="1322" fill="#bc00ff"/><rect x="1327" fill="#c300ff"/><rect x="1332" fill="#cb00ff"/><rect x="1337" fill="#d200ff"/></g><g transform="translate(0 372)"><rect x="1167" fill="#0033ff"/><rect x="1172" fill="#0031ff"/><rect x="1177" fill="#002fff"/><rect x="1182" fill="#002eff"/><rect x="1187" fill="#032cff"/><rect x="1192" fill="#092aff"/><rect x="1197" fill="#1029ff"/><rect x="1202" fill="#1627ff"/><rect x="1207" fill="#1c25ff"/><rect x="1212" fill="#2323ff"/><rect x="1217" fill="#2922ff"/><rect x="1222" fill="#2f20ff"/><rect x="1227" fill="#361eff"/><rect x="1232" fill="#3c1cff"/><rect x="1237" fill="#431bff"/><rect x="1242" fill="#4919ff"/><rect x="1247" fill="#5017ff"/><rect x="1252" fill="#5715ff"/><rect x="1257" fill="#5d13ff"/><rect x="1262" fill="#6411ff"/><rect x="1267" fill="#6b10ff"/><rect x="1272" fill="#710eff"/><rect x="1277" fill="#780cff"/><rect x="1282" fill="#7f0aff"/><rect x="1287" fill="#8608ff"/><rect x="1292" fill="#8d06ff"/><rect x="1297" fill="#9305ff"/><rect x="1302" fill="#9a03ff"/><rect x="1307" fill="#a101ff"/><rect x="1312" fill="#a800ff"/><rect x="1317" fill="#af00ff"/><rect x="1322" fill="#b600ff"/><rect x="1327" fill="#bd00ff"/><rect x="1332" fill="#c500ff"/></g><g transform="translate(0 377)"><rect x="1167" fill="#0030ff"/><rect x="1172" fill="#002eff"/><rect x="1177" fill="#002dff"/><rect x="1182" fill="#002bff"/><rect x="1187" fill="#0229ff"/><rect x="1192" fill="#0828ff"/><rect x="1197" fill="#0e26ff"/><rect x="1202" fill="#1424ff"/><rect x="1207" fill="#1b23ff"/><rect x="1212" fill="#2121ff"/><rect x="1217" fill="#271fff"/><rect x="1222" fill="#2d1dff"/><rect x="1227" fill="#341cff"/><rect x="1232" fill="#3a1aff"/><rect x="1237" fill="#4018ff"/><rect x="1242" fill="#4716ff"/><rect x="1247" fill="#4d15ff"/><rect x="1252" fill="#5413ff"/><rect x="1257" fill="#5a11ff"/><rect x="1262" fill="#610fff"/><rect x="1267" fill="#670eff"/><rect x="1272" fill="#6e0cff"/><rect x="1277" fill="#740aff"/><rect x="1282" fill="#7b08ff"/><rect x="1287" fill="#8206ff"/><rect x="1292" fill="#8804ff"/><rect x="1297" fill="#8f03ff"/><rect x="1302" fill="#9601ff"/><rect x="1307" fill="#9d00ff"/><rect x="1312" fill="#a300ff"/><rect x="1317" fill="#aa00ff"/><rect x="1322" fill="#b100ff"/><rect x="1327" fill="#b800ff"/></g><g transform="translate(0 382)"><rect x="1167" fill="#002dff"/><rect x="1172" fill="#002cff"/><rect x="1177" fill="#002aff"/><rect x="1182" fill="#0028ff"/><rect x="1187" fill="#0127ff"/><rect x="1192" fill="#0725ff"/><rect x="1197" fill="#0d23ff"/><rect x="1202" fill="#1322ff"/><rect x="1207" fill="#1920ff"/><rect x="1212" fill="#1f1eff"/><rect x="1217" fill="#251dff"/><rect x="1222" fill="#2b1bff"/><rect x="1227" fill="#3219ff"/><rect x="1232" fill="#3818ff"/><rect x="1237" fill="#3e16ff"/><rect x="1242" fill="#4414ff"/><rect x="1247" fill="#4a12ff"/><rect x="1252" fill="#5111ff"/><rect x="1257" fill="#570fff"/><rect x="1262" fill="#5d0dff"/><rect x="1267" fill="#640bff"/><rect x="1272" fill="#6a0aff"/><rect x="1277" fill="#7108ff"/><rect x="1282" fill="#7706ff"/><rect x="1287" fill="#7e04ff"/><rect x="1292" fill="#8403ff"/><rect x="1297" fill="#8b01ff"/><rect x="1302" fill="#9100ff"/><rect x="1307" fill="#9800ff"/><rect x="1312" fill="#9f00ff"/><rect x="1317" fill="#a500ff"/><rect x="1322" fill="#ac00ff"/><rect x="1327" fill="#b300ff"/></g><g transform="translate(0 387)"><rect x="1167" fill="#002bff"/><rect x="1172" fill="#0029ff"/><rect x="1177" fill="#0027ff"/><rect x="1182" fill="#0026ff"/><rect x="1187" fill="#0024ff"/><rect x="1192" fill="#0623ff"/><rect x="1197" fill="#0c21ff"/><rect x="1202" fill="#121fff"/><rect x="1207" fill="#181eff"/><rect x="1212" fill="#1d1cff"/><rect x="1217" fill="#231aff"/><rect x="1222" fill="#2919ff"/><rect x="1227" fill="#3017ff"/><rect x="1232" fill="#3615ff"/><rect x="1237" fill="#3c14ff"/><rect x="1242" fill="#4212ff"/><rect x="1247" fill="#4810ff"/><rect x="1252" fill="#4e0fff"/><rect x="1257" fill="#540dff"/><rect x="1262" fill="#5a0bff"/><rect x="1267" fill="#6109ff"/><rect x="1272" fill="#6708ff"/><rect x="1277" fill="#6d06ff"/><rect x="1282" fill="#7404ff"/><rect x="1287" fill="#7a03ff"/><rect x="1292" fill="#8001ff"/><rect x="1297" fill="#8700ff"/><rect x="1302" fill="#8d00ff"/><rect x="1307" fill="#9300ff"/><rect x="1312" fill="#9a00ff"/><rect x="1317" fill="#a000ff"/><rect x="1322" fill="#a700ff"/></g><g transform="translate(0 392)"><rect x="1172" fill="#0027ff"/><rect x="1177" fill="#0025ff"/><rect x="1182" fill="#0023ff"/><rect x="1187" fill="#0022ff"/><rect x="1192" fill="#0520ff"/><rect x="1197" fill="#0a1fff"/><rect x="1202" fill="#101dff"/><rect x="1207" fill="#161bff"/><rect x="1212" fill="#1c1aff"/><rect x="1217" fill="#2218ff"/><rect x="1222" fill="#2817ff"/><rect x="1227" fill="#2e15ff"/><rect x="1232" fill="#3313ff"/><rect x="1237" fill="#3912ff"/><rect x="1242" fill="#3f10ff"/><rect x="1247" fill="#450eff"/><rect x="1252" fill="#4b0dff"/><rect x="1257" fill="#510bff"/><rect x="1262" fill="#5809ff"/><rect x="1267" fill="#5e08ff"/><rect x="1272" fill="#6406ff"/><rect x="1277" fill="#6a04ff"/><rect x="1282" fill="#7003ff"/><rect x="1287" fill="#7601ff"/><rect x="1292" fill="#7c00ff"/><rect x="1297" fill="#8300ff"/><rect x="1302" fill="#8900ff"/><rect x="1307" fill="#8f00ff"/><rect x="1312" fill="#9600ff"/><rect x="1317" fill="#9c00ff"/></g><g transform="translate(0 397)"><rect x="1172" fill="#0024ff"/><rect x="1177" fill="#0023ff"/><rect x="1182" fill="#0021ff"/><rect x="1187" fill="#0020ff"/><rect x="1192" fill="#041eff"/><rect x="1197" fill="#091cff"/><rect x="1202" fill="#0f1bff"/><rect x="1207" fill="#1519ff"/><rect x="1212" fill="#1a18ff"/><rect x="1217" fill="#2016ff"/><rect x="1222" fill="#2614ff"/><rect x="1227" fill="#2c13ff"/><rect x="1232" fill="#3111ff"/><rect x="1237" fill="#3710ff"/><rect x="1242" fill="#3d0eff"/><rect x="1247" fill="#430cff"/><rect x="1252" fill="#490bff"/><rect x="1257" fill="#4f09ff"/><rect x="1262" fill="#5507ff"/><rect x="1267" fill="#5b06ff"/><rect x="1272" fill="#6104ff"/><rect x="1277" fill="#6702ff"/><rect x="1282" fill="#6d01ff"/><rect x="1287" fill="#7300ff"/><rect x="1292" fill="#7900ff"/><rect x="1297" fill="#7f00ff"/><rect x="1302" fill="#8500ff"/><rect x="1307" fill="#8b00ff"/><rect x="1312" fill="#9100ff"/></g><g transform="translate(0 402)"><rect x="1172" fill="#0022ff"/><rect x="1177" fill="#0020ff"/><rect x="1182" fill="#001fff"/><rect x="1187" fill="#001dff"/><rect x="1192" fill="#031cff"/><rect x="1197" fill="#081aff"/><rect x="1202" fill="#0e19ff"/><rect x="1207" fill="#1317ff"/><rect x="1212" fill="#1916ff"/><rect x="1217" fill="#1f14ff"/><rect x="1222" fill="#2412ff"/><rect x="1227" fill="#2a11ff"/><rect x="1232" fill="#300fff"/><rect x="1237" fill="#350eff"/><rect x="1242" fill="#3b0cff"/><rect x="1247" fill="#410bff"/><rect x="1252" fill="#4609ff"/><rect x="1257" fill="#4c07ff"/><rect x="1262" fill="#5206ff"/><rect x="1267" fill="#5804ff"/><rect x="1272" fill="#5e02ff"/><rect x="1277" fill="#6401ff"/><rect x="1282" fill="#6a00ff"/><rect x="1287" fill="#6f00ff"/><rect x="1292" fill="#7500ff"/><rect x="1297" fill="#7b00ff"/><rect x="1302" fill="#8100ff"/><rect x="1307" fill="#8700ff"/></g><g transform="translate(0 407)"><rect x="1172" fill="#0020ff"/><rect x="1177" fill="#001eff"/><rect x="1182" fill="#001dff"/><rect x="1187" fill="#001bff"/><rect x="1192" fill="#021aff"/><rect x="1197" fill="#0718ff"/><rect x="1202" fill="#0d17ff"/><rect x="1207" fill="#1215ff"/><rect x="1212" fill="#1814ff"/><rect x="1217" fill="#1d12ff"/><rect x="1222" fill="#2311ff"/><rect x="1227" fill="#280fff"/><rect x="1232" fill="#2e0dff"/><rect x="1237" fill="#330cff"/><rect x="1242" fill="#390aff"/><rect x="1247" fill="#3f09ff"/><rect x="1252" fill="#4407ff"/><rect x="1257" fill="#4a06ff"/><rect x="1262" fill="#5004ff"/><rect x="1267" fill="#5502ff"/><rect x="1272" fill="#5b01ff"/><rect x="1277" fill="#6100ff"/><rect x="1282" fill="#6600ff"/><rect x="1287" fill="#6c00ff"/><rect x="1292" fill="#7200ff"/><rect x="1297" fill="#7800ff"/><rect x="1302" fill="#7e00ff"/></g><g transform="translate(0 412)"><rect x="1172" fill="#001eff"/><rect x="1177" fill="#001cff"/><rect x="1182" fill="#001bff"/><rect x="1187" fill="#0019ff"/><rect x="1192" fill="#0118ff"/><rect x="1197" fill="#0616ff"/><rect x="1202" fill="#0c15ff"/><rect x="1207" fill="#1113ff"/><rect x="1212" fill="#1612ff"/><rect x="1217" fill="#1c10ff"/><rect x="1222" fill="#210fff"/><rect x="1227" fill="#270dff"/><rect x="1232" fill="#2c0cff"/><rect x="1237" fill="#310aff"/><rect x="1242" fill="#3709ff"/><rect x="1247" fill="#3c07ff"/><rect x="1252" fill="#4206ff"/><rect x="1257" fill="#4704ff"/><rect x="1262" fill="#4d02ff"/><rect x="1267" fill="#5301ff"/><rect x="1272" fill="#5800ff"/><rect x="1277" fill="#5e00ff"/><rect x="1282" fill="#6400ff"/><rect x="1287" fill="#6900ff"/><rect x="1292" fill="#6f00ff"/><rect x="1297" fill="#7500ff"/></g><g transform="translate(0 417)"><rect x="1172" fill="#001cff"/><rect x="1177" fill="#001aff"/><rect x="1182" fill="#0019ff"/><rect x="1187" fill="#0017ff"/><rect x="1192" fill="#0016ff"/><rect x="1197" fill="#0514ff"/><rect x="1202" fill="#0b13ff"/><rect x="1207" fill="#1011ff"/><rect x="1212" fill="#1510ff"/><rect x="1217" fill="#1a0eff"/><rect x="1222" fill="#200dff"/><rect x="1227" fill="#250bff"/><rect x="1232" fill="#2a0aff"/><rect x="1237" fill="#3008ff"/><rect x="1242" fill="#3507ff"/><rect x="1247" fill="#3a05ff"/><rect x="1252" fill="#4004ff"/><rect x="1257" fill="#4502ff"/><rect x="1262" fill="#4b01ff"/><rect x="1267" fill="#5000ff"/><rect x="1272" fill="#5600ff"/><rect x="1277" fill="#5b00ff"/><rect x="1282" fill="#6100ff"/><rect x="1287" fill="#6600ff"/><rect x="1292" fill="#6c00ff"/></g><g transform="translate(0 422)"><rect x="1177" fill="#0018ff"/><rect x="1182" fill="#0017ff"/><rect x="1187" fill="#0015ff"/><rect x="1192" fill="#0014ff"/><rect x="1197" fill="#0413ff"/><rect x="1202" fill="#0911ff"/><rect x="1207" fill="#0f10ff"/><rect x="1212" fill="#140eff"/><rect x="1217" fill="#190dff"/><rect x="1222" fill="#1e0bff"/><rect x="1227" fill="#230aff"/><rect x="1232" fill="#2908ff"/><rect x="1237" fill="#2e07ff"/><rect x="1242" fill="#3305ff"/><rect x="1247" fill="#3804ff"/><rect x="1252" fill="#3e02ff"/><rect x="1257" fill="#4301ff"/><rect x="1262" fill="#4800ff"/><rect x="1267" fill="#4e00ff"/><rect x="1272" fill="#5300ff"/><rect x="1277" fill="#5900ff"/><rect x="1282" fill="#5e00ff"/><rect x="1287" fill="#6300ff"/></g><g transform="translate(0 427)"><rect x="1177" fill="#0016ff"/><rect x="1182" fill="#0015ff"/><rect x="1187" fill="#0014ff"/><rect x="1192" fill="#0012ff"/><rect x="1197" fill="#0311ff"/><rect x="1202" fill="#080fff"/><rect x="1207" fill="#0e0eff"/><rect x="1212" fill="#130cff"/><rect x="1217" fill="#180bff"/><rect x="1222" fill="#1d0aff"/><rect x="1227" fill="#2208ff"/><rect x="1232" fill="#2707ff"/><rect x="1237" fill="#2c05ff"/><rect x="1242" fill="#3104ff"/><rect x="1247" fill="#3702ff"/><rect x="1252" fill="#3c01ff"/><rect x="1257" fill="#4100ff"/><rect x="1262" fill="#4600ff"/><rect x="1267" fill="#4b00ff"/><rect x="1272" fill="#5100ff"/><rect x="1277" fill="#5600ff"/><rect x="1282" fill="#5b00ff"/></g><g transform="translate(0 432)"><rect x="1177" fill="#0015ff"/><rect x="1182" fill="#0013ff"/><rect x="1187" fill="#0012ff"/><rect x="1192" fill="#0010ff"/><rect x="1197" fill="#030fff"/><rect x="1202" fill="#080eff"/><rect x="1207" fill="#0c0cff"/><rect x="1212" fill="#110bff"/><rect x="1217" fill="#1609ff"/><rect x="1222" fill="#1b08ff"/><rect x="1227" fill="#2007ff"/><rect x="1232" fill="#2605ff"/><rect x="1237" fill="#2b04ff"/><rect x="1242" fill="#3002ff"/><rect x="1247" fill="#3501ff"/><rect x="1252" fill="#3a00ff"/><rect x="1257" fill="#3f00ff"/><rect x="1262" fill="#4400ff"/><rect x="1267" fill="#4900ff"/><rect x="1272" fill="#4e00ff"/><rect x="1277" fill="#5400ff"/></g><g transform="translate(0 437)"><rect x="1177" fill="#0013ff"/><rect x="1182" fill="#0012ff"/><rect x="1187" fill="#0010ff"/><rect x="1192" fill="#000fff"/><rect x="1197" fill="#020dff"/><rect x="1202" fill="#070cff"/><rect x="1207" fill="#0b0bff"/><rect x="1212" fill="#1009ff"/><rect x="1217" fill="#1508ff"/><rect x="1222" fill="#1a07ff"/><rect x="1227" fill="#1f05ff"/><rect x="1232" fill="#2404ff"/><rect x="1237" fill="#2902ff"/><rect x="1242" fill="#2e01ff"/><rect x="1247" fill="#3300ff"/><rect x="1252" fill="#3800ff"/><rect x="1257" fill="#3d00ff"/><rect x="1262" fill="#4200ff"/><rect x="1267" fill="#4700ff"/><rect x="1272" fill="#4c00ff"/></g><g transform="translate(0 442)"><rect x="1177" fill="#0011ff"/><rect x="1182" fill="#0010ff"/><rect x="1187" fill="#000fff"/><rect x="1192" fill="#000dff"/><rect x="1197" fill="#010cff"/><rect x="1202" fill="#060bff"/><rect x="1207" fill="#0b09ff"/><rect x="1212" fill="#0f08ff"/><rect x="1217" fill="#1406ff"/><rect x="1222" fill="#1905ff"/><rect x="1227" fill="#1e04ff"/><rect x="1232" fill="#2302ff"/><rect x="1237" fill="#2801ff"/><rect x="1242" fill="#2c00ff"/><rect x="1247" fill="#3100ff"/><rect x="1252" fill="#3600ff"/><rect x="1257" fill="#3b00ff"/><rect x="1262" fill="#4000ff"/><rect x="1267" fill="#4500ff"/></g><g transform="translate(0 447)"><rect x="1177" fill="#0010ff"/><rect x="1182" fill="#000eff"/><rect x="1187" fill="#000dff"/><rect x="1192" fill="#000cff"/><rect x="1197" fill="#000aff"/><rect x="1202" fill="#0509ff"/><rect x="1207" fill="#0a08ff"/><rect x="1212" fill="#0e06ff"/><rect x="1217" fill="#1305ff"/><rect x="1222" fill="#1804ff"/><rect x="1227" fill="#1d02ff"/><rect x="1232" fill="#2101ff"/><rect x="1237" fill="#2600ff"/><rect x="1242" fill="#2b00ff"/><rect x="1247" fill="#3000ff"/><rect x="1252" fill="#3500ff"/><rect x="1257" fill="#3900ff"/><rect x="1262" fill="#3e00ff"/></g><g transform="translate(0 452)"><rect x="1182" fill="#000dff"/><rect x="1187" fill="#000bff"/><rect x="1192" fill="#000aff"/><rect x="1197" fill="#0009ff"/><rect x="1202" fill="#0408ff"/><rect x="1207" fill="#0906ff"/><rect x="1212" fill="#0d05ff"/><rect x="1217" fill="#1204ff"/><rect x="1222" fill="#1702ff"/><rect x="1227" fill="#1b01ff"/><rect x="1232" fill="#2000ff"/><rect x="1237" fill="#2500ff"/><rect x="1242" fill="#2900ff"/><rect x="1247" fill="#2e00ff"/><rect x="1252" fill="#3300ff"/><rect x="1257" fill="#3800ff"/></g><g transform="translate(0 457)"><rect x="1182" fill="#000bff"/><rect x="1187" fill="#000aff"/><rect x="1192" fill="#0009ff"/><rect x="1197" fill="#0007ff"/><rect x="1202" fill="#0306ff"/><rect x="1207" fill="#0805ff"/><rect x="1212" fill="#0c04ff"/><rect x="1217" fill="#1102ff"/><rect x="1222" fill="#1501ff"/><rect x="1227" fill="#1a00ff"/><rect x="1232" fill="#1f00ff"/><rect x="1237" fill="#2300ff"/><rect x="1242" fill="#2800ff"/><rect x="1247" fill="#2d00ff"/><rect x="1252" fill="#3100ff"/></g><g transform="translate(0 462)"><rect x="1182" fill="#000aff"/><rect x="1187" fill="#0009ff"/><rect x="1192" fill="#0007ff"/><rect x="1197" fill="#0006ff"/><rect x="1202" fill="#0205ff"/><rect x="1207" fill="#0704ff"/><rect x="1212" fill="#0b02ff"/><rect x="1217" fill="#1001ff"/><rect x="1222" fill="#1400ff"/><rect x="1227" fill="#1900ff"/><rect x="1232" fill="#1d00ff"/><rect x="1237" fill="#2200ff"/><rect x="1242" fill="#2700ff"/><rect x="1247" fill="#2b00ff"/></g><g transform="translate(0 467)"><rect x="1182" fill="#0008ff"/><rect x="1187" fill="#0007ff"/><rect x="1192" fill="#0006ff"/><rect x="1197" fill="#0005ff"/><rect x="1202" fill="#0203ff"/><rect x="1207" fill="#0602ff"/><rect x="1212" fill="#0b01ff"/><rect x="1217" fill="#0f00ff"/><rect x="1222" fill="#1300ff"/><rect x="1227" fill="#1800ff"/><rect x="1232" fill="#1c00ff"/><rect x="1237" fill="#2100ff"/><rect x="1242" fill="#2500ff"/></g><g transform="translate(0 472)"><rect x="1182" fill="#0007ff"/><rect x="1187" fill="#0006ff"/><rect x="1192" fill="#0005ff"/><rect x="1197" fill="#0003ff"/><rect x="1202" fill="#0102ff"/><rect x="1207" fill="#0501ff"/><rect x="1212" fill="#0a00ff"/><rect x="1217" fill="#0e00ff"/><rect x="1222" fill="#1200ff"/><rect x="1227" fill="#1700ff"/><rect x="1232" fill="#1b00ff"/><rect x="1237" fill="#2000ff"/></g><g transform="translate(0 477)"><rect x="1182" fill="#0006ff"/><rect x="1187" fill="#0005ff"/><rect x="1192" fill="#0003ff"/><rect x="1197" fill="#0002ff"/><rect x="1202" fill="#0001ff"/><rect x="1207" fill="#0500ff"/><rect x="1212" fill="#0900ff"/><rect x="1217" fill="#0d00ff"/><rect x="1222" fill="#1100ff"/><rect x="1227" fill="#1600ff"/><rect x="1232" fill="#1a00ff"/></g><g transform="translate(0 482)"><rect x="1187" fill="#0003ff"/><rect x="1192" fill="#0002ff"/><rect x="1197" fill="#0001ff"/><rect x="1202" fill="#0000ff"/><rect x="1207" fill="#0400ff"/><rect x="1212" fill="#0800ff"/><rect x="1217" fill="#0c00ff"/><rect x="1222" fill="#1000ff"/><rect x="1227" fill="#1500ff"/></g><g transform="translate(0 487)"><rect x="1187" fill="#0002ff"/><rect x="1192" fill="#0001ff"/><rect x="1197" fill="#0000ff"/><rect x="1202" fill="#0000ff"/><rect x="1207" fill="#0300ff"/><rect x="1212" fill="#0700ff"/><rect x="1217" fill="#0b00ff"/><rect x="1222" fill="#1000ff"/></g><g transform="translate(0 492)"><rect x="1187" fill="#0001ff"/><rect x="1192" fill="#0000ff"/><rect x="1197" fill="#0000ff"/><rect x="1202" fill="#0000ff"/><rect x="1207" fill="#0200ff"/><rect x="1212" fill="#0600ff"/><rect x="1217" fill="#0b00ff"/></g></g></g></g><rect x="1018.0" y="121" width="638.7" height="491.5" fill="none" stroke="#8c8c8c" stroke-width="1.5"/><line x1="1018.0" y1="612.5" x2="1018.0" y2="618.5" stroke="#ccc" stroke-width="1.5"/><text x="1018.0" y="634" font-size="14" fill="#dcdcdc" text-anchor="middle" stroke="#dcdcdc" stroke-width="0.3">0</text><line x1="1012.0" y1="612.5" x2="1018.0" y2="612.5" stroke="#ccc" stroke-width="1.5"/><text x="1011.0" y="617.5" font-size="14" fill="#dcdcdc" text-anchor="end" stroke="#dcdcdc" stroke-width="0.3">0</text><line x1="1071.2" y1="612.5" x2="1071.2" y2="618.5" stroke="#ccc" stroke-width="1.5"/><text x="1071.2" y="634" font-size="14" fill="#dcdcdc" text-anchor="middle" stroke="#dcdcdc" stroke-width="0.3">0,05</text><line x1="1012.0" y1="571.6" x2="1018.0" y2="571.6" stroke="#ccc" stroke-width="1.5"/><text x="1011.0" y="576.6" font-size="14" fill="#dcdcdc" text-anchor="end" stroke="#dcdcdc" stroke-width="0.3">0,05</text><line x1="1124.5" y1="612.5" x2="1124.5" y2="618.5" stroke="#ccc" stroke-width="1.5"/><text x="1124.5" y="634" font-size="14" fill="#dcdcdc" text-anchor="middle" stroke="#dcdcdc" stroke-width="0.3">0,1</text><line x1="1012.0" y1="530.6" x2="1018.0" y2="530.6" stroke="#ccc" stroke-width="1.5"/><text x="1011.0" y="535.6" font-size="14" fill="#dcdcdc" text-anchor="end" stroke="#dcdcdc" stroke-width="0.3">0,1</text><line x1="1177.7" y1="612.5" x2="1177.7" y2="618.5" stroke="#ccc" stroke-width="1.5"/><text x="1177.7" y="634" font-size="14" fill="#dcdcdc" text-anchor="middle" stroke="#dcdcdc" stroke-width="0.3">0,15</text><line x1="1012.0" y1="489.7" x2="1018.0" y2="489.7" stroke="#ccc" stroke-width="1.5"/><text x="1011.0" y="494.7" font-size="14" fill="#dcdcdc" text-anchor="end" stroke="#dcdcdc" stroke-width="0.3">0,15</text><line x1="1230.9" y1="612.5" x2="1230.9" y2="618.5" stroke="#ccc" stroke-width="1.5"/><text x="1230.9" y="634" font-size="14" fill="#dcdcdc" text-anchor="middle" stroke="#dcdcdc" stroke-width="0.3">0,2</text><line x1="1012.0" y1="448.8" x2="1018.0" y2="448.8" stroke="#ccc" stroke-width="1.5"/><text x="1011.0" y="453.8" font-size="14" fill="#dcdcdc" text-anchor="end" stroke="#dcdcdc" stroke-width="0.3">0,2</text><line x1="1284.1" y1="612.5" x2="1284.1" y2="618.5" stroke="#ccc" stroke-width="1.5"/><text x="1284.1" y="634" font-size="14" fill="#dcdcdc" text-anchor="middle" stroke="#dcdcdc" stroke-width="0.3">0,25</text><line x1="1012.0" y1="407.8" x2="1018.0" y2="407.8" stroke="#ccc" stroke-width="1.5"/><text x="1011.0" y="412.8" font-size="14" fill="#dcdcdc" text-anchor="end" stroke="#dcdcdc" stroke-width="0.3">0,25</text><line x1="1337.3" y1="612.5" x2="1337.3" y2="618.5" stroke="#ccc" stroke-width="1.5"/><text x="1337.3" y="634" font-size="14" fill="#dcdcdc" text-anchor="middle" stroke="#dcdcdc" stroke-width="0.3">0,3</text><line x1="1012.0" y1="366.9" x2="1018.0" y2="366.9" stroke="#ccc" stroke-width="1.5"/><text x="1011.0" y="371.9" font-size="14" fill="#dcdcdc" text-anchor="end" stroke="#dcdcdc" stroke-width="0.3">0,3</text><line x1="1390.6" y1="612.5" x2="1390.6" y2="618.5" stroke="#ccc" stroke-width="1.5"/><text x="1390.6" y="634" font-size="14" fill="#dcdcdc" text-anchor="middle" stroke="#dcdcdc" stroke-width="0.3">0,35</text><line x1="1012.0" y1="326.0" x2="1018.0" y2="326.0" stroke="#ccc" stroke-width="1.5"/><text x="1011.0" y="331.0" font-size="14" fill="#dcdcdc" text-anchor="end" stroke="#dcdcdc" stroke-width="0.3">0,35</text><line x1="1443.8" y1="612.5" x2="1443.8" y2="618.5" stroke="#ccc" stroke-width="1.5"/><text x="1443.8" y="634" font-size="14" fill="#dcdcdc" text-anchor="middle" stroke="#dcdcdc" stroke-width="0.3">0,4</text><line x1="1012.0" y1="285.0" x2="1018.0" y2="285.0" stroke="#ccc" stroke-width="1.5"/><text x="1011.0" y="290.0" font-size="14" fill="#dcdcdc" text-anchor="end" stroke="#dcdcdc" stroke-width="0.3">0,4</text><line x1="1497.0" y1="612.5" x2="1497.0" y2="618.5" stroke="#ccc" stroke-width="1.5"/><text x="1497.0" y="634" font-size="14" fill="#dcdcdc" text-anchor="middle" stroke="#dcdcdc" stroke-width="0.3">0,45</text><line x1="1012.0" y1="244.1" x2="1018.0" y2="244.1" stroke="#ccc" stroke-width="1.5"/><text x="1011.0" y="249.1" font-size="14" fill="#dcdcdc" text-anchor="end" stroke="#dcdcdc" stroke-width="0.3">0,45</text><line x1="1550.2" y1="612.5" x2="1550.2" y2="618.5" stroke="#ccc" stroke-width="1.5"/><text x="1550.2" y="634" font-size="14" fill="#dcdcdc" text-anchor="middle" stroke="#dcdcdc" stroke-width="0.3">0,5</text><line x1="1012.0" y1="203.1" x2="1018.0" y2="203.1" stroke="#ccc" stroke-width="1.5"/><text x="1011.0" y="208.1" font-size="14" fill="#dcdcdc" text-anchor="end" stroke="#dcdcdc" stroke-width="0.3">0,5</text><line x1="1603.5" y1="612.5" x2="1603.5" y2="618.5" stroke="#ccc" stroke-width="1.5"/><text x="1603.5" y="634" font-size="14" fill="#dcdcdc" text-anchor="middle" stroke="#dcdcdc" stroke-width="0.3">0,55</text><line x1="1012.0" y1="162.2" x2="1018.0" y2="162.2" stroke="#ccc" stroke-width="1.5"/><text x="1011.0" y="167.2" font-size="14" fill="#dcdcdc" text-anchor="end" stroke="#dcdcdc" stroke-width="0.3">0,55</text><text x="1320" y="115" font-size="14" fill="#d0d0d0" text-anchor="middle" stroke="#d0d0d0" stroke-width="0.3">CIE 1976 u'v'</text><rect x="1402.5" y="580.5" width="252" height="26.5" fill="#2c2c2c"/><text x="1403.5" y="601.5" font-size="18.5" fill="#f4f4f4" textLength="221.0" lengthAdjust="spacingAndGlyphs"  xml:space="preserve" stroke="#f4f4f4" stroke-width="0.3">Gamut Coverage:  88,7%</text><circle cx="1486.5" cy="180.4" r="4.5" fill="#a00000" stroke="#111" stroke-width="1.2"/><circle cx="1167.4" cy="143.7" r="4.5" fill="#00a000" stroke="#111" stroke-width="1.2"/><circle cx="1203.8" cy="473.1" r="4.5" fill="#0000a0" stroke="#111" stroke-width="1.2"/><circle cx="1179.3" cy="252.3" r="4.5" fill="#00a0a0" stroke="#111" stroke-width="1.2"/><circle cx="1303.7" cy="370.3" r="4.5" fill="#a000a0" stroke="#111" stroke-width="1.2"/><circle cx="1225.2" cy="150.1" r="4.5" fill="#b0b000" stroke="#111" stroke-width="1.2"/><rect x="1491.3" y="176.9" width="13" height="13" fill="none" stroke="#f0f0f0" stroke-width="1.8"/><rect x="1144.6" y="144.5" width="13" height="13" fill="none" stroke="#f0f0f0" stroke-width="1.8"/><rect x="1198.3" y="475.7" width="13" height="13" fill="none" stroke="#f0f0f0" stroke-width="1.8"/><rect x="1158.7" y="232.1" width="13" height="13" fill="none" stroke="#f0f0f0" stroke-width="1.8"/><rect x="1336.2" y="335.0" width="13" height="13" fill="none" stroke="#f0f0f0" stroke-width="1.8"/><rect x="1228.6" y="152.3" width="13" height="13" fill="none" stroke="#f0f0f0" stroke-width="1.8"/><rect x="1222.1" y="221.6" width="13" height="13" fill="none" stroke="#000" stroke-width="2.2"/><circle cx="1224.5" cy="235.2" r="4.5" fill="#fff" stroke="#111" stroke-width="1.2"/><text x="14" y="714" font-size="29" fill="#f2f2f2" textLength="218.4" lengthAdjust="spacingAndGlyphs"  xml:space="preserve" stroke="#f2f2f2" stroke-width="0.3">Current Reading</text><text x="15" y="783.5" font-size="24" fill="#f2f2f2" textLength="101.4" lengthAdjust="spacingAndGlyphs"  xml:space="preserve" stroke="#f2f2f2" stroke-width="0.3">x: 0,3005</text><text x="171" y="783.5" font-size="24" fill="#f2f2f2" textLength="102.5" lengthAdjust="spacingAndGlyphs"  xml:space="preserve" stroke="#f2f2f2" stroke-width="0.3">y: 0,3164</text><text x="15" y="824.5" font-size="24" fill="#f2f2f2" textLength="109.9" lengthAdjust="spacingAndGlyphs"  xml:space="preserve" stroke="#f2f2f2" stroke-width="0.3">fL: 203,34</text><text x="15" y="865" font-size="24" fill="#f2f2f2" textLength="157.9" lengthAdjust="spacingAndGlyphs"  xml:space="preserve" stroke="#f2f2f2" stroke-width="0.3">cd/m²: 696,69</text><rect x="356.5" y="686.5" width="250.0" height="181.0" fill="#232323" stroke="#8c8c8c" stroke-width="1.5"/><line x1="350.5" y1="850.4" x2="606.5" y2="850.4" stroke="#8c8c8c" stroke-width="1.5"/><text x="350.5" y="855.4" font-size="14" fill="#dcdcdc" text-anchor="end" stroke="#dcdcdc" stroke-width="0.3">96</text><line x1="350.5" y1="814.4" x2="606.5" y2="814.4" stroke="#8c8c8c" stroke-width="1.5"/><text x="350.5" y="819.4" font-size="14" fill="#dcdcdc" text-anchor="end" stroke="#dcdcdc" stroke-width="0.3">98</text><line x1="350.5" y1="778.3" x2="606.5" y2="778.3" stroke="#8c8c8c" stroke-width="1.5"/><text x="350.5" y="783.3" font-size="14" fill="#dcdcdc" text-anchor="end" stroke="#dcdcdc" stroke-width="0.3">100</text><line x1="350.5" y1="742.2" x2="606.5" y2="742.2" stroke="#8c8c8c" stroke-width="1.5"/><text x="350.5" y="747.2" font-size="14" fill="#dcdcdc" text-anchor="end" stroke="#dcdcdc" stroke-width="0.3">102</text><line x1="350.5" y1="706.2" x2="606.5" y2="706.2" stroke="#8c8c8c" stroke-width="1.5"/><text x="350.5" y="711.2" font-size="14" fill="#dcdcdc" text-anchor="end" stroke="#dcdcdc" stroke-width="0.3">104</text><line x1="356.5" y1="867.5" x2="356.5" y2="873.5" stroke="#aaa" stroke-width="1.5"/><line x1="606.5" y1="867.5" x2="606.5" y2="873.5" stroke="#aaa" stroke-width="1.5"/><text x="466.5" y="682" font-size="14" fill="#d0d0d0" text-anchor="middle" stroke="#d0d0d0" stroke-width="0.3">RGB Balance</text><text x="481" y="884" font-size="14" fill="#d8d8d8" text-anchor="middle" stroke="#d8d8d8" stroke-width="0.3">100W</text><rect x="381" y="822.9" width="65" height="44.60000000000002" fill="url(#rb_r)" stroke="#000" stroke-width="1.5"/><rect x="447.5" y="773.8" width="65.0" height="93.70000000000005" fill="url(#rb_g)" stroke="#000" stroke-width="1.5"/><rect x="514" y="690.2" width="65" height="177.29999999999995" fill="url(#rb_b)" stroke="#000" stroke-width="1.5"/><rect x="636.5" y="678.5" width="341.0" height="198.0" fill="#232323"/><g clip-path="url(#plot31)"><g clip-path="url(#in31)"><g filter="url(#bl8)"><g class="c12"><g transform="translate(0 655)"><rect x="612" fill="#76ff00"/></g><g transform="translate(0 667)"><rect x="612" fill="#79ff00"/><rect x="624" fill="#7eff00"/><rect x="636" fill="#83ff00"/></g><g transform="translate(0 679)"><rect x="612" fill="#7dff00"/><rect x="624" fill="#82ff00"/><rect x="636" fill="#87ff00"/><rect x="648" fill="#8cff00"/><rect x="660" fill="#91ff00"/></g><g transform="translate(0 691)"><rect x="612" fill="#81ff02"/><rect x="624" fill="#86ff00"/><rect x="636" fill="#8bff00"/><rect x="648" fill="#90ff00"/><rect x="660" fill="#96ff00"/><rect x="672" fill="#9bff00"/><rect x="684" fill="#a0ff00"/></g><g transform="translate(0 703)"><rect x="612" fill="#85ff04"/><rect x="624" fill="#8aff03"/><rect x="636" fill="#90ff02"/><rect x="648" fill="#95ff01"/><rect x="660" fill="#9aff00"/><rect x="672" fill="#9fff00"/><rect x="684" fill="#a5ff00"/><rect x="696" fill="#aaff00"/><rect x="708" fill="#b0ff00"/></g><g transform="translate(0 715)"><rect x="612" fill="#89ff07"/><rect x="624" fill="#8fff06"/><rect x="636" fill="#94ff04"/><rect x="648" fill="#99ff03"/><rect x="660" fill="#9fff02"/><rect x="672" fill="#a4ff01"/><rect x="684" fill="#a9ff00"/><rect x="696" fill="#afff00"/><rect x="708" fill="#b5ff00"/><rect x="720" fill="#baff00"/><rect x="732" fill="#c0ff00"/><rect x="744" fill="#c6ff00"/></g><g transform="translate(0 727)"><rect x="612" fill="#8eff0a"/><rect x="624" fill="#93ff08"/><rect x="636" fill="#98ff07"/><rect x="648" fill="#9eff06"/><rect x="660" fill="#a3ff05"/><rect x="672" fill="#a9ff04"/><rect x="684" fill="#aeff02"/><rect x="696" fill="#b4ff01"/><rect x="708" fill="#baff00"/><rect x="720" fill="#bfff00"/><rect x="732" fill="#c5ff00"/><rect x="744" fill="#cbff00"/><rect x="756" fill="#d1ff00"/><rect x="768" fill="#d7ff00"/></g><g transform="translate(0 739)"><rect x="612" fill="#92ff0d"/><rect x="624" fill="#98ff0b"/><rect x="636" fill="#9dff0a"/><rect x="648" fill="#a3ff09"/><rect x="660" fill="#a8ff08"/><rect x="672" fill="#aeff06"/><rect x="684" fill="#b3ff05"/><rect x="696" fill="#b9ff04"/><rect x="708" fill="#bfff03"/><rect x="720" fill="#c5ff01"/><rect x="732" fill="#cbff00"/><rect x="744" fill="#d1ff00"/><rect x="756" fill="#d7ff00"/><rect x="768" fill="#ddff00"/><rect x="780" fill="#e3ff00"/><rect x="792" fill="#e9ff00"/></g><g transform="translate(0 751)"><rect x="612" fill="#97ff0f"/><rect x="624" fill="#9cff0e"/><rect x="636" fill="#a2ff0d"/><rect x="648" fill="#a7ff0c"/><rect x="660" fill="#adff0b"/><rect x="672" fill="#b3ff09"/><rect x="684" fill="#b9ff08"/><rect x="696" fill="#bfff07"/><rect x="708" fill="#c5ff06"/><rect x="720" fill="#caff04"/><rect x="732" fill="#d1ff03"/><rect x="744" fill="#d7ff02"/><rect x="756" fill="#ddff00"/><rect x="768" fill="#e3ff00"/><rect x="780" fill="#e9ff00"/><rect x="792" fill="#f0ff00"/><rect x="804" fill="#f6ff00"/><rect x="816" fill="#fdff00"/></g><g transform="translate(0 763)"><rect x="612" fill="#9bff13"/><rect x="624" fill="#a1ff11"/><rect x="636" fill="#a7ff10"/><rect x="648" fill="#adff0f"/><rect x="660" fill="#b2ff0e"/><rect x="672" fill="#b8ff0c"/><rect x="684" fill="#beff0b"/><rect x="696" fill="#c4ff0a"/><rect x="708" fill="#caff09"/><rect x="720" fill="#d0ff07"/><rect x="732" fill="#d6ff06"/><rect x="744" fill="#ddff05"/><rect x="756" fill="#e3ff03"/><rect x="768" fill="#e9ff02"/><rect x="780" fill="#f0ff01"/><rect x="792" fill="#f6ff00"/><rect x="804" fill="#fdff00"/><rect x="816" fill="#fffa00"/><rect x="828" fill="#fff400"/><rect x="840" fill="#ffee00"/></g><g transform="translate(0 775)"><rect x="612" fill="#a0ff16"/><rect x="624" fill="#a6ff14"/><rect x="636" fill="#acff13"/><rect x="648" fill="#b2ff12"/><rect x="660" fill="#b8ff11"/><rect x="672" fill="#beff10"/><rect x="684" fill="#c4ff0e"/><rect x="696" fill="#caff0d"/><rect x="708" fill="#d0ff0c"/><rect x="720" fill="#d6ff0a"/><rect x="732" fill="#ddff09"/><rect x="744" fill="#e3ff08"/><rect x="756" fill="#eaff06"/><rect x="768" fill="#f0ff05"/><rect x="780" fill="#f7ff04"/><rect x="792" fill="#fdff02"/><rect x="804" fill="#fffa01"/><rect x="816" fill="#fff400"/><rect x="828" fill="#ffed00"/><rect x="840" fill="#ffe800"/><rect x="852" fill="#ffe200"/><rect x="864" fill="#ffdc00"/><rect x="876" fill="#ffd700"/></g><g transform="translate(0 787)"><rect x="612" fill="#a5ff19"/><rect x="624" fill="#abff18"/><rect x="636" fill="#b1ff17"/><rect x="648" fill="#b7ff15"/><rect x="660" fill="#bdff14"/><rect x="672" fill="#c3ff13"/><rect x="684" fill="#caff12"/><rect x="696" fill="#d0ff10"/><rect x="708" fill="#d6ff0f"/><rect x="720" fill="#ddff0e"/><rect x="732" fill="#e3ff0c"/><rect x="744" fill="#eaff0b"/><rect x="756" fill="#f0ff0a"/><rect x="768" fill="#f7ff08"/><rect x="780" fill="#feff07"/><rect x="792" fill="#fffa05"/><rect x="804" fill="#fff304"/><rect x="816" fill="#ffed02"/><rect x="828" fill="#ffe701"/><rect x="840" fill="#ffe100"/><rect x="852" fill="#ffdc00"/><rect x="864" fill="#ffd600"/><rect x="876" fill="#ffd100"/><rect x="888" fill="#ffcc00"/><rect x="900" fill="#ffc800"/></g><g transform="translate(0 799)"><rect x="612" fill="#abff1c"/><rect x="624" fill="#b1ff1b"/><rect x="636" fill="#b7ff1a"/><rect x="648" fill="#bdff19"/><rect x="660" fill="#c3ff17"/><rect x="672" fill="#c9ff16"/><rect x="684" fill="#d0ff15"/><rect x="696" fill="#d6ff14"/><rect x="708" fill="#dcff12"/><rect x="720" fill="#e3ff11"/><rect x="732" fill="#eaff10"/><rect x="744" fill="#f0ff0e"/><rect x="756" fill="#f7ff0d"/><rect x="768" fill="#feff0c"/><rect x="780" fill="#fff90a"/><rect x="792" fill="#fff308"/><rect x="804" fill="#ffec07"/><rect x="816" fill="#ffe605"/><rect x="828" fill="#ffe104"/><rect x="840" fill="#ffdb02"/><rect x="852" fill="#ffd601"/><rect x="864" fill="#ffd100"/><rect x="876" fill="#ffcc00"/><rect x="888" fill="#ffc700"/><rect x="900" fill="#ffc200"/><rect x="912" fill="#ffbe00"/><rect x="924" fill="#ffb900"/></g><g transform="translate(0 811)"><rect x="612" fill="#b0ff20"/><rect x="624" fill="#b6ff1f"/><rect x="636" fill="#bcff1d"/><rect x="648" fill="#c3ff1c"/><rect x="660" fill="#c9ff1b"/><rect x="672" fill="#cfff1a"/><rect x="684" fill="#d6ff18"/><rect x="696" fill="#dcff17"/><rect x="708" fill="#e3ff16"/><rect x="720" fill="#eaff14"/><rect x="732" fill="#f0ff13"/><rect x="744" fill="#f7ff12"/><rect x="756" fill="#feff10"/><rect x="768" fill="#fff90f"/><rect x="780" fill="#fff20d"/><rect x="792" fill="#ffec0b"/><rect x="804" fill="#ffe60a"/><rect x="816" fill="#ffe008"/><rect x="828" fill="#ffda07"/><rect x="840" fill="#ffd505"/><rect x="852" fill="#ffd004"/><rect x="864" fill="#ffcb03"/><rect x="876" fill="#ffc601"/><rect x="888" fill="#ffc100"/><rect x="900" fill="#ffbd00"/><rect x="912" fill="#ffb900"/><rect x="924" fill="#ffb400"/><rect x="936" fill="#ffb000"/><rect x="948" fill="#ffac00"/></g><g transform="translate(0 823)"><rect x="612" fill="#b6ff23"/><rect x="624" fill="#bcff22"/><rect x="636" fill="#c2ff21"/><rect x="648" fill="#c9ff20"/><rect x="660" fill="#cfff1e"/><rect x="672" fill="#d6ff1d"/><rect x="684" fill="#dcff1c"/><rect x="696" fill="#e3ff1b"/><rect x="708" fill="#eaff19"/><rect x="720" fill="#f1ff18"/><rect x="732" fill="#f8ff17"/><rect x="744" fill="#ffff15"/><rect x="756" fill="#fff913"/><rect x="768" fill="#fff212"/><rect x="780" fill="#ffeb10"/><rect x="792" fill="#ffe50e"/><rect x="804" fill="#ffdf0c"/><rect x="816" fill="#ffda0b"/><rect x="828" fill="#ffd409"/><rect x="840" fill="#ffcf08"/><rect x="852" fill="#ffca07"/><rect x="864" fill="#ffc505"/><rect x="876" fill="#ffc104"/><rect x="888" fill="#ffbc03"/><rect x="900" fill="#ffb801"/><rect x="912" fill="#ffb300"/><rect x="924" fill="#ffaf00"/><rect x="936" fill="#ffab00"/><rect x="948" fill="#ffa800"/><rect x="960" fill="#ffa400"/><rect x="972" fill="#ffa000"/></g><g transform="translate(0 835)"><rect x="612" fill="#bbff27"/><rect x="624" fill="#c2ff26"/><rect x="636" fill="#c8ff25"/><rect x="648" fill="#cfff23"/><rect x="660" fill="#d5ff22"/><rect x="672" fill="#dcff21"/><rect x="684" fill="#e3ff20"/><rect x="696" fill="#eaff1e"/><rect x="708" fill="#f1ff1d"/><rect x="720" fill="#f8ff1c"/><rect x="732" fill="#ffff1a"/><rect x="744" fill="#fff818"/><rect x="756" fill="#fff116"/><rect x="768" fill="#ffeb14"/><rect x="780" fill="#ffe513"/><rect x="792" fill="#ffdf11"/><rect x="804" fill="#ffd90f"/><rect x="816" fill="#ffd40e"/><rect x="828" fill="#ffce0c"/><rect x="840" fill="#ffc90b"/><rect x="852" fill="#ffc409"/><rect x="864" fill="#ffc008"/><rect x="876" fill="#ffbb07"/><rect x="888" fill="#ffb705"/><rect x="900" fill="#ffb304"/><rect x="912" fill="#ffae03"/><rect x="924" fill="#ffaa02"/><rect x="936" fill="#ffa701"/><rect x="948" fill="#ffa300"/><rect x="960" fill="#ff9f00"/><rect x="972" fill="#ff9c00"/><rect x="984" fill="#ff9800"/><rect x="996" fill="#ff9500"/></g><g transform="translate(0 847)"><rect x="612" fill="#c1ff2b"/><rect x="624" fill="#c8ff2a"/><rect x="636" fill="#cfff29"/><rect x="648" fill="#d5ff27"/><rect x="660" fill="#dcff26"/><rect x="672" fill="#e3ff25"/><rect x="684" fill="#eaff23"/><rect x="696" fill="#f1ff22"/><rect x="708" fill="#f8ff21"/><rect x="720" fill="#ffff20"/><rect x="732" fill="#fff81d"/><rect x="744" fill="#fff11b"/><rect x="756" fill="#ffea19"/><rect x="768" fill="#ffe417"/><rect x="780" fill="#ffde15"/><rect x="792" fill="#ffd814"/><rect x="804" fill="#ffd312"/><rect x="816" fill="#ffce10"/><rect x="828" fill="#ffc90f"/><rect x="840" fill="#ffc40d"/><rect x="852" fill="#ffbf0c"/><rect x="864" fill="#ffba0a"/><rect x="876" fill="#ffb609"/><rect x="888" fill="#ffb208"/><rect x="900" fill="#ffad06"/><rect x="912" fill="#ffa905"/><rect x="924" fill="#ffa604"/><rect x="936" fill="#ffa203"/><rect x="948" fill="#ff9e02"/><rect x="960" fill="#ff9b01"/><rect x="972" fill="#ff9700"/><rect x="984" fill="#ff9400"/><rect x="996" fill="#ff9100"/></g><g transform="translate(0 859)"><rect x="612" fill="#c8ff2f"/><rect x="624" fill="#ceff2e"/><rect x="636" fill="#d5ff2d"/><rect x="648" fill="#dcff2b"/><rect x="660" fill="#e3ff2a"/><rect x="672" fill="#eaff29"/><rect x="684" fill="#f1ff28"/><rect x="696" fill="#f8ff26"/><rect x="708" fill="#fffe25"/><rect x="720" fill="#fff722"/><rect x="732" fill="#fff020"/><rect x="744" fill="#ffea1e"/><rect x="756" fill="#ffe41c"/><rect x="768" fill="#ffde1a"/><rect x="780" fill="#ffd818"/><rect x="792" fill="#ffd216"/><rect x="804" fill="#ffcd15"/><rect x="816" fill="#ffc813"/><rect x="828" fill="#ffc311"/><rect x="840" fill="#ffbe10"/><rect x="852" fill="#ffb90e"/><rect x="864" fill="#ffb50d"/><rect x="876" fill="#ffb10c"/><rect x="888" fill="#ffac0a"/><rect x="900" fill="#ffa809"/><rect x="912" fill="#ffa508"/><rect x="924" fill="#ffa106"/><rect x="936" fill="#ff9d05"/><rect x="948" fill="#ff9a04"/><rect x="960" fill="#ff9603"/><rect x="972" fill="#ff9302"/><rect x="984" fill="#ff9001"/><rect x="996" fill="#ff8d00"/></g><g transform="translate(0 871)"><rect x="612" fill="#ceff33"/><rect x="624" fill="#d5ff32"/><rect x="636" fill="#dcff31"/><rect x="648" fill="#e3ff2f"/><rect x="660" fill="#eaff2e"/><rect x="672" fill="#f1ff2d"/><rect x="684" fill="#f9ff2c"/><rect x="696" fill="#fffe2a"/><rect x="708" fill="#fff728"/><rect x="720" fill="#fff025"/><rect x="732" fill="#ffe923"/><rect x="744" fill="#ffe321"/><rect x="756" fill="#ffdd1f"/><rect x="768" fill="#ffd71d"/><rect x="780" fill="#ffd11b"/><rect x="792" fill="#ffcc19"/><rect x="804" fill="#ffc717"/><rect x="816" fill="#ffc216"/><rect x="828" fill="#ffbd14"/><rect x="840" fill="#ffb812"/><rect x="852" fill="#ffb411"/><rect x="864" fill="#ffb00f"/><rect x="876" fill="#ffac0e"/><rect x="888" fill="#ffa70d"/><rect x="900" fill="#ffa40b"/><rect x="912" fill="#ffa00a"/><rect x="924" fill="#ff9c09"/><rect x="936" fill="#ff9908"/><rect x="948" fill="#ff9506"/><rect x="960" fill="#ff9205"/><rect x="972" fill="#ff8f04"/><rect x="984" fill="#ff8c03"/><rect x="996" fill="#ff8802"/></g><g transform="translate(0 883)"><rect x="612" fill="#d5ff37"/><rect x="624" fill="#dcff36"/><rect x="636" fill="#e3ff35"/><rect x="648" fill="#eaff34"/><rect x="660" fill="#f1ff33"/><rect x="672" fill="#f9ff31"/><rect x="684" fill="#fffe30"/><rect x="696" fill="#fff62d"/><rect x="708" fill="#ffef2b"/><rect x="720" fill="#ffe928"/><rect x="732" fill="#ffe226"/><rect x="744" fill="#ffdc24"/><rect x="756" fill="#ffd622"/><rect x="768" fill="#ffd120"/><rect x="780" fill="#ffcb1e"/><rect x="792" fill="#ffc61c"/><rect x="804" fill="#ffc11a"/><rect x="816" fill="#ffbc18"/><rect x="828" fill="#ffb817"/><rect x="840" fill="#ffb315"/><rect x="852" fill="#ffaf13"/><rect x="864" fill="#ffaa12"/><rect x="876" fill="#ffa610"/><rect x="888" fill="#ffa30f"/><rect x="900" fill="#ff9f0e"/><rect x="912" fill="#ff9b0c"/><rect x="924" fill="#ff980b"/><rect x="936" fill="#ff940a"/><rect x="948" fill="#ff9109"/><rect x="960" fill="#ff8e07"/><rect x="972" fill="#ff8a06"/><rect x="984" fill="#ff8705"/><rect x="996" fill="#ff8404"/></g><g transform="translate(0 895)"><rect x="612" fill="#dcff3c"/><rect x="624" fill="#e3ff3b"/><rect x="636" fill="#eaff3a"/><rect x="648" fill="#f2ff38"/><rect x="660" fill="#f9ff37"/><rect x="672" fill="#fffd35"/><rect x="684" fill="#fff633"/><rect x="696" fill="#ffef30"/><rect x="708" fill="#ffe82d"/><rect x="720" fill="#ffe22b"/><rect x="732" fill="#ffdc29"/><rect x="744" fill="#ffd626"/><rect x="756" fill="#ffd024"/><rect x="768" fill="#ffca22"/><rect x="780" fill="#ffc520"/><rect x="792" fill="#ffc01e"/><rect x="804" fill="#ffbb1c"/><rect x="816" fill="#ffb71b"/><rect x="828" fill="#ffb219"/><rect x="840" fill="#ffae17"/><rect x="852" fill="#ffa916"/><rect x="864" fill="#ffa514"/><rect x="876" fill="#ffa113"/><rect x="888" fill="#ff9e11"/><rect x="900" fill="#ff9a10"/><rect x="912" fill="#ff960f"/><rect x="924" fill="#ff930d"/><rect x="936" fill="#ff900c"/><rect x="948" fill="#ff8c0b"/><rect x="960" fill="#ff890a"/><rect x="972" fill="#ff8608"/><rect x="984" fill="#ff8307"/><rect x="996" fill="#ff8006"/></g></g></g></g><g clip-path="url(#out31)"><g clip-path="url(#loc31)"><g filter="url(#bl8)"><g class="c12"><g transform="translate(0 655)"><rect x="612" fill="#479900"/><rect x="624" fill="#499900"/><rect x="636" fill="#4c9900"/><rect x="648" fill="#4f9900"/><rect x="660" fill="#529900"/><rect x="672" fill="#559900"/><rect x="684" fill="#589900"/><rect x="696" fill="#5b9900"/><rect x="708" fill="#5e9900"/><rect x="720" fill="#619900"/><rect x="732" fill="#649900"/><rect x="744" fill="#679900"/><rect x="756" fill="#6b9900"/><rect x="768" fill="#6e9900"/><rect x="780" fill="#719900"/><rect x="792" fill="#749900"/><rect x="804" fill="#779900"/><rect x="816" fill="#7b9900"/><rect x="828" fill="#7e9900"/><rect x="840" fill="#829900"/><rect x="852" fill="#859900"/><rect x="864" fill="#889900"/><rect x="876" fill="#8c9900"/><rect x="888" fill="#8f9900"/><rect x="900" fill="#939900"/><rect x="912" fill="#969900"/><rect x="924" fill="#999800"/><rect x="936" fill="#999400"/><rect x="948" fill="#999100"/><rect x="960" fill="#998e00"/><rect x="972" fill="#998b00"/><rect x="984" fill="#998800"/><rect x="996" fill="#998500"/></g><g transform="translate(0 667)"><rect x="612" fill="#499900"/><rect x="624" fill="#4c9900"/><rect x="636" fill="#4f9900"/><rect x="648" fill="#529900"/><rect x="660" fill="#559900"/><rect x="672" fill="#589900"/><rect x="684" fill="#5b9900"/><rect x="696" fill="#5e9900"/><rect x="708" fill="#619900"/><rect x="720" fill="#649900"/><rect x="732" fill="#679900"/><rect x="744" fill="#6a9900"/><rect x="756" fill="#6d9900"/><rect x="768" fill="#719900"/><rect x="780" fill="#749900"/><rect x="792" fill="#779900"/><rect x="804" fill="#7b9900"/><rect x="816" fill="#7e9900"/><rect x="828" fill="#819900"/><rect x="840" fill="#859900"/><rect x="852" fill="#889900"/><rect x="864" fill="#8c9900"/><rect x="876" fill="#8f9900"/><rect x="888" fill="#939900"/><rect x="900" fill="#979900"/><rect x="912" fill="#999800"/><rect x="924" fill="#999400"/><rect x="936" fill="#999100"/><rect x="948" fill="#998e00"/><rect x="960" fill="#998a00"/><rect x="972" fill="#998700"/><rect x="984" fill="#998400"/><rect x="996" fill="#998100"/></g><g transform="translate(0 679)"><rect x="612" fill="#4b9900"/><rect x="624" fill="#4e9900"/><rect x="636" fill="#519900"/><rect x="648" fill="#549900"/><rect x="660" fill="#579900"/><rect x="672" fill="#5a9900"/><rect x="684" fill="#5d9900"/><rect x="696" fill="#609900"/><rect x="708" fill="#649900"/><rect x="720" fill="#679900"/><rect x="732" fill="#6a9900"/><rect x="744" fill="#6d9900"/><rect x="756" fill="#709900"/><rect x="768" fill="#749900"/><rect x="780" fill="#779900"/><rect x="792" fill="#7a9900"/><rect x="804" fill="#7e9900"/><rect x="816" fill="#819900"/><rect x="828" fill="#859900"/><rect x="840" fill="#889900"/><rect x="852" fill="#8c9900"/><rect x="864" fill="#8f9900"/><rect x="876" fill="#939900"/><rect x="888" fill="#979900"/><rect x="900" fill="#999800"/><rect x="912" fill="#999400"/><rect x="924" fill="#999100"/><rect x="936" fill="#998d00"/><rect x="948" fill="#998a00"/><rect x="960" fill="#998700"/><rect x="972" fill="#998400"/><rect x="984" fill="#998100"/><rect x="996" fill="#997e00"/></g><g transform="translate(0 691)"><rect x="612" fill="#4e9901"/><rect x="624" fill="#519900"/><rect x="636" fill="#549900"/><rect x="648" fill="#579900"/><rect x="660" fill="#5a9900"/><rect x="672" fill="#5d9900"/><rect x="684" fill="#609900"/><rect x="696" fill="#639900"/><rect x="708" fill="#669900"/><rect x="720" fill="#6a9900"/><rect x="732" fill="#6d9900"/><rect x="744" fill="#709900"/><rect x="756" fill="#749900"/><rect x="768" fill="#779900"/><rect x="780" fill="#7a9900"/><rect x="792" fill="#7e9900"/><rect x="804" fill="#819900"/><rect x="816" fill="#859900"/><rect x="828" fill="#889900"/><rect x="840" fill="#8c9900"/><rect x="852" fill="#909900"/><rect x="864" fill="#939900"/><rect x="876" fill="#979900"/><rect x="888" fill="#999700"/><rect x="900" fill="#999400"/><rect x="912" fill="#999000"/><rect x="924" fill="#998d00"/><rect x="936" fill="#998a00"/><rect x="948" fill="#998700"/><rect x="960" fill="#998400"/><rect x="972" fill="#998100"/><rect x="984" fill="#997e00"/><rect x="996" fill="#997b00"/></g><g transform="translate(0 703)"><rect x="612" fill="#509902"/><rect x="624" fill="#539902"/><rect x="636" fill="#569901"/><rect x="648" fill="#599900"/><rect x="660" fill="#5c9900"/><rect x="672" fill="#609900"/><rect x="684" fill="#639900"/><rect x="696" fill="#669900"/><rect x="708" fill="#699900"/><rect x="720" fill="#6d9900"/><rect x="732" fill="#709900"/><rect x="744" fill="#739900"/><rect x="756" fill="#779900"/><rect x="768" fill="#7a9900"/><rect x="780" fill="#7e9900"/><rect x="792" fill="#819900"/><rect x="804" fill="#859900"/><rect x="816" fill="#889900"/><rect x="828" fill="#8c9900"/><rect x="840" fill="#909900"/><rect x="852" fill="#939900"/><rect x="864" fill="#979900"/><rect x="876" fill="#999700"/><rect x="888" fill="#999400"/><rect x="900" fill="#999000"/><rect x="912" fill="#998d00"/><rect x="924" fill="#998900"/><rect x="936" fill="#998600"/><rect x="948" fill="#998300"/><rect x="960" fill="#998000"/><rect x="972" fill="#997e00"/><rect x="984" fill="#997b00"/><rect x="996" fill="#997800"/></g><g transform="translate(0 715)"><rect x="624" fill="#569903"/><rect x="636" fill="#599903"/><rect x="648" fill="#5c9902"/><rect x="660" fill="#5f9901"/><rect x="672" fill="#629900"/><rect x="684" fill="#669900"/><rect x="696" fill="#699900"/><rect x="708" fill="#6c9900"/><rect x="720" fill="#709900"/><rect x="732" fill="#739900"/><rect x="744" fill="#779900"/><rect x="756" fill="#7a9900"/><rect x="768" fill="#7e9900"/><rect x="780" fill="#819900"/><rect x="792" fill="#859900"/><rect x="804" fill="#889900"/><rect x="816" fill="#8c9900"/><rect x="828" fill="#909900"/><rect x="840" fill="#939900"/><rect x="852" fill="#979900"/><rect x="864" fill="#999700"/><rect x="876" fill="#999300"/><rect x="888" fill="#999000"/><rect x="900" fill="#998c00"/><rect x="912" fill="#998900"/><rect x="924" fill="#998600"/><rect x="936" fill="#998300"/><rect x="948" fill="#998000"/><rect x="960" fill="#997d00"/><rect x="972" fill="#997a00"/><rect x="984" fill="#997800"/><rect x="996" fill="#997500"/></g><g transform="translate(0 727)"><rect x="648" fill="#5f9904"/><rect x="660" fill="#629903"/><rect x="672" fill="#659902"/><rect x="684" fill="#699901"/><rect x="696" fill="#6c9901"/><rect x="708" fill="#6f9900"/><rect x="720" fill="#739900"/><rect x="732" fill="#769900"/><rect x="744" fill="#7a9900"/><rect x="756" fill="#7d9900"/><rect x="768" fill="#819900"/><rect x="780" fill="#859900"/><rect x="792" fill="#889900"/><rect x="804" fill="#8c9900"/><rect x="816" fill="#909900"/><rect x="828" fill="#939900"/><rect x="840" fill="#979900"/><rect x="852" fill="#999700"/><rect x="864" fill="#999300"/><rect x="876" fill="#999000"/><rect x="888" fill="#998c00"/><rect x="900" fill="#998900"/><rect x="912" fill="#998600"/><rect x="924" fill="#998300"/><rect x="936" fill="#998000"/><rect x="948" fill="#997d00"/><rect x="960" fill="#997a00"/><rect x="972" fill="#997700"/><rect x="984" fill="#997500"/><rect x="996" fill="#997200"/></g><g transform="translate(0 739)"><rect x="672" fill="#689904"/><rect x="684" fill="#6c9903"/><rect x="696" fill="#6f9902"/><rect x="708" fill="#739902"/><rect x="720" fill="#769901"/><rect x="732" fill="#7a9900"/><rect x="744" fill="#7d9900"/><rect x="756" fill="#819900"/><rect x="768" fill="#859900"/><rect x="780" fill="#889900"/><rect x="792" fill="#8c9900"/><rect x="804" fill="#909900"/><rect x="816" fill="#949900"/><rect x="828" fill="#979900"/><rect x="840" fill="#999700"/><rect x="852" fill="#999300"/><rect x="864" fill="#998f00"/><rect x="876" fill="#998c00"/><rect x="888" fill="#998900"/><rect x="900" fill="#998500"/><rect x="912" fill="#998200"/><rect x="924" fill="#997f00"/><rect x="936" fill="#997c00"/><rect x="948" fill="#997a00"/><rect x="960" fill="#997700"/><rect x="972" fill="#997400"/><rect x="984" fill="#997200"/><rect x="996" fill="#996f00"/></g><g transform="translate(0 751)"><rect x="696" fill="#729904"/><rect x="708" fill="#769903"/><rect x="720" fill="#799903"/><rect x="732" fill="#7d9902"/><rect x="744" fill="#819901"/><rect x="756" fill="#859900"/><rect x="768" fill="#889900"/><rect x="780" fill="#8c9900"/><rect x="792" fill="#909900"/><rect x="804" fill="#949900"/><rect x="816" fill="#989900"/><rect x="828" fill="#999600"/><rect x="840" fill="#999300"/><rect x="852" fill="#998f00"/><rect x="864" fill="#998c00"/><rect x="876" fill="#998800"/><rect x="888" fill="#998500"/><rect x="900" fill="#998200"/><rect x="912" fill="#997f00"/><rect x="924" fill="#997c00"/><rect x="936" fill="#997900"/><rect x="948" fill="#997600"/><rect x="960" fill="#997400"/><rect x="972" fill="#997100"/><rect x="984" fill="#996f00"/><rect x="996" fill="#996c00"/></g><g transform="translate(0 763)"><rect x="720" fill="#7d9904"/><rect x="732" fill="#819904"/><rect x="744" fill="#849903"/><rect x="756" fill="#889902"/><rect x="768" fill="#8c9901"/><rect x="780" fill="#909900"/><rect x="792" fill="#949900"/><rect x="804" fill="#989900"/><rect x="816" fill="#999600"/><rect x="828" fill="#999200"/><rect x="840" fill="#998f00"/><rect x="852" fill="#998b00"/><rect x="864" fill="#998800"/><rect x="876" fill="#998500"/><rect x="888" fill="#998100"/><rect x="900" fill="#997e00"/><rect x="912" fill="#997c00"/><rect x="924" fill="#997900"/><rect x="936" fill="#997600"/><rect x="948" fill="#997300"/><rect x="960" fill="#997100"/><rect x="972" fill="#996e00"/><rect x="984" fill="#996c00"/><rect x="996" fill="#996a00"/></g><g transform="translate(0 775)"><rect x="756" fill="#8c9904"/><rect x="768" fill="#909903"/><rect x="780" fill="#949902"/><rect x="792" fill="#989901"/><rect x="804" fill="#999600"/><rect x="816" fill="#999200"/><rect x="828" fill="#998e00"/><rect x="840" fill="#998b00"/><rect x="852" fill="#998800"/><rect x="864" fill="#998400"/><rect x="876" fill="#998100"/><rect x="888" fill="#997e00"/><rect x="900" fill="#997b00"/><rect x="912" fill="#997800"/><rect x="924" fill="#997500"/><rect x="936" fill="#997300"/><rect x="948" fill="#997000"/><rect x="960" fill="#996e00"/><rect x="972" fill="#996b00"/><rect x="984" fill="#996900"/><rect x="996" fill="#996700"/></g><g transform="translate(0 787)"><rect x="780" fill="#989904"/><rect x="792" fill="#999603"/><rect x="804" fill="#999202"/><rect x="816" fill="#998e01"/><rect x="828" fill="#998b01"/><rect x="840" fill="#998700"/><rect x="852" fill="#998400"/><rect x="864" fill="#998100"/><rect x="876" fill="#997e00"/><rect x="888" fill="#997b00"/><rect x="900" fill="#997800"/><rect x="912" fill="#997500"/><rect x="924" fill="#997200"/><rect x="936" fill="#997000"/><rect x="948" fill="#996d00"/><rect x="960" fill="#996b00"/><rect x="972" fill="#996900"/><rect x="984" fill="#996600"/><rect x="996" fill="#996400"/></g><g transform="translate(0 799)"><rect x="804" fill="#998e04"/><rect x="816" fill="#998a03"/><rect x="828" fill="#998702"/><rect x="840" fill="#998301"/><rect x="852" fill="#998001"/><rect x="864" fill="#997d00"/><rect x="876" fill="#997a00"/><rect x="888" fill="#997700"/><rect x="900" fill="#997500"/><rect x="912" fill="#997200"/><rect x="924" fill="#996f00"/><rect x="936" fill="#996d00"/><rect x="948" fill="#996a00"/><rect x="960" fill="#996800"/><rect x="972" fill="#996600"/><rect x="984" fill="#996300"/><rect x="996" fill="#996100"/></g><g transform="translate(0 811)"><rect x="828" fill="#998304"/><rect x="840" fill="#998003"/><rect x="852" fill="#997d02"/><rect x="864" fill="#997a02"/><rect x="876" fill="#997701"/><rect x="888" fill="#997400"/><rect x="900" fill="#997100"/><rect x="912" fill="#996f00"/><rect x="924" fill="#996c00"/><rect x="936" fill="#996a00"/><rect x="948" fill="#996700"/><rect x="960" fill="#996500"/><rect x="972" fill="#996300"/><rect x="984" fill="#996100"/><rect x="996" fill="#995f00"/></g><g transform="translate(0 823)"><rect x="852" fill="#997904"/><rect x="864" fill="#997603"/><rect x="876" fill="#997402"/><rect x="888" fill="#997102"/><rect x="900" fill="#996e01"/><rect x="912" fill="#996c00"/><rect x="924" fill="#996900"/><rect x="936" fill="#996700"/><rect x="948" fill="#996500"/><rect x="960" fill="#996200"/><rect x="972" fill="#996000"/><rect x="984" fill="#995e00"/><rect x="996" fill="#995c00"/></g><g transform="translate(0 835)"><rect x="888" fill="#996e03"/><rect x="900" fill="#996b02"/><rect x="912" fill="#996902"/><rect x="924" fill="#996601"/><rect x="936" fill="#996400"/><rect x="948" fill="#996200"/><rect x="960" fill="#996000"/><rect x="972" fill="#995d00"/><rect x="984" fill="#995b00"/><rect x="996" fill="#995900"/></g><g transform="translate(0 847)"><rect x="912" fill="#996603"/><rect x="924" fill="#996302"/><rect x="936" fill="#996102"/><rect x="948" fill="#995f01"/><rect x="960" fill="#995d00"/><rect x="972" fill="#995b00"/><rect x="984" fill="#995900"/><rect x="996" fill="#995700"/></g><g transform="translate(0 859)"><rect x="936" fill="#995e03"/><rect x="948" fill="#995c02"/><rect x="960" fill="#995a02"/><rect x="972" fill="#995801"/><rect x="984" fill="#995601"/><rect x="996" fill="#995400"/></g><g transform="translate(0 871)"><rect x="960" fill="#995803"/><rect x="972" fill="#995602"/><rect x="984" fill="#995402"/><rect x="996" fill="#995201"/></g><g transform="translate(0 883)"><rect x="984" fill="#995103"/><rect x="996" fill="#994f02"/></g></g></g></g></g></g><rect x="636.5" y="678.5" width="341.0" height="198.0" fill="none" stroke="#a0a0a0" stroke-width="1.5"/><text x="806" y="673" font-size="14" fill="#d0d0d0" text-anchor="middle" stroke="#d0d0d0" stroke-width="0.3">CIE 1931 xy</text><rect x="799.5" y="769.5" width="13" height="13" fill="none" stroke="#000" stroke-width="2.2"/><circle cx="722.5" cy="826.7" r="4.3" fill="#fff" stroke="#111" stroke-width="1.2"/><circle cx="708.8" cy="838.6" r="4.5" fill="#bbb" stroke="#111" stroke-width="1.2"/><rect x="994" y="662" width="653.5" height="225" fill="#333"/><path d="M994.5 887 V662.8 H1646.8 V887" fill="none" stroke="#111" stroke-width="1.5"/><rect x="995" y="664" width="633.5" height="17" fill="url(#thg)"/><rect x="995" y="680.5" width="633.5" height="16" fill="#181818"/><g clip-path="url(#tclip)"><rect x="995" y="696.5" width="633.5" height="31" fill="#3c3c3c"/><rect x="995" y="727.5" width="633.5" height="31" fill="#858585"/><rect x="995" y="758.5" width="633.5" height="31" fill="#3c3c3c"/><rect x="995" y="789.5" width="633.5" height="31" fill="#858585"/><rect x="995" y="820.5" width="633.5" height="31" fill="#3c3c3c"/><rect x="995" y="851.5" width="633.5" height="31" fill="#858585"/><g transform="scale(0.9 1)" font-size="18.5" fill="#f2f2f2" stroke="#f2f2f2" stroke-width="0.3"><text x="1120.6" y="719.5" font-weight="bold">x: CIE31</text><text x="1213.9" y="719.5">0,2985</text><text x="1300.3" y="719.5">0,6373</text><text x="1386.7" y="719.5">0,3414</text><text x="1473.1" y="719.5">0,1519</text><text x="1559.4" y="719.5">0,2316</text><text x="1645.8" y="719.5">0,2715</text><text x="1732.2" y="719.5">0,4221</text><text x="1120.6" y="750.5" font-weight="bold">y: CIE31</text><text x="1213.9" y="750.5">0,3134</text><text x="1300.3" y="750.5">0,3389</text><text x="1386.7" y="750.5">0,6176</text><text x="1473.1" y="750.5">0,0654</text><text x="1559.4" y="750.5">0,2980</text><text x="1645.8" y="750.5">0,1325</text><text x="1732.2" y="750.5">0,5433</text><text x="1120.6" y="781.5" font-weight="bold">Y</text><text x="1213.9" y="781.5">371,7763</text><text x="1300.3" y="781.5">64,5823</text><text x="1386.7" y="781.5">275,7477</text><text x="1473.1" y="781.5">37,5324</text><text x="1559.4" y="781.5">306,6119</text><text x="1645.8" y="781.5">99,1434</text><text x="1732.2" y="781.5">338,4015</text><text x="1120.6" y="812.5" font-weight="bold">Target Y</text><text x="1213.9" y="812.5">362,9737</text><text x="1300.3" y="812.5">77,1885</text><text x="1386.7" y="812.5">259,5837</text><text x="1473.1" y="812.5">26,2015</text><text x="1559.4" y="812.5">285,7852</text><text x="1645.8" y="812.5">103,3900</text><text x="1732.2" y="812.5">336,7723</text><text x="1120.6" y="843.5" font-weight="bold">ΔE 2000</text><text x="1213.9" y="843.5">6,1591</text><text x="1300.3" y="843.5">3,6976</text><text x="1386.7" y="843.5">7,4806</text><text x="1473.1" y="843.5">3,9139</text><text x="1559.4" y="843.5">9,3941</text><text x="1645.8" y="843.5">5,2457</text><text x="1732.2" y="843.5">4,5819</text><text x="1120.6" y="874.5" font-weight="bold">ΔE ITP</text><text x="1213.9" y="874.5">0,0730</text><text x="1300.3" y="874.5">17,8527</text><text x="1386.7" y="874.5">31,3565</text><text x="1473.1" y="874.5">22,4434</text><text x="1559.4" y="874.5">15,3696</text><text x="1645.8" y="874.5">43,1045</text><text x="1732.2" y="874.5">27,2640</text><text x="1252.7" y="687.5" text-anchor="middle">White</text><text x="1338.4" y="687.5" text-anchor="middle">Red</text><text x="1425.2" y="687.5" text-anchor="middle">Green</text><text x="1511.1" y="687.5" text-anchor="middle">Blue</text><text x="1596.7" y="687.5" text-anchor="middle">Cyan</text><text x="1684.0" y="687.5" text-anchor="middle">Magenta</text><text x="1770.8" y="687.5" text-anchor="middle">Yellow</text></g></g><rect x="1629.5" y="697" width="16" height="170" fill="#6a6a6a"/><rect x="1631" y="698.5" width="13" height="16" rx="3" fill="#8a8a8a"/><path d="M1632.5 710 L1637.5 703.5 L1642.5 710 Z" fill="#333"/><rect x="1631" y="718.5" width="13" height="106" rx="6" fill="#4e4e4e"/><rect x="1631" y="849.5" width="13" height="16" rx="3" fill="#8a8a8a"/><path d="M1632.5 854 L1637.5 860.5 L1642.5 854 Z" fill="#333"/><rect x="995" y="867" width="633.5" height="19.5" fill="#5c5c5c"/><rect x="997" y="869" width="14" height="16" rx="3" fill="#7a7a7a"/><path d="M1008 871.5 L1001.5 877 L1008 882.5 Z" fill="#333"/><rect x="1015" y="869.5" width="527" height="15" rx="7" fill="#3e3e3e"/><rect x="1613" y="869" width="14.5" height="16" rx="3" fill="#7a7a7a"/><path d="M1616.5 871.5 L1623 877 L1616.5 882.5 Z" fill="#333"/><rect x="1" y="931" width="155" height="82" rx="5" fill="url(#bbg)" stroke="#3a3a3a" stroke-width="1"/><rect x="7" y="937" width="143" height="45" rx="4" fill="#c0c0c0" stroke="#5a5a5a" stroke-width="1"/><text x="78" y="1000.5" font-size="13.5" font-weight="bold" fill="#2e2e2e" text-anchor="middle">White</text><rect x="159" y="931" width="155" height="82" rx="5" fill="url(#bbg)" stroke="#3a3a3a" stroke-width="1"/><rect x="165" y="937" width="143" height="45" rx="4" fill="#c00000" stroke="#5a5a5a" stroke-width="1"/><text x="236" y="1000.5" font-size="13.5" font-weight="bold" fill="#2e2e2e" text-anchor="middle">Red</text><rect x="317" y="931" width="155" height="82" rx="5" fill="url(#bbg)" stroke="#3a3a3a" stroke-width="1"/><rect x="323" y="937" width="143" height="45" rx="4" fill="#00c000" stroke="#5a5a5a" stroke-width="1"/><text x="394" y="1000.5" font-size="13.5" font-weight="bold" fill="#2e2e2e" text-anchor="middle">Green</text><rect x="475" y="931" width="155" height="82" rx="5" fill="url(#bbg)" stroke="#3a3a3a" stroke-width="1"/><rect x="481" y="937" width="143" height="45" rx="4" fill="#0000c0" stroke="#5a5a5a" stroke-width="1"/><text x="552" y="1000.5" font-size="13.5" font-weight="bold" fill="#2e2e2e" text-anchor="middle">Blue</text><rect x="633" y="931" width="155" height="82" rx="5" fill="url(#bbg)" stroke="#3a3a3a" stroke-width="1"/><rect x="639" y="937" width="143" height="45" rx="4" fill="#00c0c0" stroke="#5a5a5a" stroke-width="1"/><text x="710" y="1000.5" font-size="13.5" font-weight="bold" fill="#2e2e2e" text-anchor="middle">Cyan</text><rect x="791" y="931" width="155" height="82" rx="5" fill="url(#bbg)" stroke="#3a3a3a" stroke-width="1"/><rect x="797" y="937" width="143" height="45" rx="4" fill="#c000c0" stroke="#5a5a5a" stroke-width="1"/><text x="868" y="1000.5" font-size="13.5" font-weight="bold" fill="#2e2e2e" text-anchor="middle">Magenta</text><rect x="949" y="931" width="155" height="82" rx="5" fill="url(#bbg)" stroke="#3a3a3a" stroke-width="1"/><rect x="955" y="937" width="143" height="45" rx="4" fill="#c0c000" stroke="#5a5a5a" stroke-width="1"/><text x="1026" y="1000.5" font-size="13.5" font-weight="bold" fill="#2e2e2e" text-anchor="middle">Yellow</text><rect x="1106" y="931" width="155" height="82" rx="5" fill="#2c2c2c" stroke="#1c1c1c" stroke-width="1.5"/><rect x="1112.5" y="937" width="143" height="45" rx="4" fill="#fff" stroke="#888" stroke-width="0.8"/><text x="1184" y="1000.5" font-size="13.5" font-weight="bold" fill="#f4f4f4" text-anchor="middle" stroke="#f4f4f4" stroke-width="0.3">100W</text><rect x="1265" y="931" width="60" height="22" rx="4" fill="url(#cbg)" stroke="#444" stroke-width="1"/><circle cx="1295.5" cy="941.5" r="9" fill="url(#circg)"/><path d="M1290 944.5 L1295.5 938.5 L1301 944.5 Z" fill="#2a2a2a"/><rect x="1265" y="954" width="60" height="60" rx="4" fill="url(#cbg2)" stroke="#444" stroke-width="1"/><rect x="1276.5" y="962" width="37" height="37" rx="5" fill="#9a9a9a" stroke="#1e1e1e" stroke-width="2.5"/><rect x="1278" y="981" width="34" height="16.5" rx="3" fill="#7a7a7a"/><rect x="1287" y="972" width="17" height="17" fill="#000"/><rect x="1326.5" y="931" width="58.5" height="37" fill="url(#tbg)" stroke="#3a3a3a" stroke-width="1"/><circle cx="1355.75" cy="949" r="12.5" fill="url(#circg)"/><rect x="1385" y="931" width="56" height="37" fill="url(#tbg)" stroke="#3a3a3a" stroke-width="1"/><circle cx="1413.0" cy="949" r="12.5" fill="url(#circg)"/><rect x="1441" y="931" width="56" height="37" fill="url(#tbg2)" stroke="#3a3a3a" stroke-width="1"/><circle cx="1469.0" cy="949" r="12.5" fill="url(#circg)"/><rect x="1498" y="931" width="55.5" height="37" fill="url(#tbg)" stroke="#3a3a3a" stroke-width="1"/><circle cx="1525.75" cy="949" r="12.5" fill="url(#circg)"/><rect x="1553.5" y="931" width="56.0" height="37" fill="url(#tbg)" stroke="#3a3a3a" stroke-width="1"/><circle cx="1581.5" cy="949" r="12.5" fill="url(#circg)"/><rect x="1350.5" y="944" width="9" height="9" fill="#2a2a2a"/><path d="M1408 942 L1418 949 L1408 956 Z" fill="#2a2a2a"/><path d="M1465.5 945 H1462.5 V956 H1465.5 M1473.5 945 H1476.5 V956 H1473.5" fill="none" stroke="#2a2a2a" stroke-width="2.2"/><circle cx="1467.8" cy="950.5" r="1.1" fill="#2a2a2a"/><circle cx="1471.2" cy="950.5" r="1.1" fill="#2a2a2a"/><ellipse cx="1521" cy="949" rx="4" ry="3.2" fill="none" stroke="#2a2a2a" stroke-width="2.2"/><ellipse cx="1529.5" cy="949" rx="4" ry="3.2" fill="none" stroke="#2a2a2a" stroke-width="2.2"/><path d="M1574 951 A7 7 0 0 1 1586 945 M1589 947 A7 7 0 0 1 1577 953" fill="none" stroke="#2a2a2a" stroke-width="2.5"/><path d="M1583 942 L1589 943 L1587 948 Z M1579 956 L1573 955 L1575 950 Z" fill="#2a2a2a"/><rect x="1326.5" y="969" width="170" height="45" rx="4" fill="url(#nbg)" stroke="#3a3a3a" stroke-width="1"/><rect x="1498" y="969" width="175" height="45" rx="4" fill="url(#nbg)" stroke="#3a3a3a" stroke-width="1"/><circle cx="1365" cy="988" r="12" fill="url(#circg)"/><path d="M1365 982.5 L1360 988.5 L1365 994.5 M1371 982.5 L1366 988.5 L1371 994.5" fill="none" stroke="#333" stroke-width="1.8"/><circle cx="1631.5" cy="988" r="12" fill="url(#circg)"/><path d="M1626 982.5 L1631 988.5 L1626 994.5 M1632 982.5 L1637 988.5 L1632 994.5" fill="none" stroke="#333" stroke-width="1.8"/><text x="1399" y="998.5" font-size="27.5" fill="#363636" textLength="62.4" lengthAdjust="spacingAndGlyphs" stroke="#363636" stroke-width="0.9" xml:space="preserve">Back</text><text x="1532.6" y="998" font-size="27.5" fill="#363636" textLength="64.2" lengthAdjust="spacingAndGlyphs" stroke="#363636" stroke-width="0.9" xml:space="preserve">Next</text><g transform="translate(1636 948)" fill="#e00000"><path d="M-1.6 0 L-3.6 -14.5 Q0 -18.5 3.6 -14.5 L1.6 0 Z" transform="rotate(0)"/><path d="M-1.6 0 L-3.6 -14.5 Q0 -18.5 3.6 -14.5 L1.6 0 Z" transform="rotate(60)"/><path d="M-1.6 0 L-3.6 -14.5 Q0 -18.5 3.6 -14.5 L1.6 0 Z" transform="rotate(120)"/><path d="M-1.6 0 L-3.6 -14.5 Q0 -18.5 3.6 -14.5 L1.6 0 Z" transform="rotate(180)"/><path d="M-1.6 0 L-3.6 -14.5 Q0 -18.5 3.6 -14.5 L1.6 0 Z" transform="rotate(240)"/><path d="M-1.6 0 L-3.6 -14.5 Q0 -18.5 3.6 -14.5 L1.6 0 Z" transform="rotate(300)"/><circle r="3"/></g>
</svg></body></html>
